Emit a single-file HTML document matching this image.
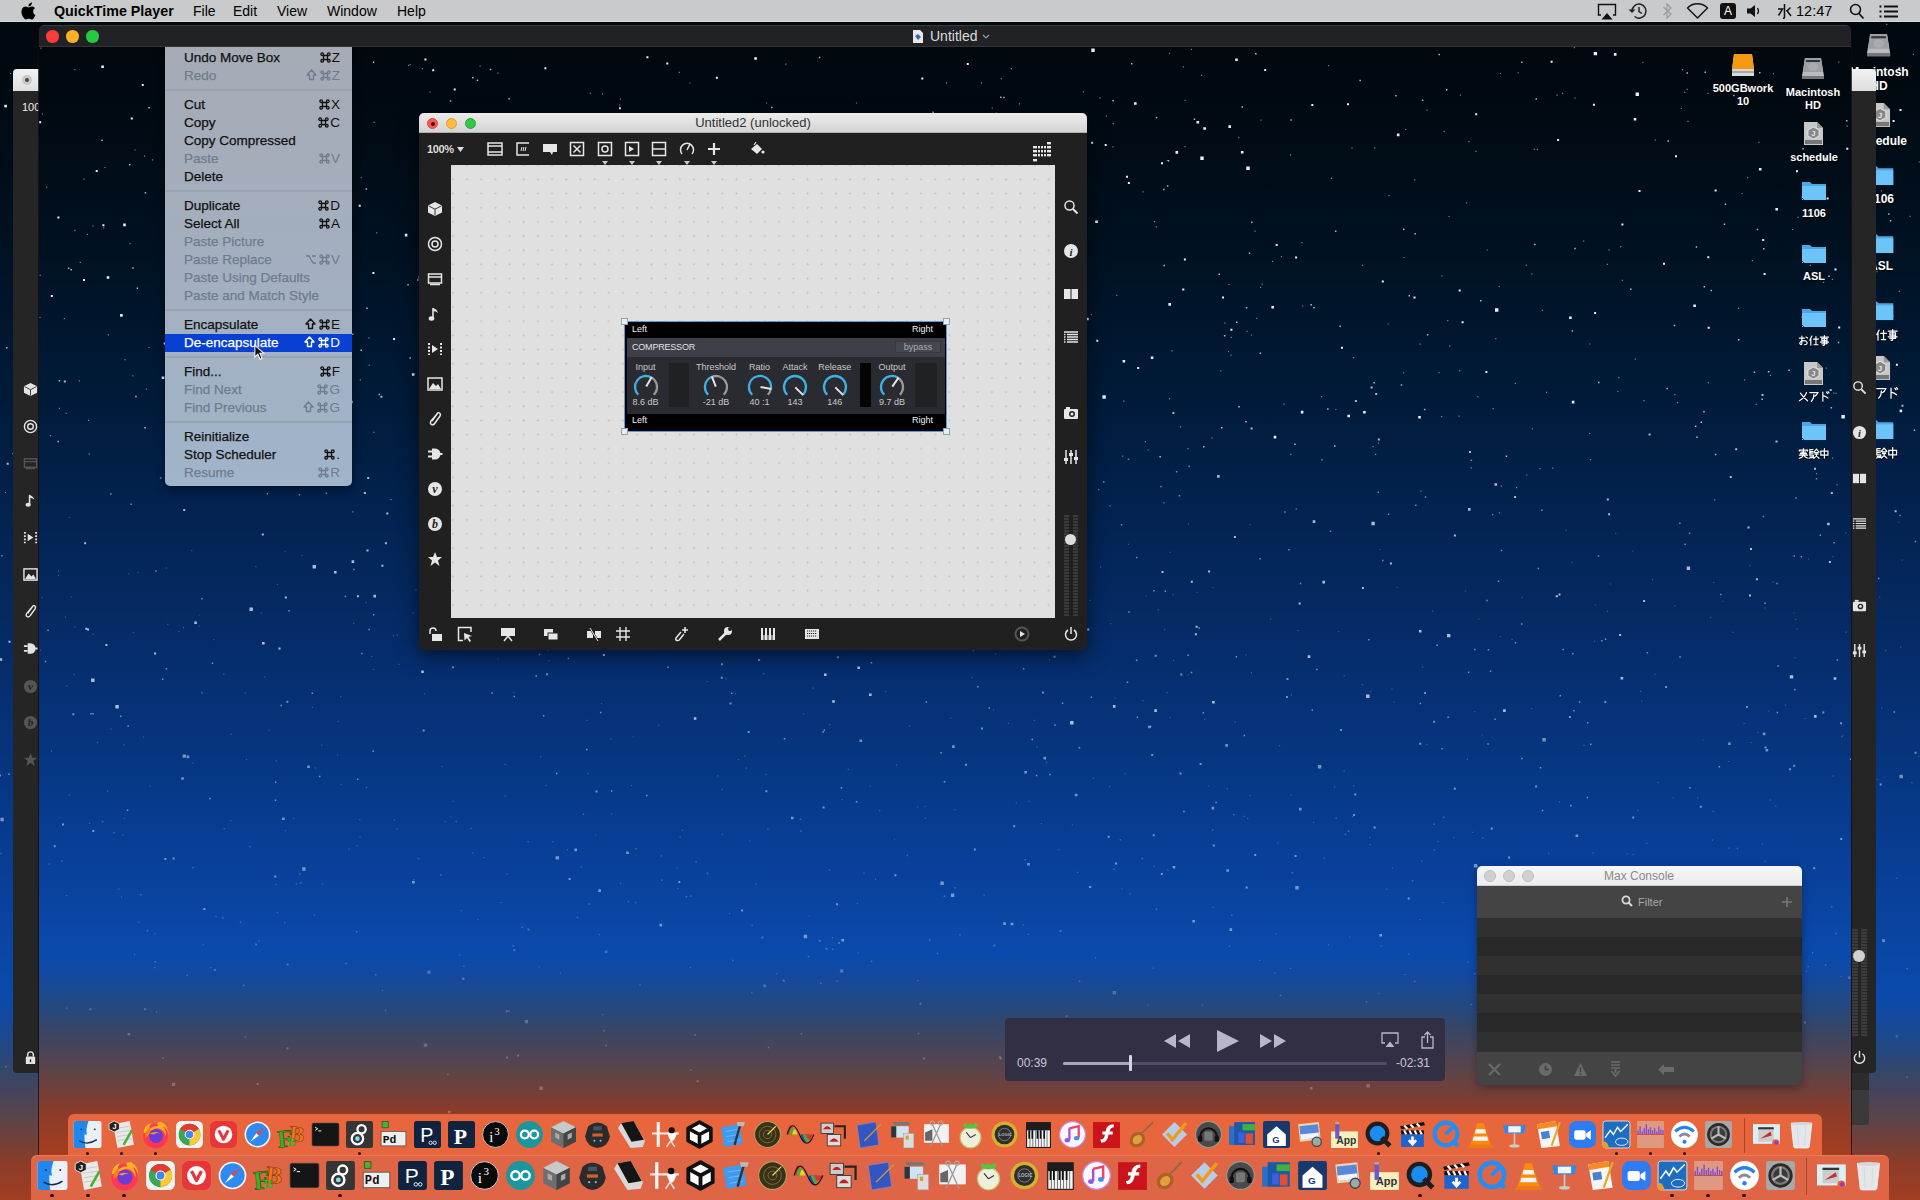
<!DOCTYPE html>
<html><head><meta charset="utf-8"><style>
*{box-sizing:border-box;margin:0;padding:0}
html,body{width:1920px;height:1200px;overflow:hidden;background:#000}
body{position:relative;font-family:"Liberation Sans",sans-serif;}
.a{position:absolute}
#wall{left:0;top:0;width:1920px;height:1200px;background:linear-gradient(to bottom,#02070d 16px,#010910 80px,#001121 239px,#001b3a 403px,#04265a 573px,#06337a 742px,#08409a 891px,#0a44a0 928px,#0a4aac 991px,#0c4aa8 1004px,#1448a0 1017px,#1a4a90 1033px,#25487f 1051px,#364666 1074px,#4a4458 1097px,#5e4448 1120px,#743f38 1143px,#8a3c2a 1161px,#a63e20 1209px);}
#menubar{left:0;top:0;width:1920px;height:22px;background:#c9cacc;border-bottom:1px solid #d6d8d8;color:#000;font-size:14px;}
#menubar span{position:absolute;top:3px;white-space:nowrap}
#qt{left:39px;top:25px;width:1812px;height:1131px;overflow:hidden;border-radius:5px 5px 0 0}
#vwall{left:0;top:0;width:1812px;height:1131px;background:linear-gradient(to bottom,#02070d 15px,#010910 75px,#001121 225px,#001b3a 380px,#04265a 540px,#06337a 700px,#08409a 840px,#0a44a0 875px,#0a4aac 925px,#0c4aa8 937px,#1448a0 950px,#1a4a90 965px,#25487f 982px,#364666 1003px,#4a4458 1025px,#5e4448 1047px,#743f38 1068px,#8a3c2a 1085px,#a63e20 1131px);}
#qttitle{left:0;top:0;width:1812px;height:22px;background:#212225;border-top:1px solid #3a3b3e;border-bottom:1px solid #333;border-radius:5px 5px 0 0}
.tl{position:absolute;width:13px;height:13px;border-radius:50%}

#qtedge{left:38px;top:25px;width:1814px;height:1131px;border-left:1px solid rgba(20,10,15,.75);border-right:1px solid rgba(20,10,15,.75);border-radius:5px 5px 0 0;pointer-events:none}
#vw{left:-39px;top:-25px;width:1920px;height:1200px}
.menu{left:165px;top:44px;width:187px;height:442px;background:linear-gradient(#a6abb5,#a3afbf 50%,#a0b4ca);border-radius:0 0 5px 5px;box-shadow:0 3px 10px rgba(0,0,0,.45)}
.mi{position:absolute;left:184px;font-size:13.5px;color:#111;white-space:nowrap;line-height:18px;height:18px;-webkit-text-stroke:0.25px currentColor}
.mi.d{color:#6f7c8e}
.sc{position:absolute;font-size:13.5px;color:#111;white-space:nowrap;line-height:18px;height:18px;text-align:right;right:1580px}
.sc.d{color:#6f7c8e}
.sep{position:absolute;left:165px;width:187px;height:2px;background:#98a3b3}
.hl{position:absolute;left:165px;top:334px;width:187px;height:18px;background:#0740d2}
.mw{left:419px;top:113px;width:668px;height:537px;background:#202020;border-radius:5px;box-shadow:0 6px 20px rgba(0,0,0,.55)}
.mwt{left:419px;top:113px;width:668px;height:20px;background:linear-gradient(#ececec,#d4d4d4);border-radius:5px 5px 0 0;border-bottom:1px solid #b0b0b0}
.canvas{left:451px;top:165px;width:604px;height:453px;background-color:#e0e0e0;background-image:radial-gradient(circle,#c8c8c8 0.9px,transparent 1.3px);background-size:14.19px 14.19px;background-position:-5.3px -7px}
.ico{position:absolute}
.w{fill:#e8e8e8}
.cl{font-size:9px;color:#f0f0f0;line-height:11px}
.kl{width:60px;text-align:center;font-size:9px;color:#c8c8c8;line-height:11px}

</style></head><body>
<div id="wall" class="a"></div>
<svg class="a" style="left:0;top:0" width="1920" height="1200" fill="#e6eeff"><path d="M12.2 453.1h1.2v1.2h-1.2zM4.9 491.9h1.2v1.2h-1.2zM10.0 72.9h1.2v1.2h-1.2z" fill-opacity="0.5"/><path d="M4.3 104.8h2.6v2.6h-2.6z" fill-opacity="1"/><path d="M6.0 347.1h1.5v1.5h-1.5z" fill-opacity="0.75"/><path d="M6.7 462.8h2v2h-2zM8.5 640.8h2v2h-2z" fill-opacity="0.75"/><path d="M5.2 1066.0h1.5v1.5h-1.5zM0.4 852.8h1.5v1.5h-1.5z" fill-opacity="0.25"/><path d="M0.4 817.8h3.4v3.4h-3.4z" fill-opacity="0.5"/><path d="M-1.0 774.4h2v2h-2z" fill-opacity="0.5"/><path d="M8.2 773.4h1.5v1.5h-1.5zM1.3 555.0h1.5v1.5h-1.5z" fill-opacity="0.5"/><path d="M-0.4 658.2h2.6v2.6h-2.6z" fill-opacity="0.75"/><path d="M1901.7 559.6h1.2v1.2h-1.2zM1879.1 596.4h1.2v1.2h-1.2zM1896.2 877.7h1.2v1.2h-1.2zM1918.0 756.1h1.2v1.2h-1.2zM1881.1 707.2h1.2v1.2h-1.2zM1898.3 521.4h1.2v1.2h-1.2zM1876.5 779.0h1.2v1.2h-1.2zM1885.0 650.0h1.2v1.2h-1.2zM1900.1 646.6h1.2v1.2h-1.2zM1911.3 782.0h1.2v1.2h-1.2z" fill-opacity="0.25"/><path d="M1901.5 404.7h2v2h-2zM1894.6 510.3h2v2h-2z" fill-opacity="0.75"/><path d="M1899.3 514.7h1.5v1.5h-1.5zM1877.9 577.7h1.5v1.5h-1.5zM1893.5 711.3h1.5v1.5h-1.5zM1914.7 540.7h1.5v1.5h-1.5z" fill-opacity="0.5"/><path d="M1906.4 968.1h1.5v1.5h-1.5zM1906.5 1076.3h1.5v1.5h-1.5z" fill-opacity="0.25"/><path d="M1886.2 23.8h1.2v1.2h-1.2zM1880.9 190.3h1.2v1.2h-1.2zM1909.4 215.7h1.2v1.2h-1.2zM1918.8 161.4h1.2v1.2h-1.2zM1912.8 53.8h1.2v1.2h-1.2zM1898.7 290.8h1.2v1.2h-1.2zM1876.7 34.1h1.2v1.2h-1.2zM1876.5 271.0h1.2v1.2h-1.2z" fill-opacity="0.5"/><path d="M1913.7 429.6h1.5v1.5h-1.5zM1886.9 171.1h1.5v1.5h-1.5zM1889.8 220.0h1.5v1.5h-1.5zM1888.0 138.2h1.5v1.5h-1.5zM1888.1 213.2h1.5v1.5h-1.5zM1891.9 314.9h1.5v1.5h-1.5z" fill-opacity="0.75"/><path d="M1886.3 1132.8h1.2v1.2h-1.2zM1880.7 1102.4h1.2v1.2h-1.2z" fill-opacity="0"/><path d="M1895.9 363.7h2v2h-2zM1892.6 119.9h2v2h-2zM1883.5 357.8h2v2h-2zM1899.5 109.1h2v2h-2zM1898.3 67.5h2v2h-2z" fill-opacity="1"/><path d="M1914.6 751.8h2v2h-2zM1879.7 783.5h2v2h-2z" fill-opacity="0.5"/><path d="M1882.3 939.3h2.6v2.6h-2.6z" fill-opacity="0.5"/><path d="M1899.5 774.8h3.4v3.4h-3.4z" fill-opacity="0.5"/><path d="M1899.6 409.6h2.6v2.6h-2.6z" fill-opacity="1"/><path d="M1895.7 1035.3h2v2h-2z" fill-opacity="0.25"/><path d="M1886.7 310.7h3.4v3.4h-3.4z" fill-opacity="1"/></svg>
<div id="menubar" class="a">
<svg class="a" style="left:20px;top:2px" width="16" height="18" viewBox="0 0 16 18"><path d="M13.1 9.6c0-2.2 1.800-3.200 1.900-3.300-1-1.500-2.600-1.700-3.200-1.700-1.300-.1-2.600.8-3.300.8-.7 0-1.700-.8-2.800-.8C4.300 4.600 2.900 5.400 2.200 6.700c-1.500 2.600-.4 6.500 1.100 8.600.7 1 1.600 2.200 2.700 2.200 1.100-.0 1.500-.7 2.800-.7s1.700.7 2.800.7c1.200 0 1.900-1.100 2.600-2.100.8-1.200 1.200-2.300 1.200-2.400-.0 0-2.300-.9-2.300-3.400zM11 3.200c.6-.7 1-1.700.9-2.700-.9 0-1.900.6-2.500 1.300-.6.6-1 1.600-.9 2.600 1 .1 1.900-.5 2.500-1.200z" fill="#000"/></svg>
<span style="left:54px;font-weight:bold;font-size:14.3px">QuickTime Player</span>
<span style="left:193px">File</span>
<span style="left:233px">Edit</span>
<span style="left:277px">View</span>
<span style="left:327px">Window</span>
<span style="left:397px">Help</span>
<svg class="a" style="left:1597px;top:3px" width="20" height="17" viewBox="0 0 20 17"><path d="M4 12H1.5V1.5H18.5V12H16" fill="none" stroke="#111" stroke-width="1.4"/><path d="M4.5 16.5L10 10L15.5 16.5Z" fill="#111"/></svg>
<svg class="a" style="left:1627px;top:2px" width="21" height="18" viewBox="0 0 21 18"><path d="M5 9A7 7 0 1 1 7.5 14.5" fill="none" stroke="#222" stroke-width="1.5"/><path d="M1.5 7.5L5 11L8.5 7.5Z" fill="#222"/><path d="M12 5V9.5L15 11.5" fill="none" stroke="#222" stroke-width="1.5"/></svg>
<svg class="a" style="left:1662px;top:2px" width="11" height="18" viewBox="0 0 11 18"><path d="M1.5 5L9 12L5 16V2L9 6L1.5 13" fill="none" stroke="#9a9a9a" stroke-width="1.2"/></svg>
<svg class="a" style="left:1686px;top:3px" width="23" height="16" viewBox="0 0 23 16"><path d="M1.500 5A14 14 0 0 1 21.5 5L11.5 15Z" fill="none" stroke="#111" stroke-width="1.4" stroke-linejoin="round"/></svg>
<div class="a" style="left:1720px;top:3px;width:16px;height:16px;border-radius:3px;background:#111;color:#fff;font-size:12px;line-height:16px;text-align:center">A</div>
<svg class="a" style="left:1746px;top:4px" width="16" height="14" viewBox="0 0 16 14"><path d="M1 4.500H4.500L9 1V13L4.500 9.500H1Z" fill="#111"/><path d="M11.500 4Q13.500 7 11.500 10" fill="none" stroke="#111" stroke-width="1.3"/></svg>
<svg class="a" style="left:1777px;top:3px" width="15" height="16" viewBox="0 0 15 16"><path d="M7.5 1V14.500Q7.5 15.500 6 15M1 6H5.500L1.500 12.500M13.500 4.500L9.500 8.500M9.500 7L14 13" fill="none" stroke="#111" stroke-width="1.5"/></svg>
<span style="left:1796px;font-size:14.5px">12:47</span>
<svg class="a" style="left:1849px;top:3px" width="16" height="17" viewBox="0 0 16 17"><circle cx="6.500" cy="6.500" r="5" fill="none" stroke="#111" stroke-width="1.6"/><path d="M10 10.500L14.500 15.500" stroke="#111" stroke-width="1.8"/></svg>
<svg class="a" style="left:1879px;top:5px" width="20" height="13" viewBox="0 0 20 13"><path d="M5 1.500H19M5 6.500H19M5 11.500H19" stroke="#111" stroke-width="1.8"/><path d="M0.500 1.500H2.500M0.500 6.500H2.500M0.500 11.500H2.500" stroke="#111" stroke-width="1.8"/></svg>
</div>
<svg class="ico" style="left:1866.4px;top:32px" width="25.2" height="25.2" viewBox="0 0 24 24"><path d="M4 2H20L23 20V23H1V20Z" fill="#b8bcc0"/><path d="M4 2H20L22 16H2Z" fill="#9ca0a4"/><rect x="5" y="4" width="14" height="2" fill="#333"/><ellipse cx="12" cy="11" rx="5" ry="4" fill="#a8acb0"/><rect x="1" y="20" width="22" height="3" fill="#777"/></svg>
<div class="a" style="left:1829px;top:64.9091px;font-size:11px;font-weight:bold;color:#fff;text-align:center;width:100px;line-height:13px;text-shadow:0 1px 2px rgba(0,0,0,.9);font-size:12px;line-height:14.1818px">Macintosh</div>
<div class="a" style="left:1829px;top:79.0909px;font-size:11px;font-weight:bold;color:#fff;text-align:center;width:100px;line-height:13px;text-shadow:0 1px 2px rgba(0,0,0,.9);font-size:12px;line-height:14.1818px">HD</div>
<svg class="ico" style="left:1868.4px;top:102px" width="25.2" height="25.2" viewBox="0 0 24 24"><path d="M2 1H15L21 7V24H2Z" fill="#c8c8c8"/><path d="M15 1V7H21" fill="#9a9a9a"/><path d="M11.5 6L17 9V15L11.5 18L6 15V9Z" fill="#888" stroke="#eee" stroke-width="0.8"/><text x="9.5" y="15" font-size="7" font-weight="bold" font-family="Liberation Sans" fill="#eee">J</text><rect x="3" y="19" width="17" height="4" fill="#777"/></svg>
<div class="a" style="left:1831px;top:133.909px;font-size:11px;font-weight:bold;color:#fff;text-align:center;width:100px;line-height:13px;text-shadow:0 1px 2px rgba(0,0,0,.9);font-size:12px;line-height:14.1818px">schedule</div>
<svg class="ico" style="left:1867.35px;top:163px" width="27.3" height="25.2" viewBox="0 0 26 24"><path d="M1 3H9L11 5H25V21H1Z" fill="#4aa8e8"/><path d="M1 7H25V21H1Z" fill="#6cc4f8"/><path d="M1 19L3 21" stroke="#222" stroke-width="0.8"/></svg>
<div class="a" style="left:1831px;top:191.909px;font-size:11px;font-weight:bold;color:#fff;text-align:center;width:100px;line-height:13px;text-shadow:0 1px 2px rgba(0,0,0,.9);font-size:12px;line-height:14.1818px">1106</div>
<svg class="ico" style="left:1867.35px;top:231px" width="27.3" height="25.2" viewBox="0 0 26 24"><path d="M1 3H9L11 5H25V21H1Z" fill="#4aa8e8"/><path d="M1 7H25V21H1Z" fill="#6cc4f8"/><path d="M1 19L3 21" stroke="#222" stroke-width="0.8"/></svg>
<div class="a" style="left:1831px;top:258.909px;font-size:11px;font-weight:bold;color:#fff;text-align:center;width:100px;line-height:13px;text-shadow:0 1px 2px rgba(0,0,0,.9);font-size:12px;line-height:14.1818px">ASL</div>
<svg class="ico" style="left:1867.35px;top:298px" width="27.3" height="25.2" viewBox="0 0 26 24"><path d="M1 3H9L11 5H25V21H1Z" fill="#4aa8e8"/><path d="M1 7H25V21H1Z" fill="#6cc4f8"/><path d="M1 19L3 21" stroke="#222" stroke-width="0.8"/></svg>
<svg class="ico" style="left:1863.6px;top:329.3px;overflow:visible" width="34.9" height="11.7" viewBox="0 0 30.6 10.5"><g fill="none" stroke="rgba(0,0,0,.55)" stroke-width="2.2" stroke-linecap="round" transform="translate(0 0.6)"><g transform="translate(0 0)"><path d="M1 3H6 M3.5 1V8Q3.5 10 2 9Q0.5 8 3 6Q7 4.5 8.5 7Q9 9.5 6 9.5 M7.5 2L9 3"/></g><g transform="translate(10.2 0)"><path d="M3 1L1 5 M2 3.5V10 M4.5 4H9.5 M7 1.5V9.5 M5 9.5H9"/></g><g transform="translate(20.4 0)"><path d="M1 2H9 M5 0.5V9.5Q5 10.5 3.5 10 M2.5 3.5H7.5V5.5H2.5Z M1 7H9 M2.5 8.5H7.5 M7.5 5.5V8.5"/></g></g><g fill="none" stroke="#fff" stroke-width="1.15" stroke-linecap="round"><g transform="translate(0 0)"><path d="M1 3H6 M3.5 1V8Q3.5 10 2 9Q0.5 8 3 6Q7 4.5 8.5 7Q9 9.5 6 9.5 M7.5 2L9 3"/></g><g transform="translate(10.2 0)"><path d="M3 1L1 5 M2 3.5V10 M4.5 4H9.5 M7 1.5V9.5 M5 9.5H9"/></g><g transform="translate(20.4 0)"><path d="M1 2H9 M5 0.5V9.5Q5 10.5 3.5 10 M2.5 3.5H7.5V5.5H2.5Z M1 7H9 M2.5 8.5H7.5 M7.5 5.5V8.5"/></g></g></svg>
<svg class="ico" style="left:1868.4px;top:355px" width="25.2" height="25.2" viewBox="0 0 24 24"><path d="M2 1H15L21 7V24H2Z" fill="#c8c8c8"/><path d="M15 1V7H21" fill="#9a9a9a"/><path d="M11.5 6L17 9V15L11.5 18L6 15V9Z" fill="#888" stroke="#eee" stroke-width="0.8"/><text x="9.5" y="15" font-size="7" font-weight="bold" font-family="Liberation Sans" fill="#eee">J</text><rect x="3" y="19" width="17" height="4" fill="#777"/></svg>
<svg class="ico" style="left:1863.6px;top:387.3px;overflow:visible" width="34.9" height="11.7" viewBox="0 0 30.6 10.5"><g fill="none" stroke="rgba(0,0,0,.55)" stroke-width="2.2" stroke-linecap="round" transform="translate(0 0.6)"><g transform="translate(0 0)"><path d="M2 2Q5 6 9 9.5 M8 1.5Q6 7 1 9.5"/></g><g transform="translate(10.2 0)"><path d="M1 1.5H9Q8 4 6 5 M5 3.5Q5 8 2.5 10"/></g><g transform="translate(20.4 0)"><path d="M3.5 1V10 M3.5 4.5Q6.5 5 8.5 7 M7 1L8 2.5 M8.5 0.5L9.5 2"/></g></g><g fill="none" stroke="#fff" stroke-width="1.15" stroke-linecap="round"><g transform="translate(0 0)"><path d="M2 2Q5 6 9 9.5 M8 1.5Q6 7 1 9.5"/></g><g transform="translate(10.2 0)"><path d="M1 1.5H9Q8 4 6 5 M5 3.5Q5 8 2.5 10"/></g><g transform="translate(20.4 0)"><path d="M3.5 1V10 M3.5 4.5Q6.5 5 8.5 7 M7 1L8 2.5 M8.5 0.5L9.5 2"/></g></g></svg>
<svg class="ico" style="left:1867.35px;top:417px" width="27.3" height="25.2" viewBox="0 0 26 24"><path d="M1 3H9L11 5H25V21H1Z" fill="#4aa8e8"/><path d="M1 7H25V21H1Z" fill="#6cc4f8"/><path d="M1 19L3 21" stroke="#222" stroke-width="0.8"/></svg>
<svg class="ico" style="left:1863.6px;top:447.3px;overflow:visible" width="34.9" height="11.7" viewBox="0 0 30.6 10.5"><g fill="none" stroke="rgba(0,0,0,.55)" stroke-width="2.2" stroke-linecap="round" transform="translate(0 0.6)"><g transform="translate(0 0)"><path d="M5 0.5V2 M1 3V2H9V3 M2.5 4H7.5 M2 5.5H8 M1 7H9 M5 3V7Q4 9.5 1 10 M5.5 7.5Q7 9.5 9.5 10"/></g><g transform="translate(10.2 0)"><path d="M1 1.5V7H4.5 M1 1.5H4 M1 3.5H4 M1 5H4 M4.5 7V9.5 M1.5 8.5L1 10 M2.5 8.5V9.5 M3.5 8.5V9.5 M7.5 1L5 4 M7.5 1L10 4 M6 4.5H9 M6 6H9 M7.5 6V8 M5 10Q7 8 7.5 8Q8 8 10 10"/></g><g transform="translate(20.4 0)"><path d="M1.5 3H8.5V7H1.5Z M5 0.5V10"/></g></g><g fill="none" stroke="#fff" stroke-width="1.15" stroke-linecap="round"><g transform="translate(0 0)"><path d="M5 0.5V2 M1 3V2H9V3 M2.5 4H7.5 M2 5.5H8 M1 7H9 M5 3V7Q4 9.5 1 10 M5.5 7.5Q7 9.5 9.5 10"/></g><g transform="translate(10.2 0)"><path d="M1 1.5V7H4.5 M1 1.5H4 M1 3.5H4 M1 5H4 M4.5 7V9.5 M1.5 8.5L1 10 M2.5 8.5V9.5 M3.5 8.5V9.5 M7.5 1L5 4 M7.5 1L10 4 M6 4.5H9 M6 6H9 M7.5 6V8 M5 10Q7 8 7.5 8Q8 8 10 10"/></g><g transform="translate(20.4 0)"><path d="M1.5 3H8.5V7H1.5Z M5 0.5V10"/></g></g></svg>
<div class="a" style="left:13px;top:69px;width:26px;height:1004px;background:#252525;border-radius:4px 0 0 4px"></div>
<div class="a" style="left:13px;top:69px;width:26px;height:22px;background:linear-gradient(#f2f2f2,#dedede);border-radius:4px 0 0 0"></div>
<div class="a" style="left:22px;top:75px;width:10px;height:10px;border-radius:50%;background:#c8c8c8"></div><div class="a" style="left:25px;top:78px;width:4px;height:4px;border-radius:50%;background:#444"></div>
<div class="a" style="left:22px;top:101px;font-size:11px;color:#eee;line-height:13px">100</div>
<svg class="ico" style="left:22.5px;top:381.5px" width="15" height="15" viewBox="0 0 16 16"><path d="M8 1L15 4.5V11.5L8 15L1 11.5V4.5Z" fill="#e4e4e4"/><path d="M1.5 4.8L8 8.2L14.5 4.8M8 8.2V14.5" fill="none" stroke="#252525" stroke-width="0.9"/></svg>
<svg class="ico" style="left:22.5px;top:418.5px" width="15" height="15" viewBox="0 0 16 16"><circle cx="8" cy="8" r="6.5" fill="none" stroke="#e4e4e4" stroke-width="1.5"/><circle cx="8" cy="8" r="3" fill="none" stroke="#e4e4e4" stroke-width="1.5"/></svg>
<svg class="ico" style="left:22.5px;top:455.5px" width="15" height="15" viewBox="0 0 16 16"><rect x="1.5" y="3" width="13" height="9" fill="none" stroke="#555" stroke-width="1.5"/><path d="M1.5 6H14.5M3 13.5H13" fill="none" stroke="#555" stroke-width="1.5"/></svg>
<svg class="ico" style="left:22.5px;top:492.5px" width="15" height="15" viewBox="0 0 16 16"><path d="M7 2V12" stroke="#e4e4e4" stroke-width="1.6"/><ellipse cx="5.5" cy="12.5" rx="2.8" ry="2.2" fill="#e4e4e4"/><path d="M7 2Q11 3 12 7Q10 5 7 5" fill="#e4e4e4"/></svg>
<svg class="ico" style="left:22.5px;top:529.5px" width="15" height="15" viewBox="0 0 16 16"><path d="M2 2V14M14 2V14" stroke="#e4e4e4" stroke-width="2" stroke-dasharray="2 1.5"/><path d="M5 4L11 8L5 12Z" fill="#e4e4e4"/></svg>
<svg class="ico" style="left:22.5px;top:566.5px" width="15" height="15" viewBox="0 0 16 16"><rect x="1" y="2" width="14" height="12" fill="none" stroke="#e4e4e4" stroke-width="1.5"/><path d="M2 13L6 7L9 10L11 8L14 13Z" fill="#e4e4e4"/></svg>
<svg class="ico" style="left:22.5px;top:603.5px" width="15" height="15" viewBox="0 0 16 16"><path d="M10 3L4 10Q2.5 12.5 4.5 13.5Q6.5 14.5 8 12L13 5Q14 3 12.5 2Q11 1 10 3L5 10" fill="none" stroke="#e4e4e4" stroke-width="1.5"/></svg>
<svg class="ico" style="left:22.5px;top:640.5px" width="15" height="15" viewBox="0 0 16 16"><path d="M1 5.5H5M1 10.5H5" stroke="#e4e4e4" stroke-width="1.8"/><path d="M5 2.5H8A5.5 5.5 0 0 1 8 13.5H5Z" fill="#e4e4e4"/><path d="M13 8H15.5" stroke="#e4e4e4" stroke-width="2"/></svg>
<svg class="ico" style="left:22.5px;top:678.5px" width="15" height="15" viewBox="0 0 16 16"><circle cx="8" cy="8" r="7" fill="#555"/><text x="8" y="12" font-size="12" font-style="italic" font-weight="bold" text-anchor="middle" fill="#252525" font-family="Liberation Serif">v</text></svg>
<svg class="ico" style="left:22.5px;top:714.5px" width="15" height="15" viewBox="0 0 16 16"><circle cx="8" cy="8" r="7" fill="#555"/><text x="8" y="12" font-size="12" font-style="italic" font-weight="bold" text-anchor="middle" fill="#252525" font-family="Liberation Serif">b</text></svg>
<svg class="ico" style="left:22.5px;top:751.5px" width="15" height="15" viewBox="0 0 16 16"><path d="M8 1L10 6H15L11 9.5L12.5 15L8 11.5L3.5 15L5 9.5L1 6H6Z" fill="#555"/></svg>
<svg class="ico" style="left:22.5px;top:1049.5px" width="15" height="15" viewBox="0 0 16 16"><rect x="3" y="7" width="10" height="8" rx="1" fill="#e4e4e4"/><path d="M5 7V5A3 3 0 0 1 11 5V7" fill="none" stroke="#e4e4e4" stroke-width="1.5"/><path d="M8 10V13" stroke="#252525" stroke-width="1.5"/></svg>
<div class="a" style="left:1851px;top:69px;width:25px;height:1004px;background:#252525;border-radius:0 4px 4px 0"></div>
<div class="a" style="left:1851px;top:69px;width:25px;height:22px;background:linear-gradient(#f2f2f2,#dedede);border-radius:0 4px 0 0"></div>
<svg class="ico" style="left:1851.5px;top:379.5px" width="15" height="15" viewBox="0 0 16 16"><circle cx="6.5" cy="6.5" r="4.5" fill="none" stroke="#e4e4e4" stroke-width="1.5"/><path d="M10 10L14.5 14.5" stroke="#e4e4e4" stroke-width="2"/></svg>
<svg class="ico" style="left:1851.5px;top:424.5px" width="15" height="15" viewBox="0 0 16 16"><circle cx="8" cy="8" r="7" fill="#e4e4e4"/><text x="8" y="12.5" font-size="11" font-style="italic" font-weight="bold" text-anchor="middle" fill="#252525" font-family="Liberation Serif">i</text></svg>
<svg class="ico" style="left:1851.5px;top:470.5px" width="15" height="15" viewBox="0 0 16 16"><rect x="1" y="3" width="6.5" height="10" fill="#e4e4e4"/><rect x="8.5" y="3" width="6.5" height="10" fill="#e4e4e4"/></svg>
<svg class="ico" style="left:1851.5px;top:515.5px" width="15" height="15" viewBox="0 0 16 16"><path d="M1 3H15M4 5.5H15M4 8H15M4 10.5H15M4 13H15M1 5.5H2.5M1 8H2.5M1 10.5H2.5M1 13H2.5" stroke="#e4e4e4" stroke-width="1.3"/></svg>
<svg class="ico" style="left:1851.5px;top:597.5px" width="15" height="15" viewBox="0 0 16 16"><rect x="1" y="4" width="14" height="10" rx="1" fill="#e4e4e4"/><circle cx="9" cy="9" r="3" fill="#252525"/><circle cx="9" cy="9" r="1.5" fill="#e4e4e4"/><rect x="3" y="2" width="4" height="2" fill="#e4e4e4"/></svg>
<svg class="ico" style="left:1851.5px;top:642.5px" width="15" height="15" viewBox="0 0 16 16"><path d="M3 1V15M8 1V15M13 1V15" stroke="#e4e4e4" stroke-width="1.5"/><rect x="1" y="9" width="4" height="3" fill="#e4e4e4"/><rect x="6" y="4" width="4" height="3" fill="#e4e4e4"/><rect x="11" y="8" width="4" height="3" fill="#e4e4e4"/></svg>
<svg class="ico" style="left:1851.5px;top:1049.5px" width="15" height="15" viewBox="0 0 16 16"><path d="M5 4A5.5 5.5 0 1 0 11 4" fill="none" stroke="#e4e4e4" stroke-width="1.5"/><path d="M8 1V8" fill="none" stroke="#e4e4e4" stroke-width="1.5"/></svg>
<div class="a" style="left:1852px;top:929px;width:6px;height:108px;background:repeating-linear-gradient(#3c3c3c 0 2px,#2a2a2a 2px 3px)"></div>
<div class="a" style="left:1861px;top:929px;width:6px;height:108px;background:repeating-linear-gradient(#3c3c3c 0 2px,#2a2a2a 2px 3px)"></div>
<div class="a" style="left:1853px;top:950px;width:12px;height:12px;border-radius:50%;background:#d0d0d0"></div>
<div class="a" style="left:1851px;top:1073px;width:18px;height:17px;background:#2c2c2c"></div>
<div class="a" style="left:1851px;top:1090px;width:18px;height:35px;background:#3a3a3a;border-radius:0 0 3px 0"></div>
<div id="qt" class="a">
<div id="vwall" class="a"></div>
<div id="vw" class="a">
<svg class="a" style="left:0;top:0" width="1920" height="1200" fill="#e6eeff"><path d="M857.4 666.5h2.6v2.6h-2.6zM869.0 693.4h2.6v2.6h-2.6zM907.6 565.4h2.6v2.6h-2.6zM1468.0 508.1h2.6v2.6h-2.6zM824.0 673.4h2.6v2.6h-2.6zM262.0 641.9h2.6v2.6h-2.6zM1827.1 522.7h2.6v2.6h-2.6zM1112.9 705.1h2.6v2.6h-2.6zM194.3 621.5h2.6v2.6h-2.6zM1418.9 629.9h2.6v2.6h-2.6zM1620.6 676.9h2.6v2.6h-2.6zM1833.7 677.2h2.6v2.6h-2.6zM351.6 560.3h2.6v2.6h-2.6zM334.0 570.9h2.6v2.6h-2.6zM373.4 594.8h2.6v2.6h-2.6zM693.8 717.2h2.6v2.6h-2.6zM1494.5 483.2h2.6v2.6h-2.6zM1154.3 709.3h2.6v2.6h-2.6zM1814.0 715.1h2.6v2.6h-2.6zM1312.7 520.3h2.6v2.6h-2.6zM541.9 573.8h2.6v2.6h-2.6zM1217.1 475.1h2.6v2.6h-2.6zM1503.1 709.3h2.6v2.6h-2.6zM1322.4 580.8h2.6v2.6h-2.6zM1307.7 655.3h2.6v2.6h-2.6zM1212.1 701.0h2.6v2.6h-2.6zM421.2 670.5h2.6v2.6h-2.6zM566.7 558.6h2.6v2.6h-2.6zM832.2 700.2h2.6v2.6h-2.6zM588.8 569.0h2.6v2.6h-2.6zM753.2 598.6h2.6v2.6h-2.6z" fill-opacity="0.75"/><path d="M882.0 609.4h1.5v1.5h-1.5zM372.9 614.0h1.5v1.5h-1.5zM943.8 780.9h1.5v1.5h-1.5zM1127.8 458.5h1.5v1.5h-1.5zM1776.2 582.7h1.5v1.5h-1.5zM731.0 692.4h1.5v1.5h-1.5zM92.2 713.1h1.5v1.5h-1.5zM1521.1 757.8h1.5v1.5h-1.5zM1489.8 670.5h1.5v1.5h-1.5zM719.1 504.7h1.5v1.5h-1.5zM266.6 492.9h1.5v1.5h-1.5zM972.0 523.2h1.5v1.5h-1.5zM1178.7 494.9h1.5v1.5h-1.5zM1424.8 496.2h1.5v1.5h-1.5zM1850.0 758.5h1.5v1.5h-1.5zM1679.3 656.3h1.5v1.5h-1.5zM344.7 595.8h1.5v1.5h-1.5zM556.0 772.8h1.5v1.5h-1.5zM1679.1 522.6h1.5v1.5h-1.5zM840.7 786.9h1.5v1.5h-1.5zM1061.8 702.4h1.5v1.5h-1.5zM972.6 649.7h1.5v1.5h-1.5zM932.8 642.2h1.5v1.5h-1.5zM1198.4 627.2h1.5v1.5h-1.5zM229.9 483.5h1.5v1.5h-1.5zM564.4 463.2h1.5v1.5h-1.5zM209.3 797.8h1.5v1.5h-1.5zM230.8 465.0h1.5v1.5h-1.5zM1022.9 668.1h1.5v1.5h-1.5zM297.3 474.7h1.5v1.5h-1.5zM1776.6 711.8h1.5v1.5h-1.5zM783.8 738.0h1.5v1.5h-1.5zM1470.6 459.4h1.5v1.5h-1.5zM1819.5 534.6h1.5v1.5h-1.5zM1570.1 805.1h1.5v1.5h-1.5zM110.1 493.2h1.5v1.5h-1.5zM604.1 516.5h1.5v1.5h-1.5zM325.6 492.6h1.5v1.5h-1.5zM311.5 692.4h1.5v1.5h-1.5zM471.9 593.7h1.5v1.5h-1.5zM1031.5 738.7h1.5v1.5h-1.5zM1164.6 590.4h1.5v1.5h-1.5zM1284.2 511.3h1.5v1.5h-1.5zM1815.8 478.0h1.5v1.5h-1.5zM1035.9 774.7h1.5v1.5h-1.5zM436.2 499.0h1.5v1.5h-1.5zM1188.4 465.6h1.5v1.5h-1.5zM1590.0 743.4h1.5v1.5h-1.5zM1288.2 548.9h1.5v1.5h-1.5zM1126.7 681.4h1.5v1.5h-1.5zM1500.8 549.8h1.5v1.5h-1.5zM542.9 715.1h1.5v1.5h-1.5zM1586.6 796.7h1.5v1.5h-1.5zM1578.9 701.3h1.5v1.5h-1.5zM697.1 461.6h1.5v1.5h-1.5zM610.9 790.2h1.5v1.5h-1.5zM1539.8 767.1h1.5v1.5h-1.5zM674.5 640.5h1.5v1.5h-1.5zM704.8 522.3h1.5v1.5h-1.5zM687.8 523.7h1.5v1.5h-1.5zM820.9 464.9h1.5v1.5h-1.5zM1720.1 593.7h1.5v1.5h-1.5zM822.4 731.2h1.5v1.5h-1.5zM1587.0 722.1h1.5v1.5h-1.5zM1368.1 639.1h1.5v1.5h-1.5zM925.6 701.3h1.5v1.5h-1.5zM1541.8 809.8h1.5v1.5h-1.5zM513.5 695.7h1.5v1.5h-1.5zM646.0 794.7h1.5v1.5h-1.5zM993.0 645.5h1.5v1.5h-1.5zM1800.6 556.1h1.5v1.5h-1.5zM1486.3 599.8h1.5v1.5h-1.5zM667.2 666.5h1.5v1.5h-1.5zM1078.7 747.0h1.5v1.5h-1.5zM201.2 598.0h1.5v1.5h-1.5zM1601.1 640.1h1.5v1.5h-1.5zM1215.4 801.8h1.5v1.5h-1.5zM170.3 479.9h1.5v1.5h-1.5zM701.1 530.7h1.5v1.5h-1.5zM1316.1 668.7h1.5v1.5h-1.5zM535.5 675.2h1.5v1.5h-1.5zM1136.0 556.8h1.5v1.5h-1.5zM1562.4 648.7h1.5v1.5h-1.5zM786.9 478.8h1.5v1.5h-1.5zM887.4 632.8h1.5v1.5h-1.5zM1419.6 702.7h1.5v1.5h-1.5zM372.4 750.6h1.5v1.5h-1.5zM1175.9 471.1h1.5v1.5h-1.5zM958.7 476.6h1.5v1.5h-1.5zM1103.0 481.2h1.5v1.5h-1.5zM1321.3 458.9h1.5v1.5h-1.5zM298.7 493.9h1.5v1.5h-1.5zM459.5 580.3h1.5v1.5h-1.5zM1382.1 559.7h1.5v1.5h-1.5zM1441.4 748.1h1.5v1.5h-1.5zM1128.2 611.2h1.5v1.5h-1.5zM563.9 551.6h1.5v1.5h-1.5zM915.2 487.6h1.5v1.5h-1.5zM120.1 715.4h1.5v1.5h-1.5zM1311.5 709.3h1.5v1.5h-1.5zM1795.3 497.3h1.5v1.5h-1.5zM787.5 617.9h1.5v1.5h-1.5zM599.2 533.1h1.5v1.5h-1.5zM830.2 552.9h1.5v1.5h-1.5zM709.0 551.0h1.5v1.5h-1.5zM130.4 503.5h1.5v1.5h-1.5zM1259.4 558.1h1.5v1.5h-1.5zM894.9 528.9h1.5v1.5h-1.5zM1833.4 541.9h1.5v1.5h-1.5zM855.8 801.0h1.5v1.5h-1.5zM1689.1 786.9h1.5v1.5h-1.5zM566.5 587.9h1.5v1.5h-1.5zM127.4 725.3h1.5v1.5h-1.5zM823.5 729.5h1.5v1.5h-1.5zM44.8 660.7h1.5v1.5h-1.5zM1494.3 718.5h1.5v1.5h-1.5zM280.4 704.8h1.5v1.5h-1.5zM1559.5 694.9h1.5v1.5h-1.5zM1572.1 652.9h1.5v1.5h-1.5zM1135.9 659.6h1.5v1.5h-1.5zM1202.6 711.9h1.5v1.5h-1.5zM1187.4 654.4h1.5v1.5h-1.5zM1684.4 543.5h1.5v1.5h-1.5zM1015.2 569.1h1.5v1.5h-1.5zM1329.8 530.6h1.5v1.5h-1.5zM1084.8 626.1h1.5v1.5h-1.5zM1120.8 524.0h1.5v1.5h-1.5zM988.5 707.2h1.5v1.5h-1.5zM1190.8 671.7h1.5v1.5h-1.5zM849.7 522.2h1.5v1.5h-1.5zM1541.1 509.6h1.5v1.5h-1.5zM1090.7 696.4h1.5v1.5h-1.5zM567.7 657.8h1.5v1.5h-1.5zM1153.3 590.0h1.5v1.5h-1.5zM1762.7 515.7h1.5v1.5h-1.5zM1718.6 766.1h1.5v1.5h-1.5zM90.1 713.1h1.5v1.5h-1.5zM1777.4 665.3h1.5v1.5h-1.5zM1136.6 716.5h1.5v1.5h-1.5zM165.7 668.0h1.5v1.5h-1.5zM288.3 610.0h1.5v1.5h-1.5zM361.2 652.7h1.5v1.5h-1.5zM599.9 711.7h1.5v1.5h-1.5zM1235.6 656.1h1.5v1.5h-1.5zM1160.2 485.7h1.5v1.5h-1.5zM1149.8 725.7h1.5v1.5h-1.5zM1467.9 671.6h1.5v1.5h-1.5zM1573.1 710.1h1.5v1.5h-1.5zM501.2 500.2h1.5v1.5h-1.5zM1436.4 644.5h1.5v1.5h-1.5zM161.9 678.4h1.5v1.5h-1.5zM126.8 809.4h1.5v1.5h-1.5zM211.7 662.4h1.5v1.5h-1.5zM1054.2 724.3h1.5v1.5h-1.5zM1299.8 582.7h1.5v1.5h-1.5zM1521.0 623.2h1.5v1.5h-1.5zM319.0 775.8h1.5v1.5h-1.5zM870.7 662.1h1.5v1.5h-1.5zM1764.2 602.4h1.5v1.5h-1.5zM1068.1 521.2h1.5v1.5h-1.5zM932.7 500.7h1.5v1.5h-1.5zM491.4 692.3h1.5v1.5h-1.5zM1487.7 649.0h1.5v1.5h-1.5zM1387.8 513.6h1.5v1.5h-1.5zM746.5 520.8h1.5v1.5h-1.5zM1010.4 641.4h1.5v1.5h-1.5zM1537.6 567.7h1.5v1.5h-1.5zM562.5 591.0h1.5v1.5h-1.5zM977.1 686.0h1.5v1.5h-1.5zM159.9 477.3h1.5v1.5h-1.5zM1415.1 504.5h1.5v1.5h-1.5zM1183.2 810.8h1.5v1.5h-1.5zM1646.6 652.0h1.5v1.5h-1.5zM536.3 645.1h1.5v1.5h-1.5zM1794.1 689.0h1.5v1.5h-1.5zM1447.4 716.6h1.5v1.5h-1.5zM274.9 781.4h1.5v1.5h-1.5zM1377.5 491.4h1.5v1.5h-1.5zM274.8 799.4h1.5v1.5h-1.5zM155.1 570.2h1.5v1.5h-1.5zM1514.7 642.0h1.5v1.5h-1.5zM586.0 748.7h1.5v1.5h-1.5zM940.3 752.0h1.5v1.5h-1.5zM538.8 653.7h1.5v1.5h-1.5zM47.3 629.4h1.5v1.5h-1.5zM1487.3 743.3h1.5v1.5h-1.5zM1597.7 555.3h1.5v1.5h-1.5zM368.4 628.8h1.5v1.5h-1.5zM353.1 568.7h1.5v1.5h-1.5zM357.0 778.4h1.5v1.5h-1.5zM1836.6 659.2h1.5v1.5h-1.5zM1474.1 648.7h1.5v1.5h-1.5zM1049.2 773.8h1.5v1.5h-1.5zM1051.2 550.4h1.5v1.5h-1.5zM1793.5 555.3h1.5v1.5h-1.5zM1688.8 532.5h1.5v1.5h-1.5zM919.1 551.2h1.5v1.5h-1.5zM1243.6 734.8h1.5v1.5h-1.5zM1604.8 638.6h1.5v1.5h-1.5zM1497.8 580.5h1.5v1.5h-1.5z" fill-opacity="0.5"/><path d="M1475.3 150.8h1.2v1.2h-1.2zM1153.8 221.1h1.2v1.2h-1.2zM995.8 112.4h1.2v1.2h-1.2zM1321.0 396.0h1.2v1.2h-1.2zM1573.7 47.0h1.2v1.2h-1.2zM1449.1 345.6h1.2v1.2h-1.2zM252.2 319.6h1.2v1.2h-1.2zM800.8 282.5h1.2v1.2h-1.2zM634.5 375.0h1.2v1.2h-1.2zM1608.5 249.2h1.2v1.2h-1.2zM408.0 64.8h1.2v1.2h-1.2zM846.0 113.4h1.2v1.2h-1.2zM537.0 283.8h1.2v1.2h-1.2zM1541.8 309.7h1.2v1.2h-1.2zM899.4 244.6h1.2v1.2h-1.2zM1589.1 432.9h1.2v1.2h-1.2zM1466.1 202.2h1.2v1.2h-1.2zM1758.3 141.8h1.2v1.2h-1.2zM1053.1 392.1h1.2v1.2h-1.2zM895.8 187.2h1.2v1.2h-1.2zM79.7 261.7h1.2v1.2h-1.2zM1283.3 403.6h1.2v1.2h-1.2zM1280.9 256.0h1.2v1.2h-1.2zM772.8 262.8h1.2v1.2h-1.2zM766.0 102.4h1.2v1.2h-1.2zM719.1 155.6h1.2v1.2h-1.2zM63.8 318.1h1.2v1.2h-1.2zM1403.5 256.9h1.2v1.2h-1.2zM148.5 346.9h1.2v1.2h-1.2zM905.5 280.0h1.2v1.2h-1.2zM1443.6 130.8h1.2v1.2h-1.2zM1238.1 137.0h1.2v1.2h-1.2zM693.8 451.8h1.2v1.2h-1.2zM755.2 476.2h1.2v1.2h-1.2zM1634.6 358.5h1.2v1.2h-1.2zM1492.1 514.0h1.2v1.2h-1.2zM718.8 232.3h1.2v1.2h-1.2zM145.7 388.5h1.2v1.2h-1.2zM104.3 166.9h1.2v1.2h-1.2zM1116.2 294.8h1.2v1.2h-1.2zM323.4 220.4h1.2v1.2h-1.2zM1546.0 391.8h1.2v1.2h-1.2zM578.7 420.6h1.2v1.2h-1.2zM1246.4 330.8h1.2v1.2h-1.2zM1536.7 148.7h1.2v1.2h-1.2zM1112.4 146.3h1.2v1.2h-1.2zM323.0 184.0h1.2v1.2h-1.2zM1526.2 474.4h1.2v1.2h-1.2zM785.2 63.5h1.2v1.2h-1.2zM1031.1 131.0h1.2v1.2h-1.2zM1677.0 402.0h1.2v1.2h-1.2zM164.9 184.4h1.2v1.2h-1.2zM949.2 486.4h1.2v1.2h-1.2zM593.4 485.0h1.2v1.2h-1.2zM39.4 316.9h1.2v1.2h-1.2zM1516.0 487.0h1.2v1.2h-1.2zM1099.3 97.3h1.2v1.2h-1.2zM845.0 134.0h1.2v1.2h-1.2zM1620.1 246.1h1.2v1.2h-1.2zM601.9 93.3h1.2v1.2h-1.2zM349.3 329.0h1.2v1.2h-1.2zM782.5 450.5h1.2v1.2h-1.2zM750.4 377.0h1.2v1.2h-1.2zM695.8 350.8h1.2v1.2h-1.2zM368.3 337.3h1.2v1.2h-1.2zM1682.0 69.0h1.2v1.2h-1.2zM752.3 310.7h1.2v1.2h-1.2zM448.0 370.3h1.2v1.2h-1.2zM429.3 91.5h1.2v1.2h-1.2zM1184.5 146.1h1.2v1.2h-1.2zM749.5 113.1h1.2v1.2h-1.2zM207.0 425.5h1.2v1.2h-1.2zM747.6 450.4h1.2v1.2h-1.2zM497.5 72.5h1.2v1.2h-1.2zM1163.3 502.2h1.2v1.2h-1.2zM1686.6 88.7h1.2v1.2h-1.2zM957.2 388.6h1.2v1.2h-1.2zM1808.7 212.6h1.2v1.2h-1.2zM1006.0 309.3h1.2v1.2h-1.2zM266.7 116.5h1.2v1.2h-1.2zM1335.3 408.9h1.2v1.2h-1.2zM1330.8 177.7h1.2v1.2h-1.2zM256.1 412.4h1.2v1.2h-1.2zM923.1 179.9h1.2v1.2h-1.2zM1171.4 350.3h1.2v1.2h-1.2zM912.1 452.1h1.2v1.2h-1.2zM598.9 133.4h1.2v1.2h-1.2zM1500.7 485.5h1.2v1.2h-1.2zM86.9 233.7h1.2v1.2h-1.2zM450.1 477.1h1.2v1.2h-1.2zM621.2 150.8h1.2v1.2h-1.2zM230.2 204.9h1.2v1.2h-1.2zM1755.6 403.7h1.2v1.2h-1.2zM798.3 473.0h1.2v1.2h-1.2zM1606.8 263.8h1.2v1.2h-1.2zM220.2 87.2h1.2v1.2h-1.2zM883.6 189.6h1.2v1.2h-1.2zM1372.5 446.0h1.2v1.2h-1.2zM797.8 358.4h1.2v1.2h-1.2zM1256.2 317.8h1.2v1.2h-1.2zM1831.8 278.7h1.2v1.2h-1.2zM1447.2 320.1h1.2v1.2h-1.2zM1000.7 78.0h1.2v1.2h-1.2zM1574.4 97.5h1.2v1.2h-1.2zM180.4 335.7h1.2v1.2h-1.2zM441.9 156.4h1.2v1.2h-1.2zM1122.1 455.5h1.2v1.2h-1.2zM134.5 149.4h1.2v1.2h-1.2zM665.8 228.1h1.2v1.2h-1.2zM1302.1 305.4h1.2v1.2h-1.2zM1037.7 415.7h1.2v1.2h-1.2zM497.9 371.4h1.2v1.2h-1.2zM1064.0 433.2h1.2v1.2h-1.2zM282.8 379.3h1.2v1.2h-1.2zM1772.8 73.1h1.2v1.2h-1.2zM1458.4 415.6h1.2v1.2h-1.2zM459.2 380.8h1.2v1.2h-1.2zM481.3 288.0h1.2v1.2h-1.2zM1831.9 457.5h1.2v1.2h-1.2zM1470.7 467.2h1.2v1.2h-1.2zM1751.8 260.1h1.2v1.2h-1.2zM860.6 459.3h1.2v1.2h-1.2zM373.3 431.8h1.2v1.2h-1.2zM594.6 249.2h1.2v1.2h-1.2zM186.1 293.6h1.2v1.2h-1.2zM951.3 224.2h1.2v1.2h-1.2zM1420.4 490.6h1.2v1.2h-1.2zM421.8 68.1h1.2v1.2h-1.2zM881.1 248.9h1.2v1.2h-1.2zM589.8 92.5h1.2v1.2h-1.2zM1168.9 398.1h1.2v1.2h-1.2zM949.9 426.2h1.2v1.2h-1.2zM1514.7 382.8h1.2v1.2h-1.2zM1617.3 390.9h1.2v1.2h-1.2zM678.7 71.8h1.2v1.2h-1.2zM610.9 349.0h1.2v1.2h-1.2zM1441.1 416.0h1.2v1.2h-1.2zM1387.6 323.4h1.2v1.2h-1.2zM1090.8 314.0h1.2v1.2h-1.2zM165.2 104.3h1.2v1.2h-1.2zM789.3 497.5h1.2v1.2h-1.2zM1426.5 109.6h1.2v1.2h-1.2zM831.3 188.2h1.2v1.2h-1.2zM255.7 383.7h1.2v1.2h-1.2zM1328.0 65.0h1.2v1.2h-1.2zM1498.9 512.2h1.2v1.2h-1.2zM1539.5 468.0h1.2v1.2h-1.2zM360.8 176.9h1.2v1.2h-1.2zM210.9 95.5h1.2v1.2h-1.2zM151.9 159.3h1.2v1.2h-1.2zM1301.3 242.0h1.2v1.2h-1.2zM683.2 445.6h1.2v1.2h-1.2zM567.8 335.8h1.2v1.2h-1.2zM78.7 380.3h1.2v1.2h-1.2zM1838.2 61.2h1.2v1.2h-1.2zM1260.0 286.8h1.2v1.2h-1.2zM1182.8 66.2h1.2v1.2h-1.2zM1228.3 284.1h1.2v1.2h-1.2zM293.0 270.2h1.2v1.2h-1.2zM1260.5 119.5h1.2v1.2h-1.2zM306.1 226.4h1.2v1.2h-1.2zM242.4 364.3h1.2v1.2h-1.2zM1741.5 192.9h1.2v1.2h-1.2zM1684.1 91.7h1.2v1.2h-1.2zM1826.6 337.6h1.2v1.2h-1.2zM40.4 47.5h1.2v1.2h-1.2zM614.1 487.2h1.2v1.2h-1.2zM1155.7 226.2h1.2v1.2h-1.2zM144.0 155.5h1.2v1.2h-1.2zM1589.8 459.1h1.2v1.2h-1.2zM1201.0 74.8h1.2v1.2h-1.2zM92.4 225.6h1.2v1.2h-1.2zM1531.8 428.3h1.2v1.2h-1.2zM311.4 211.8h1.2v1.2h-1.2zM913.5 193.1h1.2v1.2h-1.2zM1261.7 283.5h1.2v1.2h-1.2zM1038.5 398.4h1.2v1.2h-1.2zM878.4 177.5h1.2v1.2h-1.2zM699.0 455.6h1.2v1.2h-1.2zM716.7 501.7h1.2v1.2h-1.2zM1211.3 437.3h1.2v1.2h-1.2zM1707.8 382.1h1.2v1.2h-1.2zM1654.7 139.5h1.2v1.2h-1.2zM1492.6 408.1h1.2v1.2h-1.2zM1123.2 400.6h1.2v1.2h-1.2zM1048.1 154.3h1.2v1.2h-1.2zM1533.7 148.8h1.2v1.2h-1.2zM1552.1 467.6h1.2v1.2h-1.2zM256.7 228.9h1.2v1.2h-1.2zM269.4 437.4h1.2v1.2h-1.2zM301.2 96.5h1.2v1.2h-1.2zM689.4 82.4h1.2v1.2h-1.2zM612.3 455.3h1.2v1.2h-1.2zM730.0 242.0h1.2v1.2h-1.2zM258.1 382.1h1.2v1.2h-1.2zM556.0 370.7h1.2v1.2h-1.2zM655.3 298.7h1.2v1.2h-1.2zM928.9 465.3h1.2v1.2h-1.2zM132.2 375.3h1.2v1.2h-1.2zM907.3 421.4h1.2v1.2h-1.2zM237.4 416.3h1.2v1.2h-1.2zM1835.5 392.8h1.2v1.2h-1.2zM1561.9 92.7h1.2v1.2h-1.2zM1556.5 94.6h1.2v1.2h-1.2zM235.3 50.5h1.2v1.2h-1.2zM482.1 297.9h1.2v1.2h-1.2zM680.3 422.6h1.2v1.2h-1.2zM1147.6 449.4h1.2v1.2h-1.2zM58.8 407.7h1.2v1.2h-1.2zM1836.5 484.3h1.2v1.2h-1.2zM1290.0 154.3h1.2v1.2h-1.2zM1815.9 473.1h1.2v1.2h-1.2zM1250.9 334.4h1.2v1.2h-1.2zM991.2 352.1h1.2v1.2h-1.2zM703.1 257.4h1.2v1.2h-1.2zM1105.7 115.6h1.2v1.2h-1.2zM1769.9 374.7h1.2v1.2h-1.2zM439.2 209.6h1.2v1.2h-1.2zM933.0 512.1h1.2v1.2h-1.2zM1003.2 160.4h1.2v1.2h-1.2zM1018.8 103.3h1.2v1.2h-1.2zM1687.4 120.7h1.2v1.2h-1.2zM187.5 441.4h1.2v1.2h-1.2zM1295.7 508.5h1.2v1.2h-1.2zM46.1 186.6h1.2v1.2h-1.2zM1498.7 285.9h1.2v1.2h-1.2zM1825.7 367.5h1.2v1.2h-1.2zM255.7 134.3h1.2v1.2h-1.2zM1041.3 223.5h1.2v1.2h-1.2zM1184.5 99.7h1.2v1.2h-1.2zM409.5 64.0h1.2v1.2h-1.2zM88.6 453.3h1.2v1.2h-1.2zM1468.4 141.0h1.2v1.2h-1.2zM543.3 271.6h1.2v1.2h-1.2zM561.0 459.6h1.2v1.2h-1.2zM871.7 228.0h1.2v1.2h-1.2zM327.2 303.4h1.2v1.2h-1.2zM1028.5 417.9h1.2v1.2h-1.2zM74.3 229.8h1.2v1.2h-1.2zM204.3 314.1h1.2v1.2h-1.2zM930.3 489.3h1.2v1.2h-1.2zM989.9 441.7h1.2v1.2h-1.2zM497.9 493.7h1.2v1.2h-1.2zM930.0 326.9h1.2v1.2h-1.2zM439.9 187.7h1.2v1.2h-1.2zM373.5 121.8h1.2v1.2h-1.2zM1039.1 321.0h1.2v1.2h-1.2zM1643.4 400.0h1.2v1.2h-1.2zM980.2 450.2h1.2v1.2h-1.2zM952.4 151.2h1.2v1.2h-1.2zM293.9 330.9h1.2v1.2h-1.2zM308.8 327.0h1.2v1.2h-1.2zM320.2 473.8h1.2v1.2h-1.2zM644.9 447.7h1.2v1.2h-1.2zM1112.7 123.0h1.2v1.2h-1.2zM1405.0 128.9h1.2v1.2h-1.2zM129.5 243.0h1.2v1.2h-1.2zM368.6 364.6h1.2v1.2h-1.2zM981.8 368.5h1.2v1.2h-1.2zM41.8 113.4h1.2v1.2h-1.2zM991.7 107.5h1.2v1.2h-1.2zM784.6 244.9h1.2v1.2h-1.2zM871.9 230.3h1.2v1.2h-1.2zM376.1 232.2h1.2v1.2h-1.2zM239.9 89.2h1.2v1.2h-1.2zM1419.6 343.6h1.2v1.2h-1.2zM832.8 286.2h1.2v1.2h-1.2zM1531.2 273.3h1.2v1.2h-1.2zM855.9 102.4h1.2v1.2h-1.2zM590.1 293.8h1.2v1.2h-1.2zM271.0 242.6h1.2v1.2h-1.2zM619.1 104.5h1.2v1.2h-1.2zM1618.2 377.0h1.2v1.2h-1.2zM181.5 133.4h1.2v1.2h-1.2zM297.4 136.9h1.2v1.2h-1.2zM1414.1 179.3h1.2v1.2h-1.2zM1098.1 489.1h1.2v1.2h-1.2zM851.7 238.1h1.2v1.2h-1.2zM439.0 501.8h1.2v1.2h-1.2zM470.5 140.2h1.2v1.2h-1.2zM1169.0 52.7h1.2v1.2h-1.2zM692.6 389.2h1.2v1.2h-1.2zM479.5 65.6h1.2v1.2h-1.2zM352.2 511.2h1.2v1.2h-1.2zM1744.0 379.2h1.2v1.2h-1.2zM1190.9 48.7h1.2v1.2h-1.2zM1846.7 125.6h1.2v1.2h-1.2zM1403.0 372.2h1.2v1.2h-1.2zM1353.0 357.1h1.2v1.2h-1.2zM623.1 211.2h1.2v1.2h-1.2zM1351.4 147.6h1.2v1.2h-1.2zM608.2 506.1h1.2v1.2h-1.2zM645.8 434.6h1.2v1.2h-1.2zM1375.0 453.7h1.2v1.2h-1.2zM565.3 421.4h1.2v1.2h-1.2zM1082.8 91.3h1.2v1.2h-1.2zM87.9 419.7h1.2v1.2h-1.2zM49.8 435.0h1.2v1.2h-1.2zM1621.7 279.7h1.2v1.2h-1.2zM834.9 290.9h1.2v1.2h-1.2zM1583.1 240.6h1.2v1.2h-1.2zM619.8 98.6h1.2v1.2h-1.2zM906.8 114.8h1.2v1.2h-1.2zM1438.4 372.0h1.2v1.2h-1.2zM390.4 499.0h1.2v1.2h-1.2zM1374.1 147.2h1.2v1.2h-1.2zM713.8 316.3h1.2v1.2h-1.2zM1680.7 107.9h1.2v1.2h-1.2zM1477.2 396.0h1.2v1.2h-1.2zM1166.7 159.9h1.2v1.2h-1.2zM458.9 159.6h1.2v1.2h-1.2zM1179.9 426.2h1.2v1.2h-1.2zM39.6 274.7h1.2v1.2h-1.2zM1486.7 249.4h1.2v1.2h-1.2zM744.7 351.2h1.2v1.2h-1.2zM980.8 82.2h1.2v1.2h-1.2zM433.9 132.3h1.2v1.2h-1.2zM618.1 383.3h1.2v1.2h-1.2zM244.8 364.4h1.2v1.2h-1.2zM842.6 503.4h1.2v1.2h-1.2zM1109.4 505.3h1.2v1.2h-1.2zM103.1 227.2h1.2v1.2h-1.2zM1517.6 72.2h1.2v1.2h-1.2zM1272.0 260.7h1.2v1.2h-1.2zM1441.4 275.2h1.2v1.2h-1.2zM712.7 139.4h1.2v1.2h-1.2zM1003.6 230.3h1.2v1.2h-1.2zM1361.9 264.7h1.2v1.2h-1.2zM964.4 368.8h1.2v1.2h-1.2zM341.1 376.9h1.2v1.2h-1.2zM1797.5 216.8h1.2v1.2h-1.2zM1187.4 448.1h1.2v1.2h-1.2zM107.8 334.2h1.2v1.2h-1.2zM994.1 469.7h1.2v1.2h-1.2zM1747.1 177.1h1.2v1.2h-1.2zM793.9 504.1h1.2v1.2h-1.2zM1142.4 191.2h1.2v1.2h-1.2zM1230.4 354.5h1.2v1.2h-1.2zM469.1 408.5h1.2v1.2h-1.2zM1833.4 392.6h1.2v1.2h-1.2zM65.6 412.7h1.2v1.2h-1.2zM177.9 451.4h1.2v1.2h-1.2zM1707.5 92.7h1.2v1.2h-1.2zM1714.1 499.2h1.2v1.2h-1.2zM1230.7 336.7h1.2v1.2h-1.2zM896.1 288.5h1.2v1.2h-1.2zM1459.1 370.0h1.2v1.2h-1.2zM187.1 89.7h1.2v1.2h-1.2zM1144.8 441.1h1.2v1.2h-1.2zM1077.6 365.5h1.2v1.2h-1.2zM1377.9 442.5h1.2v1.2h-1.2zM124.4 359.0h1.2v1.2h-1.2zM421.2 460.6h1.2v1.2h-1.2zM1011.7 194.0h1.2v1.2h-1.2zM991.1 494.9h1.2v1.2h-1.2zM1073.1 138.2h1.2v1.2h-1.2zM634.7 142.4h1.2v1.2h-1.2zM702.5 504.4h1.2v1.2h-1.2zM1290.2 453.8h1.2v1.2h-1.2zM359.8 379.2h1.2v1.2h-1.2zM955.0 113.1h1.2v1.2h-1.2zM192.7 188.4h1.2v1.2h-1.2zM1388.3 195.1h1.2v1.2h-1.2zM1254.5 230.6h1.2v1.2h-1.2zM1448.5 215.9h1.2v1.2h-1.2zM946.0 82.2h1.2v1.2h-1.2zM1220.2 370.3h1.2v1.2h-1.2zM1010.8 68.0h1.2v1.2h-1.2zM1642.3 61.7h1.2v1.2h-1.2zM1224.2 322.6h1.2v1.2h-1.2zM1589.1 343.4h1.2v1.2h-1.2zM798.6 227.8h1.2v1.2h-1.2zM1227.9 351.1h1.2v1.2h-1.2zM960.6 170.5h1.2v1.2h-1.2zM239.9 274.2h1.2v1.2h-1.2zM1791.9 228.9h1.2v1.2h-1.2zM165.3 400.9h1.2v1.2h-1.2zM635.0 379.2h1.2v1.2h-1.2zM1823.0 281.8h1.2v1.2h-1.2zM74.3 69.0h1.2v1.2h-1.2zM1674.2 394.1h1.2v1.2h-1.2zM845.2 278.4h1.2v1.2h-1.2zM330.7 448.4h1.2v1.2h-1.2zM285.0 273.6h1.2v1.2h-1.2zM746.0 468.5h1.2v1.2h-1.2zM1499.8 72.9h1.2v1.2h-1.2zM312.2 311.2h1.2v1.2h-1.2zM526.3 169.1h1.2v1.2h-1.2zM1459.7 94.5h1.2v1.2h-1.2zM797.5 166.1h1.2v1.2h-1.2zM1495.2 338.0h1.2v1.2h-1.2zM254.2 467.4h1.2v1.2h-1.2zM1525.7 264.8h1.2v1.2h-1.2zM436.9 209.5h1.2v1.2h-1.2zM1737.9 307.8h1.2v1.2h-1.2zM789.7 113.8h1.2v1.2h-1.2zM1037.8 319.1h1.2v1.2h-1.2zM83.5 178.6h1.2v1.2h-1.2zM273.0 215.4h1.2v1.2h-1.2zM1809.8 264.8h1.2v1.2h-1.2z" fill-opacity="0.5"/><path d="M202.7 944.3h1.2v1.2h-1.2zM275.7 760.3h1.2v1.2h-1.2zM201.7 692.7h1.2v1.2h-1.2zM1684.5 953.3h1.2v1.2h-1.2zM470.4 827.8h1.2v1.2h-1.2zM1531.0 707.9h1.2v1.2h-1.2zM356.3 845.3h1.2v1.2h-1.2zM706.6 680.9h1.2v1.2h-1.2zM1290.9 694.5h1.2v1.2h-1.2zM1632.6 854.0h1.2v1.2h-1.2zM1370.3 690.7h1.2v1.2h-1.2zM630.9 784.9h1.2v1.2h-1.2zM735.0 693.1h1.2v1.2h-1.2zM1172.2 594.1h1.2v1.2h-1.2zM284.6 550.8h1.2v1.2h-1.2zM123.5 744.2h1.2v1.2h-1.2zM1775.1 805.5h1.2v1.2h-1.2zM894.0 838.4h1.2v1.2h-1.2zM751.5 924.7h1.2v1.2h-1.2zM1728.3 847.5h1.2v1.2h-1.2zM154.5 933.4h1.2v1.2h-1.2zM950.2 717.6h1.2v1.2h-1.2zM1795.0 618.7h1.2v1.2h-1.2zM260.9 612.5h1.2v1.2h-1.2zM396.7 634.6h1.2v1.2h-1.2zM1380.7 945.3h1.2v1.2h-1.2zM472.1 852.2h1.2v1.2h-1.2zM971.3 677.1h1.2v1.2h-1.2zM1070.5 637.6h1.2v1.2h-1.2zM1153.5 865.7h1.2v1.2h-1.2zM1121.1 888.4h1.2v1.2h-1.2zM992.9 709.4h1.2v1.2h-1.2zM552.2 841.1h1.2v1.2h-1.2zM322.1 883.3h1.2v1.2h-1.2zM1664.7 876.3h1.2v1.2h-1.2zM1812.0 952.1h1.2v1.2h-1.2zM1169.5 551.8h1.2v1.2h-1.2zM132.7 632.1h1.2v1.2h-1.2zM513.4 692.1h1.2v1.2h-1.2zM1764.6 860.7h1.2v1.2h-1.2zM1036.1 746.3h1.2v1.2h-1.2zM424.7 517.0h1.2v1.2h-1.2zM917.0 806.4h1.2v1.2h-1.2zM1352.1 816.0h1.2v1.2h-1.2zM832.0 937.0h1.2v1.2h-1.2zM983.5 894.5h1.2v1.2h-1.2zM1212.5 906.9h1.2v1.2h-1.2zM1772.5 581.6h1.2v1.2h-1.2zM994.4 618.4h1.2v1.2h-1.2zM1832.7 775.6h1.2v1.2h-1.2zM58.1 570.6h1.2v1.2h-1.2zM1526.8 984.8h1.2v1.2h-1.2zM527.5 841.0h1.2v1.2h-1.2zM1023.0 629.4h1.2v1.2h-1.2zM1790.4 966.6h1.2v1.2h-1.2zM721.8 833.8h1.2v1.2h-1.2zM1060.6 554.4h1.2v1.2h-1.2zM1058.2 849.1h1.2v1.2h-1.2zM1234.7 721.3h1.2v1.2h-1.2zM1467.3 961.5h1.2v1.2h-1.2zM677.2 601.4h1.2v1.2h-1.2zM1750.5 741.9h1.2v1.2h-1.2zM692.9 559.9h1.2v1.2h-1.2zM353.1 622.8h1.2v1.2h-1.2zM107.0 790.5h1.2v1.2h-1.2zM1840.6 976.0h1.2v1.2h-1.2zM991.5 628.6h1.2v1.2h-1.2zM1297.6 630.0h1.2v1.2h-1.2zM680.1 570.4h1.2v1.2h-1.2zM595.0 834.4h1.2v1.2h-1.2zM1641.0 700.6h1.2v1.2h-1.2zM540.0 756.1h1.2v1.2h-1.2zM874.9 878.8h1.2v1.2h-1.2zM1722.2 600.8h1.2v1.2h-1.2zM1045.9 761.7h1.2v1.2h-1.2zM337.7 720.8h1.2v1.2h-1.2zM465.9 588.8h1.2v1.2h-1.2zM1089.5 599.7h1.2v1.2h-1.2zM70.6 596.6h1.2v1.2h-1.2zM1022.7 924.3h1.2v1.2h-1.2zM1164.0 629.1h1.2v1.2h-1.2zM1289.9 967.9h1.2v1.2h-1.2zM863.4 872.5h1.2v1.2h-1.2zM1421.5 860.5h1.2v1.2h-1.2zM497.2 658.4h1.2v1.2h-1.2zM729.0 912.9h1.2v1.2h-1.2zM371.1 655.9h1.2v1.2h-1.2zM1711.9 839.5h1.2v1.2h-1.2zM627.8 901.1h1.2v1.2h-1.2zM311.8 706.7h1.2v1.2h-1.2zM284.8 830.0h1.2v1.2h-1.2zM1353.0 785.2h1.2v1.2h-1.2zM633.1 597.7h1.2v1.2h-1.2zM340.5 784.1h1.2v1.2h-1.2zM1040.8 822.9h1.2v1.2h-1.2zM1100.0 566.5h1.2v1.2h-1.2zM1654.3 673.8h1.2v1.2h-1.2zM538.8 966.4h1.2v1.2h-1.2zM452.4 800.7h1.2v1.2h-1.2zM40.1 649.5h1.2v1.2h-1.2zM223.6 828.0h1.2v1.2h-1.2zM856.7 902.7h1.2v1.2h-1.2zM749.2 840.4h1.2v1.2h-1.2zM721.4 788.7h1.2v1.2h-1.2zM1021.5 582.1h1.2v1.2h-1.2zM598.7 934.1h1.2v1.2h-1.2zM1027.7 933.8h1.2v1.2h-1.2zM73.3 674.0h1.2v1.2h-1.2zM1609.9 583.4h1.2v1.2h-1.2zM841.5 971.0h1.2v1.2h-1.2zM600.1 616.7h1.2v1.2h-1.2zM767.3 828.5h1.2v1.2h-1.2zM1028.2 800.8h1.2v1.2h-1.2zM619.9 882.7h1.2v1.2h-1.2zM96.8 742.1h1.2v1.2h-1.2zM155.9 1011.3h1.2v1.2h-1.2zM1464.7 590.6h1.2v1.2h-1.2zM1679.5 930.0h1.2v1.2h-1.2zM1626.7 853.4h1.2v1.2h-1.2zM1249.5 524.1h1.2v1.2h-1.2zM1743.5 722.9h1.2v1.2h-1.2zM1127.9 543.7h1.2v1.2h-1.2zM765.5 774.0h1.2v1.2h-1.2zM1167.3 869.3h1.2v1.2h-1.2zM255.3 566.1h1.2v1.2h-1.2zM264.2 676.2h1.2v1.2h-1.2zM198.5 614.4h1.2v1.2h-1.2zM1796.6 628.6h1.2v1.2h-1.2zM1147.7 1004.4h1.2v1.2h-1.2zM1369.2 836.7h1.2v1.2h-1.2zM580.8 866.3h1.2v1.2h-1.2zM994.9 653.6h1.2v1.2h-1.2zM608.1 583.2h1.2v1.2h-1.2zM1396.4 586.9h1.2v1.2h-1.2zM1142.3 700.1h1.2v1.2h-1.2zM1466.8 758.7h1.2v1.2h-1.2zM48.5 863.6h1.2v1.2h-1.2zM723.0 542.9h1.2v1.2h-1.2zM1245.6 654.3h1.2v1.2h-1.2zM340.1 696.1h1.2v1.2h-1.2zM1110.0 623.0h1.2v1.2h-1.2zM1361.9 684.1h1.2v1.2h-1.2zM215.4 915.9h1.2v1.2h-1.2zM1007.8 722.7h1.2v1.2h-1.2zM1712.6 810.8h1.2v1.2h-1.2zM1761.7 843.3h1.2v1.2h-1.2zM1592.4 852.5h1.2v1.2h-1.2zM276.8 584.1h1.2v1.2h-1.2zM1704.1 906.1h1.2v1.2h-1.2zM461.4 548.6h1.2v1.2h-1.2zM223.2 673.5h1.2v1.2h-1.2zM149.7 785.4h1.2v1.2h-1.2zM178.3 630.8h1.2v1.2h-1.2zM396.3 828.3h1.2v1.2h-1.2zM1715.1 998.6h1.2v1.2h-1.2zM1805.8 970.6h1.2v1.2h-1.2zM284.0 922.1h1.2v1.2h-1.2zM1571.4 562.1h1.2v1.2h-1.2zM1640.0 690.7h1.2v1.2h-1.2zM1017.1 556.9h1.2v1.2h-1.2zM348.2 848.6h1.2v1.2h-1.2zM1710.1 616.7h1.2v1.2h-1.2zM41.4 597.0h1.2v1.2h-1.2zM463.3 965.8h1.2v1.2h-1.2zM1674.3 605.3h1.2v1.2h-1.2zM1327.9 944.3h1.2v1.2h-1.2zM1728.1 760.9h1.2v1.2h-1.2zM1196.5 591.9h1.2v1.2h-1.2zM985.3 587.4h1.2v1.2h-1.2zM1845.6 631.6h1.2v1.2h-1.2zM1077.0 871.8h1.2v1.2h-1.2zM122.5 834.3h1.2v1.2h-1.2zM137.6 571.7h1.2v1.2h-1.2zM1607.0 610.7h1.2v1.2h-1.2zM1472.2 831.7h1.2v1.2h-1.2zM610.2 738.2h1.2v1.2h-1.2zM1632.2 550.6h1.2v1.2h-1.2zM1226.7 788.1h1.2v1.2h-1.2zM1094.8 957.2h1.2v1.2h-1.2zM1391.3 688.4h1.2v1.2h-1.2zM1657.4 782.0h1.2v1.2h-1.2zM677.4 888.0h1.2v1.2h-1.2zM687.9 642.3h1.2v1.2h-1.2zM717.1 775.3h1.2v1.2h-1.2zM602.1 1014.1h1.2v1.2h-1.2zM1477.2 865.9h1.2v1.2h-1.2zM924.7 817.6h1.2v1.2h-1.2zM1313.0 821.9h1.2v1.2h-1.2zM1697.0 797.2h1.2v1.2h-1.2zM682.0 829.8h1.2v1.2h-1.2zM123.8 817.9h1.2v1.2h-1.2zM1247.1 817.7h1.2v1.2h-1.2zM600.9 703.0h1.2v1.2h-1.2zM1481.4 734.4h1.2v1.2h-1.2zM744.2 755.6h1.2v1.2h-1.2zM734.3 635.2h1.2v1.2h-1.2zM110.4 728.5h1.2v1.2h-1.2zM751.2 992.3h1.2v1.2h-1.2zM398.4 663.8h1.2v1.2h-1.2zM313.8 914.5h1.2v1.2h-1.2zM57.9 574.8h1.2v1.2h-1.2zM1129.4 893.2h1.2v1.2h-1.2zM1651.8 877.2h1.2v1.2h-1.2zM1757.5 731.8h1.2v1.2h-1.2zM1386.1 888.5h1.2v1.2h-1.2zM1804.4 717.9h1.2v1.2h-1.2zM737.9 759.1h1.2v1.2h-1.2zM677.7 571.4h1.2v1.2h-1.2zM565.2 517.2h1.2v1.2h-1.2zM639.4 984.2h1.2v1.2h-1.2zM1109.0 786.1h1.2v1.2h-1.2zM504.6 795.5h1.2v1.2h-1.2zM1408.3 953.5h1.2v1.2h-1.2zM65.9 895.1h1.2v1.2h-1.2zM1559.0 801.3h1.2v1.2h-1.2zM1665.3 1006.1h1.2v1.2h-1.2zM763.0 673.0h1.2v1.2h-1.2zM68.9 794.3h1.2v1.2h-1.2zM842.5 629.4h1.2v1.2h-1.2zM128.2 573.2h1.2v1.2h-1.2zM1630.9 908.4h1.2v1.2h-1.2zM1323.7 857.6h1.2v1.2h-1.2zM1732.3 631.8h1.2v1.2h-1.2zM1204.1 718.8h1.2v1.2h-1.2zM477.6 918.7h1.2v1.2h-1.2zM1243.6 815.7h1.2v1.2h-1.2zM1349.4 936.5h1.2v1.2h-1.2zM1832.4 556.1h1.2v1.2h-1.2zM392.9 635.1h1.2v1.2h-1.2zM520.5 639.5h1.2v1.2h-1.2zM1608.5 868.2h1.2v1.2h-1.2zM1169.6 717.0h1.2v1.2h-1.2zM1793.2 612.4h1.2v1.2h-1.2zM586.6 719.7h1.2v1.2h-1.2zM201.1 691.6h1.2v1.2h-1.2zM1338.0 631.0h1.2v1.2h-1.2zM1521.6 596.8h1.2v1.2h-1.2zM88.9 822.7h1.2v1.2h-1.2zM635.0 902.1h1.2v1.2h-1.2zM1547.9 852.8h1.2v1.2h-1.2zM213.2 639.0h1.2v1.2h-1.2zM548.3 660.0h1.2v1.2h-1.2zM245.9 758.9h1.2v1.2h-1.2zM1764.3 607.3h1.2v1.2h-1.2zM1378.2 992.9h1.2v1.2h-1.2zM138.1 921.5h1.2v1.2h-1.2zM301.5 554.9h1.2v1.2h-1.2zM66.2 685.5h1.2v1.2h-1.2zM504.6 763.8h1.2v1.2h-1.2zM295.7 883.5h1.2v1.2h-1.2zM1166.4 692.0h1.2v1.2h-1.2zM725.6 678.3h1.2v1.2h-1.2zM1201.7 1004.6h1.2v1.2h-1.2zM1048.9 659.3h1.2v1.2h-1.2zM977.7 549.9h1.2v1.2h-1.2zM182.9 627.0h1.2v1.2h-1.2zM908.9 725.6h1.2v1.2h-1.2zM879.1 810.0h1.2v1.2h-1.2zM1369.4 844.0h1.2v1.2h-1.2zM1842.3 735.4h1.2v1.2h-1.2zM359.5 836.3h1.2v1.2h-1.2zM1474.1 711.1h1.2v1.2h-1.2zM1768.3 710.6h1.2v1.2h-1.2zM1212.4 587.1h1.2v1.2h-1.2zM803.0 713.4h1.2v1.2h-1.2zM1615.1 532.7h1.2v1.2h-1.2zM134.0 954.1h1.2v1.2h-1.2zM713.0 578.3h1.2v1.2h-1.2zM1713.0 581.9h1.2v1.2h-1.2zM954.3 809.0h1.2v1.2h-1.2zM863.2 611.6h1.2v1.2h-1.2zM192.3 762.2h1.2v1.2h-1.2zM1840.9 736.3h1.2v1.2h-1.2zM372.8 668.9h1.2v1.2h-1.2zM808.8 915.4h1.2v1.2h-1.2zM321.1 744.6h1.2v1.2h-1.2zM120.8 896.6h1.2v1.2h-1.2zM460.7 910.0h1.2v1.2h-1.2zM1033.8 719.8h1.2v1.2h-1.2zM847.8 768.8h1.2v1.2h-1.2zM1259.1 959.9h1.2v1.2h-1.2zM1769.6 799.6h1.2v1.2h-1.2zM1749.5 564.7h1.2v1.2h-1.2zM679.5 836.2h1.2v1.2h-1.2zM632.7 736.4h1.2v1.2h-1.2zM917.2 980.1h1.2v1.2h-1.2zM1290.7 794.4h1.2v1.2h-1.2zM821.5 644.9h1.2v1.2h-1.2zM841.4 799.0h1.2v1.2h-1.2zM1015.8 802.3h1.2v1.2h-1.2zM829.0 724.1h1.2v1.2h-1.2zM415.4 589.3h1.2v1.2h-1.2zM755.4 883.5h1.2v1.2h-1.2zM1478.3 618.4h1.2v1.2h-1.2zM1152.8 967.6h1.2v1.2h-1.2zM1208.1 785.4h1.2v1.2h-1.2zM1391.9 867.4h1.2v1.2h-1.2zM1583.4 744.8h1.2v1.2h-1.2zM413.2 879.0h1.2v1.2h-1.2zM1808.1 558.6h1.2v1.2h-1.2zM1404.4 973.9h1.2v1.2h-1.2zM547.9 559.5h1.2v1.2h-1.2zM506.5 873.3h1.2v1.2h-1.2zM1499.8 635.9h1.2v1.2h-1.2zM896.0 764.3h1.2v1.2h-1.2zM1187.6 674.4h1.2v1.2h-1.2zM293.0 817.9h1.2v1.2h-1.2zM64.8 616.6h1.2v1.2h-1.2zM424.1 693.3h1.2v1.2h-1.2zM1612.1 940.5h1.2v1.2h-1.2zM1172.9 659.8h1.2v1.2h-1.2zM676.2 867.4h1.2v1.2h-1.2zM459.0 954.2h1.2v1.2h-1.2zM1679.0 924.0h1.2v1.2h-1.2zM1620.3 905.1h1.2v1.2h-1.2zM268.3 729.4h1.2v1.2h-1.2zM444.6 821.1h1.2v1.2h-1.2zM525.0 623.2h1.2v1.2h-1.2zM1437.6 840.8h1.2v1.2h-1.2zM191.1 550.0h1.2v1.2h-1.2zM1549.6 971.9h1.2v1.2h-1.2zM812.4 687.6h1.2v1.2h-1.2zM1343.6 675.1h1.2v1.2h-1.2zM1453.2 837.1h1.2v1.2h-1.2zM1187.8 523.2h1.2v1.2h-1.2zM935.3 607.8h1.2v1.2h-1.2zM660.8 855.3h1.2v1.2h-1.2zM1124.4 773.4h1.2v1.2h-1.2zM450.3 816.4h1.2v1.2h-1.2zM412.5 612.5h1.2v1.2h-1.2zM1419.4 918.9h1.2v1.2h-1.2zM381.9 990.0h1.2v1.2h-1.2zM165.7 567.4h1.2v1.2h-1.2zM1279.0 745.0h1.2v1.2h-1.2zM1594.9 604.4h1.2v1.2h-1.2zM1270.1 618.5h1.2v1.2h-1.2zM1157.8 609.3h1.2v1.2h-1.2zM1672.4 797.4h1.2v1.2h-1.2zM1651.9 579.0h1.2v1.2h-1.2zM1333.9 786.3h1.2v1.2h-1.2zM230.2 820.0h1.2v1.2h-1.2zM898.1 566.6h1.2v1.2h-1.2zM1379.3 548.9h1.2v1.2h-1.2zM869.7 785.4h1.2v1.2h-1.2zM586.5 606.8h1.2v1.2h-1.2zM50.9 750.6h1.2v1.2h-1.2zM1114.7 697.4h1.2v1.2h-1.2zM500.2 901.9h1.2v1.2h-1.2zM1035.5 607.6h1.2v1.2h-1.2zM1432.0 610.6h1.2v1.2h-1.2zM167.2 623.8h1.2v1.2h-1.2zM527.9 539.8h1.2v1.2h-1.2zM566.9 849.0h1.2v1.2h-1.2zM1637.4 809.8h1.2v1.2h-1.2zM92.6 633.8h1.2v1.2h-1.2zM1594.0 640.7h1.2v1.2h-1.2zM1646.1 842.8h1.2v1.2h-1.2zM1421.9 666.3h1.2v1.2h-1.2zM483.4 856.9h1.2v1.2h-1.2zM314.7 767.5h1.2v1.2h-1.2zM658.0 724.7h1.2v1.2h-1.2zM587.2 772.8h1.2v1.2h-1.2zM68.9 516.9h1.2v1.2h-1.2zM210.5 967.1h1.2v1.2h-1.2zM659.3 618.4h1.2v1.2h-1.2zM1511.5 638.8h1.2v1.2h-1.2zM1343.5 770.5h1.2v1.2h-1.2zM74.2 626.3h1.2v1.2h-1.2zM1702.4 739.4h1.2v1.2h-1.2zM885.1 691.0h1.2v1.2h-1.2zM689.8 966.7h1.2v1.2h-1.2zM365.9 786.7h1.2v1.2h-1.2zM1442.6 901.9h1.2v1.2h-1.2zM412.0 881.0h1.2v1.2h-1.2zM460.3 544.7h1.2v1.2h-1.2zM857.6 952.4h1.2v1.2h-1.2zM365.6 602.1h1.2v1.2h-1.2zM1275.4 933.4h1.2v1.2h-1.2zM1565.6 529.5h1.2v1.2h-1.2zM1277.3 842.4h1.2v1.2h-1.2zM244.8 692.3h1.2v1.2h-1.2zM230.4 733.7h1.2v1.2h-1.2zM545.5 784.7h1.2v1.2h-1.2zM275.4 883.7h1.2v1.2h-1.2zM1274.1 972.2h1.2v1.2h-1.2zM154.2 967.1h1.2v1.2h-1.2zM1056.9 546.3h1.2v1.2h-1.2zM924.5 805.9h1.2v1.2h-1.2zM198.7 625.4h1.2v1.2h-1.2zM1845.1 532.2h1.2v1.2h-1.2zM611.0 813.4h1.2v1.2h-1.2zM1794.5 657.0h1.2v1.2h-1.2zM1553.3 892.3h1.2v1.2h-1.2zM559.8 972.5h1.2v1.2h-1.2zM1249.5 795.1h1.2v1.2h-1.2zM143.0 736.6h1.2v1.2h-1.2zM1807.6 966.0h1.2v1.2h-1.2zM393.8 819.5h1.2v1.2h-1.2zM875.9 601.3h1.2v1.2h-1.2zM1426.4 744.0h1.2v1.2h-1.2zM258.5 940.5h1.2v1.2h-1.2zM337.0 754.4h1.2v1.2h-1.2zM359.2 819.1h1.2v1.2h-1.2zM776.3 973.0h1.2v1.2h-1.2zM118.2 888.6h1.2v1.2h-1.2zM1612.4 959.0h1.2v1.2h-1.2zM547.2 649.9h1.2v1.2h-1.2zM1071.8 824.6h1.2v1.2h-1.2zM1784.8 704.6h1.2v1.2h-1.2zM1145.2 595.4h1.2v1.2h-1.2zM597.3 617.7h1.2v1.2h-1.2zM66.0 1007.5h1.2v1.2h-1.2zM1393.3 701.6h1.2v1.2h-1.2zM1092.7 777.5h1.2v1.2h-1.2zM745.7 767.6h1.2v1.2h-1.2zM441.4 766.0h1.2v1.2h-1.2zM1250.8 672.1h1.2v1.2h-1.2z" fill-opacity="0.25"/><path d="M476.7 79.6h1.5v1.5h-1.5zM758.4 127.2h1.5v1.5h-1.5zM1696.2 436.4h1.5v1.5h-1.5zM58.7 380.1h1.5v1.5h-1.5zM539.8 233.8h1.5v1.5h-1.5zM531.8 429.7h1.5v1.5h-1.5zM1218.4 273.5h1.5v1.5h-1.5zM992.6 368.0h1.5v1.5h-1.5zM1076.5 269.1h1.5v1.5h-1.5zM1290.3 119.3h1.5v1.5h-1.5zM613.0 258.6h1.5v1.5h-1.5zM327.7 272.8h1.5v1.5h-1.5zM70.4 269.1h1.5v1.5h-1.5zM230.6 87.8h1.5v1.5h-1.5zM1423.9 408.7h1.5v1.5h-1.5zM166.1 425.2h1.5v1.5h-1.5zM57.4 440.7h1.5v1.5h-1.5zM1245.2 420.9h1.5v1.5h-1.5zM1723.7 223.6h1.5v1.5h-1.5zM1801.6 316.5h1.5v1.5h-1.5zM689.1 347.4h1.5v1.5h-1.5zM1167.8 159.9h1.5v1.5h-1.5zM169.6 142.1h1.5v1.5h-1.5zM1505.7 455.4h1.5v1.5h-1.5zM1830.6 407.1h1.5v1.5h-1.5zM180.5 138.3h1.5v1.5h-1.5zM297.2 443.1h1.5v1.5h-1.5zM702.2 176.4h1.5v1.5h-1.5zM1667.4 140.2h1.5v1.5h-1.5zM432.1 307.3h1.5v1.5h-1.5zM1694.9 425.6h1.5v1.5h-1.5zM1837.8 341.8h1.5v1.5h-1.5zM176.0 385.3h1.5v1.5h-1.5zM1334.1 445.2h1.5v1.5h-1.5zM638.0 425.8h1.5v1.5h-1.5zM189.1 317.5h1.5v1.5h-1.5zM67.9 267.5h1.5v1.5h-1.5zM1067.5 414.5h1.5v1.5h-1.5zM1400.7 384.2h1.5v1.5h-1.5zM1666.4 387.7h1.5v1.5h-1.5zM128.9 163.9h1.5v1.5h-1.5zM366.3 307.4h1.5v1.5h-1.5zM1000.1 96.5h1.5v1.5h-1.5zM483.8 355.8h1.5v1.5h-1.5zM1796.9 93.0h1.5v1.5h-1.5zM144.3 426.9h1.5v1.5h-1.5zM407.3 284.1h1.5v1.5h-1.5zM732.2 127.0h1.5v1.5h-1.5zM409.4 357.2h1.5v1.5h-1.5zM1806.0 376.8h1.5v1.5h-1.5zM1703.6 286.0h1.5v1.5h-1.5zM771.0 106.8h1.5v1.5h-1.5zM1248.8 252.5h1.5v1.5h-1.5zM627.1 243.4h1.5v1.5h-1.5zM372.8 61.5h1.5v1.5h-1.5zM1686.5 72.3h1.5v1.5h-1.5zM818.8 56.7h1.5v1.5h-1.5zM769.1 402.8h1.5v1.5h-1.5zM360.4 349.4h1.5v1.5h-1.5zM1204.6 127.8h1.5v1.5h-1.5zM1828.3 275.5h1.5v1.5h-1.5zM653.6 396.0h1.5v1.5h-1.5zM365.6 188.2h1.5v1.5h-1.5zM778.0 208.5h1.5v1.5h-1.5zM1313.2 306.9h1.5v1.5h-1.5zM1767.8 371.1h1.5v1.5h-1.5zM1759.0 72.0h1.5v1.5h-1.5zM888.4 447.4h1.5v1.5h-1.5zM1846.0 120.1h1.5v1.5h-1.5zM189.6 231.3h1.5v1.5h-1.5zM136.6 287.6h1.5v1.5h-1.5zM1703.2 410.9h1.5v1.5h-1.5zM767.2 363.2h1.5v1.5h-1.5zM1421.9 99.4h1.5v1.5h-1.5zM489.8 68.8h1.5v1.5h-1.5zM554.8 354.1h1.5v1.5h-1.5zM992.6 439.1h1.5v1.5h-1.5zM918.7 133.5h1.5v1.5h-1.5zM310.0 327.3h1.5v1.5h-1.5zM1223.9 334.9h1.5v1.5h-1.5zM1521.1 61.6h1.5v1.5h-1.5zM1724.7 203.5h1.5v1.5h-1.5zM1159.4 455.9h1.5v1.5h-1.5zM552.9 153.8h1.5v1.5h-1.5zM1704.5 71.6h1.5v1.5h-1.5zM1166.9 185.2h1.5v1.5h-1.5zM1480.0 299.9h1.5v1.5h-1.5zM1673.7 324.8h1.5v1.5h-1.5zM1037.2 348.5h1.5v1.5h-1.5zM821.9 164.4h1.5v1.5h-1.5zM167.0 345.0h1.5v1.5h-1.5zM1426.9 334.0h1.5v1.5h-1.5zM935.6 231.5h1.5v1.5h-1.5zM1630.0 288.5h1.5v1.5h-1.5zM443.1 293.3h1.5v1.5h-1.5zM698.3 299.9h1.5v1.5h-1.5zM885.3 366.8h1.5v1.5h-1.5zM1023.2 419.7h1.5v1.5h-1.5zM1050.7 158.6h1.5v1.5h-1.5zM1733.1 94.7h1.5v1.5h-1.5zM932.4 111.5h1.5v1.5h-1.5zM636.3 210.8h1.5v1.5h-1.5zM1695.7 246.3h1.5v1.5h-1.5zM471.1 256.6h1.5v1.5h-1.5zM241.5 268.7h1.5v1.5h-1.5zM342.9 233.3h1.5v1.5h-1.5zM718.7 212.2h1.5v1.5h-1.5zM545.0 404.3h1.5v1.5h-1.5zM1193.7 118.6h1.5v1.5h-1.5zM1001.4 188.3h1.5v1.5h-1.5zM144.7 192.1h1.5v1.5h-1.5zM762.4 134.3h1.5v1.5h-1.5zM236.0 87.5h1.5v1.5h-1.5zM951.6 201.4h1.5v1.5h-1.5zM250.3 204.0h1.5v1.5h-1.5zM1359.4 79.7h1.5v1.5h-1.5zM1131.0 63.0h1.5v1.5h-1.5zM1251.1 221.5h1.5v1.5h-1.5zM981.5 271.7h1.5v1.5h-1.5zM287.5 265.3h1.5v1.5h-1.5zM1327.1 408.2h1.5v1.5h-1.5zM1373.4 382.1h1.5v1.5h-1.5zM246.5 79.0h1.5v1.5h-1.5zM1756.7 228.8h1.5v1.5h-1.5zM845.7 349.5h1.5v1.5h-1.5zM452.0 317.3h1.5v1.5h-1.5zM961.2 347.1h1.5v1.5h-1.5zM1238.3 405.9h1.5v1.5h-1.5zM1241.5 106.2h1.5v1.5h-1.5zM754.0 184.1h1.5v1.5h-1.5zM1310.4 304.1h1.5v1.5h-1.5zM443.3 267.0h1.5v1.5h-1.5zM589.1 205.8h1.5v1.5h-1.5zM1155.8 116.8h1.5v1.5h-1.5zM1069.6 118.8h1.5v1.5h-1.5zM508.4 97.9h1.5v1.5h-1.5zM243.6 90.3h1.5v1.5h-1.5zM1753.7 371.4h1.5v1.5h-1.5zM195.8 65.5h1.5v1.5h-1.5zM1053.0 146.7h1.5v1.5h-1.5zM909.8 230.7h1.5v1.5h-1.5zM135.2 395.7h1.5v1.5h-1.5zM101.3 139.6h1.5v1.5h-1.5zM847.1 209.5h1.5v1.5h-1.5zM226.1 188.5h1.5v1.5h-1.5zM1438.5 53.7h1.5v1.5h-1.5zM1236.0 321.5h1.5v1.5h-1.5zM472.1 383.0h1.5v1.5h-1.5zM1037.2 329.6h1.5v1.5h-1.5zM883.0 436.6h1.5v1.5h-1.5zM1245.8 307.0h1.5v1.5h-1.5zM669.6 315.5h1.5v1.5h-1.5zM327.2 150.7h1.5v1.5h-1.5zM182.1 201.6h1.5v1.5h-1.5zM903.5 236.8h1.5v1.5h-1.5zM1221.0 427.0h1.5v1.5h-1.5zM1334.9 230.5h1.5v1.5h-1.5zM887.6 347.3h1.5v1.5h-1.5zM1763.1 248.0h1.5v1.5h-1.5zM1414.4 233.1h1.5v1.5h-1.5zM913.8 453.1h1.5v1.5h-1.5zM1259.6 352.5h1.5v1.5h-1.5zM688.3 341.8h1.5v1.5h-1.5zM1700.5 421.5h1.5v1.5h-1.5zM1710.5 289.8h1.5v1.5h-1.5zM1163.5 264.7h1.5v1.5h-1.5zM297.4 289.3h1.5v1.5h-1.5zM472.1 76.9h1.5v1.5h-1.5zM1339.4 325.4h1.5v1.5h-1.5zM946.3 391.9h1.5v1.5h-1.5zM889.0 169.7h1.5v1.5h-1.5zM1802.3 148.1h1.5v1.5h-1.5zM1788.3 369.4h1.5v1.5h-1.5zM352.0 333.5h1.5v1.5h-1.5zM308.4 255.3h1.5v1.5h-1.5zM132.2 267.3h1.5v1.5h-1.5zM346.7 128.4h1.5v1.5h-1.5zM831.2 140.9h1.5v1.5h-1.5zM1163.1 188.8h1.5v1.5h-1.5zM207.4 358.8h1.5v1.5h-1.5zM378.5 393.8h1.5v1.5h-1.5zM449.8 100.3h1.5v1.5h-1.5zM530.6 277.2h1.5v1.5h-1.5zM635.1 302.3h1.5v1.5h-1.5zM257.0 429.4h1.5v1.5h-1.5zM1408.5 295.0h1.5v1.5h-1.5zM1112.3 100.1h1.5v1.5h-1.5zM879.6 404.2h1.5v1.5h-1.5zM447.1 129.4h1.5v1.5h-1.5zM961.4 356.1h1.5v1.5h-1.5zM444.0 190.6h1.5v1.5h-1.5zM666.3 245.1h1.5v1.5h-1.5zM242.6 136.8h1.5v1.5h-1.5zM1598.0 381.8h1.5v1.5h-1.5zM1446.0 89.0h1.5v1.5h-1.5zM511.6 373.5h1.5v1.5h-1.5zM333.6 299.7h1.5v1.5h-1.5zM1006.8 449.3h1.5v1.5h-1.5zM612.7 347.3h1.5v1.5h-1.5zM1203.0 445.9h1.5v1.5h-1.5zM1571.6 330.3h1.5v1.5h-1.5zM1738.0 339.0h1.5v1.5h-1.5zM1534.1 243.8h1.5v1.5h-1.5zM1395.1 95.1h1.5v1.5h-1.5zM915.8 179.7h1.5v1.5h-1.5zM1402.9 228.5h1.5v1.5h-1.5zM674.4 449.0h1.5v1.5h-1.5zM497.6 255.0h1.5v1.5h-1.5zM1761.4 398.5h1.5v1.5h-1.5zM1574.3 247.8h1.5v1.5h-1.5zM1535.5 98.3h1.5v1.5h-1.5zM278.6 216.4h1.5v1.5h-1.5zM417.0 279.3h1.5v1.5h-1.5zM334.7 445.0h1.5v1.5h-1.5zM543.4 130.2h1.5v1.5h-1.5zM1003.2 96.8h1.5v1.5h-1.5zM1294.2 443.4h1.5v1.5h-1.5zM569.5 350.5h1.5v1.5h-1.5zM148.4 107.1h1.5v1.5h-1.5zM519.2 439.5h1.5v1.5h-1.5zM740.4 174.3h1.5v1.5h-1.5zM1714.9 453.7h1.5v1.5h-1.5zM704.5 398.1h1.5v1.5h-1.5zM1255.1 53.0h1.5v1.5h-1.5zM689.7 245.2h1.5v1.5h-1.5zM871.2 271.1h1.5v1.5h-1.5z" fill-opacity="0.75"/><path d="M836.5 980.5h1.5v1.5h-1.5zM146.8 930.1h1.5v1.5h-1.5zM694.5 1034.3h1.5v1.5h-1.5zM1470.7 1003.8h1.5v1.5h-1.5zM455.4 820.7h1.5v1.5h-1.5zM113.4 832.1h1.5v1.5h-1.5zM954.5 887.0h1.5v1.5h-1.5zM1736.6 847.8h1.5v1.5h-1.5zM244.6 1036.3h1.5v1.5h-1.5zM299.0 873.3h1.5v1.5h-1.5zM1482.0 837.3h1.5v1.5h-1.5zM508.3 1010.2h1.5v1.5h-1.5zM1835.1 932.8h1.5v1.5h-1.5zM1411.8 879.9h1.5v1.5h-1.5zM1353.0 1044.5h1.5v1.5h-1.5zM162.3 1056.9h1.5v1.5h-1.5zM440.1 874.3h1.5v1.5h-1.5zM605.4 1044.7h1.5v1.5h-1.5zM1231.0 914.6h1.5v1.5h-1.5zM1119.7 838.9h1.5v1.5h-1.5zM690.1 895.4h1.5v1.5h-1.5zM1335.5 817.4h1.5v1.5h-1.5zM1414.0 980.8h1.5v1.5h-1.5zM800.4 830.2h1.5v1.5h-1.5zM1228.7 945.4h1.5v1.5h-1.5zM1487.8 994.5h1.5v1.5h-1.5zM807.8 955.8h1.5v1.5h-1.5zM239.8 921.5h1.5v1.5h-1.5zM1223.3 1029.6h1.5v1.5h-1.5zM1078.8 980.4h1.5v1.5h-1.5zM154.5 961.0h1.5v1.5h-1.5zM101.8 820.9h1.5v1.5h-1.5zM1279.7 994.8h1.5v1.5h-1.5zM1113.3 868.6h1.5v1.5h-1.5zM1443.0 816.4h1.5v1.5h-1.5zM1211.9 829.2h1.5v1.5h-1.5zM588.6 903.2h1.5v1.5h-1.5zM582.6 813.6h1.5v1.5h-1.5zM243.0 984.5h1.5v1.5h-1.5zM603.4 1030.0h1.5v1.5h-1.5zM1233.1 814.1h1.5v1.5h-1.5zM384.8 1009.5h1.5v1.5h-1.5zM1291.6 871.9h1.5v1.5h-1.5zM732.0 959.7h1.5v1.5h-1.5zM943.7 895.5h1.5v1.5h-1.5zM276.7 912.1h1.5v1.5h-1.5zM870.7 960.6h1.5v1.5h-1.5zM799.7 818.6h1.5v1.5h-1.5zM345.5 962.7h1.5v1.5h-1.5zM690.1 1069.3h1.5v1.5h-1.5zM512.5 945.1h1.5v1.5h-1.5zM222.1 917.2h1.5v1.5h-1.5zM661.1 879.4h1.5v1.5h-1.5zM1473.9 973.0h1.5v1.5h-1.5zM299.8 882.3h1.5v1.5h-1.5zM1562.4 987.3h1.5v1.5h-1.5zM1141.6 857.8h1.5v1.5h-1.5zM1433.5 823.4h1.5v1.5h-1.5zM1830.9 906.0h1.5v1.5h-1.5zM249.4 845.9h1.5v1.5h-1.5zM140.3 893.9h1.5v1.5h-1.5zM820.1 982.5h1.5v1.5h-1.5zM828.7 869.2h1.5v1.5h-1.5zM929.0 939.3h1.5v1.5h-1.5zM61.2 860.2h1.5v1.5h-1.5zM959.2 933.9h1.5v1.5h-1.5zM1824.8 964.3h1.5v1.5h-1.5zM936.7 952.5h1.5v1.5h-1.5zM767.8 1046.8h1.5v1.5h-1.5zM635.1 848.1h1.5v1.5h-1.5zM576.6 916.8h1.5v1.5h-1.5zM1024.7 858.9h1.5v1.5h-1.5zM1365.8 1001.2h1.5v1.5h-1.5zM355.9 931.0h1.5v1.5h-1.5zM186.4 974.4h1.5v1.5h-1.5zM192.3 867.0h1.5v1.5h-1.5zM1544.9 888.5h1.5v1.5h-1.5zM695.4 861.1h1.5v1.5h-1.5zM917.9 1032.8h1.5v1.5h-1.5zM831.9 948.6h1.5v1.5h-1.5zM1480.0 867.5h1.5v1.5h-1.5zM1347.8 830.6h1.5v1.5h-1.5zM1170.5 1024.3h1.5v1.5h-1.5zM685.7 896.1h1.5v1.5h-1.5zM706.7 872.5h1.5v1.5h-1.5zM1688.1 994.1h1.5v1.5h-1.5zM1155.7 908.4h1.5v1.5h-1.5zM417.9 857.8h1.5v1.5h-1.5zM1344.6 833.5h1.5v1.5h-1.5zM800.6 1032.9h1.5v1.5h-1.5zM1433.6 849.2h1.5v1.5h-1.5zM521.5 926.6h1.5v1.5h-1.5zM1531.1 904.8h1.5v1.5h-1.5zM906.6 854.8h1.5v1.5h-1.5zM375.0 974.0h1.5v1.5h-1.5zM447.1 1073.8h1.5v1.5h-1.5zM1510.2 918.6h1.5v1.5h-1.5z" fill-opacity="0.25"/><path d="M542.0 1152.4h2v2h-2zM1797.3 937.0h2v2h-2zM818.8 939.8h2v2h-2zM213.8 968.9h2v2h-2zM506.0 1056.6h2v2h-2zM255.1 943.4h2v2h-2zM1059.6 930.0h2v2h-2zM517.0 1054.4h2v2h-2zM993.4 944.4h2v2h-2zM761.5 936.6h2v2h-2zM527.5 928.4h2v2h-2zM144.1 1008.3h2v2h-2zM513.2 949.2h2v2h-2zM1572.4 932.9h2v2h-2zM1085.2 1040.9h2v2h-2zM1741.7 1079.0h2v2h-2zM1242.3 1050.0h2v2h-2zM838.1 942.0h2v2h-2zM256.6 1083.1h2v2h-2zM89.4 1008.2h2v2h-2zM922.9 1057.5h2v2h-2zM286.7 963.5h2v2h-2zM505.8 1010.2h2v2h-2zM696.5 1080.2h2v2h-2zM782.8 979.8h2v2h-2zM286.4 1047.3h2v2h-2zM1803.9 1021.4h2v2h-2zM999.8 1057.4h2v2h-2zM825.6 947.8h2v2h-2zM919.4 1002.8h2v2h-2zM1687.5 991.8h2v2h-2zM1065.6 1015.3h2v2h-2zM1651.5 1129.3h2v2h-2zM999.0 1056.3h2v2h-2z" fill-opacity="0.25"/><path d="M561.7 123.9h2v2h-2zM848.7 257.5h2v2h-2zM424.4 332.4h2v2h-2zM1557.1 138.9h2v2h-2zM173.3 80.9h2v2h-2zM921.3 77.5h2v2h-2zM1714.6 189.6h2v2h-2zM1161.0 162.3h2v2h-2zM372.4 272.1h2v2h-2zM966.8 63.1h2v2h-2zM707.1 153.6h2v2h-2zM1057.8 241.8h2v2h-2zM190.3 136.6h2v2h-2zM482.8 290.5h2v2h-2zM547.3 237.3h2v2h-2zM906.8 334.9h2v2h-2zM1127.9 182.0h2v2h-2zM1675.0 155.3h2v2h-2zM626.5 115.5h2v2h-2zM1663.0 262.8h2v2h-2zM1183.9 258.4h2v2h-2zM553.6 324.3h2v2h-2zM195.9 362.2h2v2h-2zM1762.2 238.9h2v2h-2zM838.3 337.6h2v2h-2zM1104.7 144.1h2v2h-2zM734.6 138.2h2v2h-2zM707.6 362.9h2v2h-2zM130.8 117.4h2v2h-2zM1381.8 280.4h2v2h-2zM1763.6 273.0h2v2h-2zM1066.7 172.6h2v2h-2zM57.4 216.5h2v2h-2zM167.5 174.5h2v2h-2zM920.1 302.5h2v2h-2zM1621.4 223.6h2v2h-2zM95.7 169.9h2v2h-2zM39.2 121.3h2v2h-2zM666.3 62.6h2v2h-2zM1016.6 133.1h2v2h-2zM298.0 274.0h2v2h-2zM1068.0 372.5h2v2h-2zM333.1 237.9h2v2h-2zM840.2 139.8h2v2h-2zM911.8 368.3h2v2h-2zM1222.0 296.6h2v2h-2zM1826.6 197.4h2v2h-2zM141.7 83.9h2v2h-2zM620.2 333.6h2v2h-2zM467.8 367.5h2v2h-2zM1347.0 103.2h2v2h-2zM194.7 97.8h2v2h-2zM646.4 56.3h2v2h-2zM1295.1 256.4h2v2h-2zM788.1 249.2h2v2h-2zM424.4 58.6h2v2h-2zM645.4 205.6h2v2h-2zM609.5 157.6h2v2h-2zM1413.5 296.5h2v2h-2zM255.3 131.9h2v2h-2zM1060.7 355.9h2v2h-2zM1030.4 149.2h2v2h-2zM163.7 342.4h2v2h-2zM1834.5 268.4h2v2h-2zM167.2 318.3h2v2h-2zM1592.9 103.8h2v2h-2zM50.8 295.1h2v2h-2zM202.5 278.3h2v2h-2zM1264.2 69.0h2v2h-2zM671.1 361.6h2v2h-2zM1707.7 326.8h2v2h-2zM1475.2 113.3h2v2h-2zM1137.2 367.1h2v2h-2zM476.3 157.0h2v2h-2zM686.9 229.5h2v2h-2zM393.1 338.0h2v2h-2zM1461.6 321.3h2v2h-2zM965.5 209.1h2v2h-2zM544.4 67.3h2v2h-2zM1275.7 243.9h2v2h-2zM763.1 149.6h2v2h-2zM715.9 76.7h2v2h-2zM570.7 171.1h2v2h-2zM906.1 363.4h2v2h-2zM1126.0 175.8h2v2h-2zM102.4 224.3h2v2h-2zM618.9 107.3h2v2h-2zM1311.3 104.1h2v2h-2zM1091.1 141.7h2v2h-2zM515.8 246.8h2v2h-2zM1025.4 238.0h2v2h-2zM1638.5 190.1h2v2h-2zM432.2 69.2h2v2h-2zM821.0 374.3h2v2h-2zM1485.4 371.1h2v2h-2zM1594.1 311.9h2v2h-2zM1096.3 339.7h2v2h-2zM973.6 170.9h2v2h-2zM231.7 312.6h2v2h-2zM1838.2 326.6h2v2h-2zM1846.3 147.7h2v2h-2zM1550.6 60.7h2v2h-2zM329.5 206.7h2v2h-2zM1230.4 328.7h2v2h-2zM917.5 242.5h2v2h-2zM574.6 212.6h2v2h-2zM1707.3 256.3h2v2h-2zM358.7 204.8h2v2h-2zM215.8 123.5h2v2h-2zM1182.3 288.6h2v2h-2zM1340.9 346.7h2v2h-2zM83.0 279.0h2v2h-2zM453.7 88.5h2v2h-2zM578.4 346.1h2v2h-2zM1458.7 289.6h2v2h-2zM844.1 373.1h2v2h-2zM530.0 299.1h2v2h-2zM1796.0 170.3h2v2h-2z" fill-opacity="1"/><path d="M763.2 984.6h2.6v2.6h-2.6zM1069.2 1064.4h2.6v2.6h-2.6zM1498.0 970.4h2.6v2.6h-2.6zM461.9 977.5h2.6v2.6h-2.6zM1309.9 1086.9h2.6v2.6h-2.6zM1266.6 1024.4h2.6v2.6h-2.6zM1847.9 976.4h2.6v2.6h-2.6zM447.8 1110.7h2.6v2.6h-2.6zM320.4 1118.3h2.6v2.6h-2.6zM1780.5 1019.9h2.6v2.6h-2.6zM604.8 950.5h2.6v2.6h-2.6zM127.6 1033.0h2.6v2.6h-2.6z" fill-opacity="0.25"/><path d="M1686.7 566.5h3.4v3.4h-3.4zM1789.8 675.2h3.4v3.4h-3.4zM1447.0 633.9h3.4v3.4h-3.4zM596.4 541.1h3.4v3.4h-3.4zM312.6 565.1h3.4v3.4h-3.4zM91.1 678.5h3.4v3.4h-3.4zM437.6 487.1h3.4v3.4h-3.4zM1070.1 721.0h3.4v3.4h-3.4zM1366.1 694.6h3.4v3.4h-3.4zM249.5 607.6h3.4v3.4h-3.4zM854.4 577.1h3.4v3.4h-3.4zM1371.4 521.8h3.4v3.4h-3.4zM115.4 705.0h3.4v3.4h-3.4z" fill-opacity="0.75"/><path d="M419.8 483.3h2v2h-2zM1190.8 580.8h2v2h-2zM1233.9 536.1h2v2h-2zM284.8 596.6h2v2h-2zM1195.6 625.8h2v2h-2zM1194.9 633.3h2v2h-2zM366.5 549.4h2v2h-2zM1514.1 495.9h2v2h-2zM154.1 652.4h2v2h-2zM602.9 654.0h2v2h-2zM363.9 492.1h2v2h-2zM1608.1 513.3h2v2h-2zM876.2 481.8h2v2h-2zM772.4 474.6h2v2h-2zM498.1 608.8h2v2h-2zM173.3 444.1h2v2h-2zM1375.2 393.1h2v2h-2zM1830.8 491.9h2v2h-2zM367.2 477.0h2v2h-2zM1729.8 475.9h2v2h-2zM800.2 424.8h2v2h-2zM1250.6 427.4h2v2h-2zM297.0 483.7h2v2h-2zM1049.3 555.5h2v2h-2zM939.7 618.5h2v2h-2zM632.7 398.0h2v2h-2zM1453.9 534.5h2v2h-2zM251.8 400.8h2v2h-2zM789.7 640.8h2v2h-2zM223.4 386.0h2v2h-2zM1735.2 448.2h2v2h-2zM1829.7 389.0h2v2h-2zM1354.9 400.1h2v2h-2zM606.4 536.0h2v2h-2zM835.4 524.2h2v2h-2zM970.8 389.6h2v2h-2zM381.4 564.8h2v2h-2zM384.9 542.3h2v2h-2zM572.7 454.0h2v2h-2zM1208.1 570.5h2v2h-2zM380.4 395.8h2v2h-2zM681.4 569.1h2v2h-2zM1087.2 628.5h2v2h-2zM1370.6 386.5h2v2h-2zM1361.9 587.1h2v2h-2zM63.8 380.5h2v2h-2zM1648.6 433.6h2v2h-2zM1761.5 393.9h2v2h-2zM480.3 482.1h2v2h-2zM183.2 508.9h2v2h-2zM261.8 533.6h2v2h-2zM1161.5 571.0h2v2h-2zM356.9 595.2h2v2h-2zM1747.5 526.5h2v2h-2zM1750.0 547.9h2v2h-2zM1755.9 578.3h2v2h-2zM87.1 628.6h2v2h-2zM85.3 627.7h2v2h-2zM174.0 450.7h2v2h-2zM1814.0 467.7h2v2h-2zM1643.1 600.0h2v2h-2zM386.3 512.5h2v2h-2zM1775.5 440.5h2v2h-2zM105.4 644.0h2v2h-2zM84.1 542.2h2v2h-2zM1619.1 634.1h2v2h-2zM1558.5 593.5h2v2h-2zM722.5 474.7h2v2h-2zM766.8 622.2h2v2h-2zM836.8 456.8h2v2h-2zM278.5 647.5h2v2h-2zM1749.0 594.4h2v2h-2zM1555.8 595.2h2v2h-2zM1034.6 527.1h2v2h-2zM1377.8 438.4h2v2h-2zM1389.9 562.5h2v2h-2zM1469.0 451.0h2v2h-2zM1606.8 498.6h2v2h-2zM1298.6 602.4h2v2h-2zM635.1 454.3h2v2h-2zM689.4 577.7h2v2h-2zM1053.6 596.2h2v2h-2zM1828.9 561.0h2v2h-2zM935.7 454.2h2v2h-2zM1172.4 412.1h2v2h-2zM432.0 637.8h2v2h-2z" fill-opacity="0.75"/><path d="M1200.3 156.6h3.4v3.4h-3.4zM175.9 83.3h3.4v3.4h-3.4zM1246.3 166.6h3.4v3.4h-3.4zM1102.4 395.3h3.4v3.4h-3.4zM632.0 350.5h3.4v3.4h-3.4zM800.1 437.4h3.4v3.4h-3.4zM781.2 218.6h3.4v3.4h-3.4zM1091.3 48.6h3.4v3.4h-3.4zM1593.7 51.9h3.4v3.4h-3.4zM1495.0 308.3h3.4v3.4h-3.4zM1841.4 415.0h3.4v3.4h-3.4zM1635.6 92.6h3.4v3.4h-3.4zM418.7 275.7h3.4v3.4h-3.4z" fill-opacity="1"/><path d="M1760.0 1024.7h1.2v1.2h-1.2zM788.2 1107.6h1.2v1.2h-1.2zM1813.7 1061.9h1.2v1.2h-1.2zM762.5 1082.9h1.2v1.2h-1.2zM128.5 1097.2h1.2v1.2h-1.2zM376.1 1041.2h1.2v1.2h-1.2zM1246.3 1105.7h1.2v1.2h-1.2zM757.3 1081.5h1.2v1.2h-1.2zM1796.8 1129.3h1.2v1.2h-1.2zM1596.2 1093.9h1.2v1.2h-1.2zM1269.9 1137.3h1.2v1.2h-1.2zM261.9 1015.3h1.2v1.2h-1.2zM637.4 1074.6h1.2v1.2h-1.2zM1834.8 1063.3h1.2v1.2h-1.2zM890.2 1045.2h1.2v1.2h-1.2zM1350.2 1048.4h1.2v1.2h-1.2zM809.9 1091.4h1.2v1.2h-1.2zM1151.9 1057.6h1.2v1.2h-1.2zM1108.9 1056.0h1.2v1.2h-1.2zM1231.7 1068.6h1.2v1.2h-1.2zM530.5 1040.5h1.2v1.2h-1.2zM992.0 1065.1h1.2v1.2h-1.2zM1759.7 1138.7h1.2v1.2h-1.2zM795.3 1052.3h1.2v1.2h-1.2zM233.2 1020.1h1.2v1.2h-1.2zM361.9 1087.2h1.2v1.2h-1.2zM816.9 1046.0h1.2v1.2h-1.2zM672.7 1081.5h1.2v1.2h-1.2z" fill-opacity="0"/><path d="M225.9 88.6h2.6v2.6h-2.6zM1150.8 356.5h2.6v2.6h-2.6zM101.3 65.5h2.6v2.6h-2.6zM404.8 233.8h2.6v2.6h-2.6zM1168.4 303.1h2.6v2.6h-2.6zM807.7 369.6h2.6v2.6h-2.6zM1363.1 411.0h2.6v2.6h-2.6zM1300.8 410.8h2.6v2.6h-2.6zM1801.8 196.1h2.6v2.6h-2.6zM411.9 373.2h2.6v2.6h-2.6zM692.0 216.0h2.6v2.6h-2.6zM1824.2 157.5h2.6v2.6h-2.6zM679.2 355.3h2.6v2.6h-2.6zM252.2 389.6h2.6v2.6h-2.6zM1758.9 168.0h2.6v2.6h-2.6zM1228.4 125.3h2.6v2.6h-2.6zM727.0 117.9h2.6v2.6h-2.6zM1693.3 304.5h2.6v2.6h-2.6zM1095.2 220.5h2.6v2.6h-2.6zM1418.2 416.0h2.6v2.6h-2.6zM472.5 355.0h2.6v2.6h-2.6zM1134.0 102.2h2.6v2.6h-2.6zM1203.3 127.2h2.6v2.6h-2.6zM123.2 223.6h2.6v2.6h-2.6zM1196.5 120.9h2.6v2.6h-2.6zM161.7 376.5h2.6v2.6h-2.6zM1569.1 316.4h2.6v2.6h-2.6zM530.1 389.6h2.6v2.6h-2.6zM350.0 400.7h2.6v2.6h-2.6zM804.8 437.1h2.6v2.6h-2.6zM1175.5 151.1h2.6v2.6h-2.6zM1775.4 208.0h2.6v2.6h-2.6zM910.5 302.6h2.6v2.6h-2.6zM106.7 276.2h2.6v2.6h-2.6zM1396.9 133.6h2.6v2.6h-2.6zM924.1 162.4h2.6v2.6h-2.6zM1010.7 419.1h2.6v2.6h-2.6zM1613.9 53.1h2.6v2.6h-2.6zM1571.8 400.8h2.6v2.6h-2.6zM1041.8 343.9h2.6v2.6h-2.6zM1633.7 118.0h2.6v2.6h-2.6zM1271.4 306.0h2.6v2.6h-2.6zM1086.1 317.7h2.6v2.6h-2.6zM1000.7 406.2h2.6v2.6h-2.6zM1122.6 360.0h2.6v2.6h-2.6zM1240.9 151.0h2.6v2.6h-2.6zM231.9 402.1h2.6v2.6h-2.6zM754.3 57.2h2.6v2.6h-2.6zM845.1 182.0h2.6v2.6h-2.6zM1347.4 414.7h2.6v2.6h-2.6zM1273.7 435.8h2.6v2.6h-2.6zM120.1 314.1h2.6v2.6h-2.6zM1235.2 58.5h2.6v2.6h-2.6z" fill-opacity="1"/><path d="M451.9 666.3h2v2h-2zM1373.6 826.4h2v2h-2zM1179.5 772.4h2v2h-2zM981.0 727.4h2v2h-2zM720.8 676.8h2v2h-2zM836.9 656.3h2v2h-2zM973.9 848.4h2v2h-2zM62.0 823.4h2v2h-2zM1490.7 827.5h2v2h-2zM1632.3 816.5h2v2h-2zM1789.1 768.2h2v2h-2zM1535.1 785.4h2v2h-2zM965.0 763.8h2v2h-2zM595.5 790.4h2v2h-2zM729.5 702.4h2v2h-2zM836.1 903.3h2v2h-2zM1604.3 701.0h2v2h-2zM1180.3 673.6h2v2h-2zM747.7 731.1h2v2h-2zM422.7 729.4h2v2h-2zM1508.0 856.5h2v2h-2zM741.1 909.5h2v2h-2zM1760.9 894.1h2v2h-2zM1424.0 691.9h2v2h-2zM1089.1 885.9h2v2h-2zM1354.3 793.6h2v2h-2zM1699.8 805.8h2v2h-2zM822.6 806.4h2v2h-2zM765.4 790.3h2v2h-2zM1107.7 835.7h2v2h-2zM1822.3 711.5h2v2h-2zM758.1 659.1h2v2h-2zM1160.8 873.1h2v2h-2zM568.6 878.0h2v2h-2zM1813.3 867.2h2v2h-2zM1665.1 686.0h2v2h-2zM1254.2 853.9h2v2h-2zM1042.0 691.5h2v2h-2zM1433.1 720.7h2v2h-2zM1286.5 677.9h2v2h-2zM1212.8 844.5h2v2h-2zM286.4 700.7h2v2h-2zM1746.0 706.0h2v2h-2zM894.4 874.2h2v2h-2zM172.6 857.5h2v2h-2zM1151.2 754.1h2v2h-2zM274.3 875.4h2v2h-2zM1154.7 654.7h2v2h-2zM1340.0 729.0h2v2h-2zM1793.2 764.8h2v2h-2zM1286.0 695.9h2v2h-2zM1013.2 825.3h2v2h-2zM1407.7 897.4h2v2h-2zM1419.2 742.7h2v2h-2zM1840.0 722.2h2v2h-2zM164.4 857.9h2v2h-2zM1115.0 862.5h2v2h-2zM203.4 907.9h2v2h-2zM678.3 880.9h2v2h-2zM1353.1 814.1h2v2h-2zM1840.2 838.1h2v2h-2zM721.0 663.3h2v2h-2zM1764.6 746.4h2v2h-2zM1453.8 787.7h2v2h-2zM92.3 830.1h2v2h-2zM546.1 673.3h2v2h-2zM1199.6 763.0h2v2h-2zM72.3 713.2h2v2h-2zM53.7 845.2h2v2h-2zM1568.9 716.0h2v2h-2zM1053.5 655.7h2v2h-2zM1152.7 834.3h2v2h-2zM1245.7 886.5h2v2h-2zM1294.6 855.1h2v2h-2z" fill-opacity="0.5"/><path d="M1027.2 863.0h2.6v2.6h-2.6zM1575.6 834.4h2.6v2.6h-2.6zM859.5 739.4h2.6v2.6h-2.6zM1010.7 922.7h2.6v2.6h-2.6zM282.1 817.5h2.6v2.6h-2.6zM1148.0 725.7h2.6v2.6h-2.6zM598.3 889.3h2.6v2.6h-2.6zM659.5 923.8h2.6v2.6h-2.6zM1211.6 806.8h2.6v2.6h-2.6zM1762.8 732.6h2.6v2.6h-2.6zM1043.5 756.8h2.6v2.6h-2.6zM574.5 848.6h2.6v2.6h-2.6zM626.2 851.5h2.6v2.6h-2.6zM1074.8 793.7h2.6v2.6h-2.6zM791.0 816.7h2.6v2.6h-2.6zM181.2 777.2h2.6v2.6h-2.6zM1192.4 919.9h2.6v2.6h-2.6zM1172.7 865.9h2.6v2.6h-2.6zM186.6 755.6h2.6v2.6h-2.6zM1765.6 748.9h2.6v2.6h-2.6zM1024.3 770.9h2.6v2.6h-2.6zM1225.3 744.1h2.6v2.6h-2.6zM307.3 765.5h2.6v2.6h-2.6zM1229.5 928.3h2.6v2.6h-2.6zM952.1 745.3h2.6v2.6h-2.6zM412.2 881.0h2.6v2.6h-2.6zM1003.2 922.3h2.6v2.6h-2.6zM1299.0 807.8h2.6v2.6h-2.6zM1379.4 933.9h2.6v2.6h-2.6zM1728.1 742.4h2.6v2.6h-2.6zM1510.3 872.1h2.6v2.6h-2.6zM841.4 939.0h2.6v2.6h-2.6zM1226.4 869.2h2.6v2.6h-2.6z" fill-opacity="0.5"/><path d="M182.6 754.4h3.4v3.4h-3.4zM302.2 867.3h3.4v3.4h-3.4zM555.6 856.2h3.4v3.4h-3.4zM1540.0 929.9h3.4v3.4h-3.4zM1295.3 886.0h3.4v3.4h-3.4zM1542.4 738.1h3.4v3.4h-3.4zM803.7 934.8h3.4v3.4h-3.4zM1783.1 878.8h3.4v3.4h-3.4zM940.4 881.6h3.4v3.4h-3.4zM1473.9 864.0h3.4v3.4h-3.4zM950.9 893.6h3.4v3.4h-3.4zM1317.9 765.0h3.4v3.4h-3.4z" fill-opacity="0.5"/><path d="M423.8 1043.4h3.4v3.4h-3.4zM539.4 1086.5h3.4v3.4h-3.4zM427.2 970.4h3.4v3.4h-3.4zM1112.6 991.0h3.4v3.4h-3.4zM171.9 1082.7h3.4v3.4h-3.4zM1366.5 1084.0h3.4v3.4h-3.4zM839.9 969.2h3.4v3.4h-3.4zM524.7 1019.9h3.4v3.4h-3.4z" fill-opacity="0.25"/><path d="M364.5 1140.8h1.5v1.5h-1.5zM1082.3 1091.4h1.5v1.5h-1.5zM78.7 1082.4h1.5v1.5h-1.5zM229.6 1103.9h1.5v1.5h-1.5zM223.8 1118.5h1.5v1.5h-1.5zM1585.5 1122.4h1.5v1.5h-1.5zM1467.4 1091.1h1.5v1.5h-1.5zM681.8 1130.2h1.5v1.5h-1.5zM728.7 1126.3h1.5v1.5h-1.5zM1684.8 1102.4h1.5v1.5h-1.5zM506.9 1151.1h1.5v1.5h-1.5z" fill-opacity="0"/></svg>
<svg class="ico" style="left:1731px;top:52px" width="24" height="24" viewBox="0 0 24 24"><path d="M3 2H21L23 18V24H1V18Z" fill="#d8d8d8"/><path d="M3 2H21L23 17H1Z" fill="#f39a12"/><rect x="1" y="19" width="22" height="2" fill="#aaa"/></svg>
<div class="a" style="left:1693px;top:81.5px;font-size:11px;font-weight:bold;color:#fff;text-align:center;width:100px;line-height:13px;text-shadow:0 1px 2px rgba(0,0,0,.9);font-size:11px;line-height:13px">500GBwork</div>
<div class="a" style="left:1693px;top:94.5px;font-size:11px;font-weight:bold;color:#fff;text-align:center;width:100px;line-height:13px;text-shadow:0 1px 2px rgba(0,0,0,.9);font-size:11px;line-height:13px">10</div>
<svg class="ico" style="left:1801px;top:56px" width="24" height="24" viewBox="0 0 24 24"><path d="M4 2H20L23 20V23H1V20Z" fill="#b8bcc0"/><path d="M4 2H20L22 16H2Z" fill="#9ca0a4"/><rect x="5" y="4" width="14" height="2" fill="#333"/><ellipse cx="12" cy="11" rx="5" ry="4" fill="#a8acb0"/><rect x="1" y="20" width="22" height="3" fill="#777"/></svg>
<div class="a" style="left:1763px;top:85.5px;font-size:11px;font-weight:bold;color:#fff;text-align:center;width:100px;line-height:13px;text-shadow:0 1px 2px rgba(0,0,0,.9);font-size:11px;line-height:13px">Macintosh</div>
<div class="a" style="left:1763px;top:98.5px;font-size:11px;font-weight:bold;color:#fff;text-align:center;width:100px;line-height:13px;text-shadow:0 1px 2px rgba(0,0,0,.9);font-size:11px;line-height:13px">HD</div>
<svg class="ico" style="left:1802px;top:121px" width="24" height="24" viewBox="0 0 24 24"><path d="M2 1H15L21 7V24H2Z" fill="#c8c8c8"/><path d="M15 1V7H21" fill="#9a9a9a"/><path d="M11.5 6L17 9V15L11.5 18L6 15V9Z" fill="#888" stroke="#eee" stroke-width="0.8"/><text x="9.5" y="15" font-size="7" font-weight="bold" font-family="Liberation Sans" fill="#eee">J</text><rect x="3" y="19" width="17" height="4" fill="#777"/></svg>
<div class="a" style="left:1764px;top:150.5px;font-size:11px;font-weight:bold;color:#fff;text-align:center;width:100px;line-height:13px;text-shadow:0 1px 2px rgba(0,0,0,.9);font-size:11px;line-height:13px">schedule</div>
<svg class="ico" style="left:1801px;top:179px" width="26" height="24" viewBox="0 0 26 24"><path d="M1 3H9L11 5H25V21H1Z" fill="#4aa8e8"/><path d="M1 7H25V21H1Z" fill="#6cc4f8"/><path d="M1 19L3 21" stroke="#222" stroke-width="0.8"/></svg>
<div class="a" style="left:1764px;top:206.5px;font-size:11px;font-weight:bold;color:#fff;text-align:center;width:100px;line-height:13px;text-shadow:0 1px 2px rgba(0,0,0,.9);font-size:11px;line-height:13px">1106</div>
<svg class="ico" style="left:1801px;top:242px" width="26" height="24" viewBox="0 0 26 24"><path d="M1 3H9L11 5H25V21H1Z" fill="#4aa8e8"/><path d="M1 7H25V21H1Z" fill="#6cc4f8"/><path d="M1 19L3 21" stroke="#222" stroke-width="0.8"/></svg>
<div class="a" style="left:1764px;top:269.5px;font-size:11px;font-weight:bold;color:#fff;text-align:center;width:100px;line-height:13px;text-shadow:0 1px 2px rgba(0,0,0,.9);font-size:11px;line-height:13px">ASL</div>
<svg class="ico" style="left:1801px;top:306px" width="26" height="24" viewBox="0 0 26 24"><path d="M1 3H9L11 5H25V21H1Z" fill="#4aa8e8"/><path d="M1 7H25V21H1Z" fill="#6cc4f8"/><path d="M1 19L3 21" stroke="#222" stroke-width="0.8"/></svg>
<svg class="ico" style="left:1798.0px;top:334.8px;overflow:visible" width="32.0" height="10.8" viewBox="0 0 30.6 10.5"><g fill="none" stroke="rgba(0,0,0,.55)" stroke-width="2.2" stroke-linecap="round" transform="translate(0 0.6)"><g transform="translate(0 0)"><path d="M1 3H6 M3.5 1V8Q3.5 10 2 9Q0.5 8 3 6Q7 4.5 8.5 7Q9 9.5 6 9.5 M7.5 2L9 3"/></g><g transform="translate(10.2 0)"><path d="M3 1L1 5 M2 3.5V10 M4.5 4H9.5 M7 1.5V9.5 M5 9.5H9"/></g><g transform="translate(20.4 0)"><path d="M1 2H9 M5 0.5V9.5Q5 10.5 3.5 10 M2.5 3.5H7.5V5.5H2.5Z M1 7H9 M2.5 8.5H7.5 M7.5 5.5V8.5"/></g></g><g fill="none" stroke="#fff" stroke-width="1.15" stroke-linecap="round"><g transform="translate(0 0)"><path d="M1 3H6 M3.5 1V8Q3.5 10 2 9Q0.5 8 3 6Q7 4.5 8.5 7Q9 9.5 6 9.5 M7.5 2L9 3"/></g><g transform="translate(10.2 0)"><path d="M3 1L1 5 M2 3.5V10 M4.5 4H9.5 M7 1.5V9.5 M5 9.5H9"/></g><g transform="translate(20.4 0)"><path d="M1 2H9 M5 0.5V9.5Q5 10.5 3.5 10 M2.5 3.5H7.5V5.5H2.5Z M1 7H9 M2.5 8.5H7.5 M7.5 5.5V8.5"/></g></g></svg>
<svg class="ico" style="left:1802px;top:361px" width="24" height="24" viewBox="0 0 24 24"><path d="M2 1H15L21 7V24H2Z" fill="#c8c8c8"/><path d="M15 1V7H21" fill="#9a9a9a"/><path d="M11.5 6L17 9V15L11.5 18L6 15V9Z" fill="#888" stroke="#eee" stroke-width="0.8"/><text x="9.5" y="15" font-size="7" font-weight="bold" font-family="Liberation Sans" fill="#eee">J</text><rect x="3" y="19" width="17" height="4" fill="#777"/></svg>
<svg class="ico" style="left:1798.0px;top:390.8px;overflow:visible" width="32.0" height="10.8" viewBox="0 0 30.6 10.5"><g fill="none" stroke="rgba(0,0,0,.55)" stroke-width="2.2" stroke-linecap="round" transform="translate(0 0.6)"><g transform="translate(0 0)"><path d="M2 2Q5 6 9 9.5 M8 1.5Q6 7 1 9.5"/></g><g transform="translate(10.2 0)"><path d="M1 1.5H9Q8 4 6 5 M5 3.5Q5 8 2.5 10"/></g><g transform="translate(20.4 0)"><path d="M3.5 1V10 M3.5 4.5Q6.5 5 8.5 7 M7 1L8 2.5 M8.5 0.5L9.5 2"/></g></g><g fill="none" stroke="#fff" stroke-width="1.15" stroke-linecap="round"><g transform="translate(0 0)"><path d="M2 2Q5 6 9 9.5 M8 1.5Q6 7 1 9.5"/></g><g transform="translate(10.2 0)"><path d="M1 1.5H9Q8 4 6 5 M5 3.5Q5 8 2.5 10"/></g><g transform="translate(20.4 0)"><path d="M3.5 1V10 M3.5 4.5Q6.5 5 8.5 7 M7 1L8 2.5 M8.5 0.5L9.5 2"/></g></g></svg>
<svg class="ico" style="left:1801px;top:419px" width="26" height="24" viewBox="0 0 26 24"><path d="M1 3H9L11 5H25V21H1Z" fill="#4aa8e8"/><path d="M1 7H25V21H1Z" fill="#6cc4f8"/><path d="M1 19L3 21" stroke="#222" stroke-width="0.8"/></svg>
<svg class="ico" style="left:1798.0px;top:447.8px;overflow:visible" width="32.0" height="10.8" viewBox="0 0 30.6 10.5"><g fill="none" stroke="rgba(0,0,0,.55)" stroke-width="2.2" stroke-linecap="round" transform="translate(0 0.6)"><g transform="translate(0 0)"><path d="M5 0.5V2 M1 3V2H9V3 M2.5 4H7.5 M2 5.5H8 M1 7H9 M5 3V7Q4 9.5 1 10 M5.5 7.5Q7 9.5 9.5 10"/></g><g transform="translate(10.2 0)"><path d="M1 1.5V7H4.5 M1 1.5H4 M1 3.5H4 M1 5H4 M4.5 7V9.5 M1.5 8.5L1 10 M2.5 8.5V9.5 M3.5 8.5V9.5 M7.5 1L5 4 M7.5 1L10 4 M6 4.5H9 M6 6H9 M7.5 6V8 M5 10Q7 8 7.5 8Q8 8 10 10"/></g><g transform="translate(20.4 0)"><path d="M1.5 3H8.5V7H1.5Z M5 0.5V10"/></g></g><g fill="none" stroke="#fff" stroke-width="1.15" stroke-linecap="round"><g transform="translate(0 0)"><path d="M5 0.5V2 M1 3V2H9V3 M2.5 4H7.5 M2 5.5H8 M1 7H9 M5 3V7Q4 9.5 1 10 M5.5 7.5Q7 9.5 9.5 10"/></g><g transform="translate(10.2 0)"><path d="M1 1.5V7H4.5 M1 1.5H4 M1 3.5H4 M1 5H4 M4.5 7V9.5 M1.5 8.5L1 10 M2.5 8.5V9.5 M3.5 8.5V9.5 M7.5 1L5 4 M7.5 1L10 4 M6 4.5H9 M6 6H9 M7.5 6V8 M5 10Q7 8 7.5 8Q8 8 10 10"/></g><g transform="translate(20.4 0)"><path d="M1.5 3H8.5V7H1.5Z M5 0.5V10"/></g></g></svg>
<div class="mw a"></div>
<div class="mwt a"></div>
<div class="tl" style="left:427px;top:118px;width:11px;height:11px;background:#fc5753;border:0.5px solid #df4744"></div>
<div class="a" style="left:430.5px;top:121.5px;width:4px;height:4px;border-radius:50%;background:#4d0000"></div>
<div class="tl" style="left:446px;top:118px;width:11px;height:11px;background:#fdbc40;border:0.5px solid #de9f34"></div>
<div class="tl" style="left:465px;top:118px;width:11px;height:11px;background:#33c748;border:0.5px solid #27aa35"></div>
<div class="a" style="left:0;width:1506px;top:115px;text-align:center;font-size:13px;color:#333;line-height:16px">Untitled2 (unlocked)</div>
<div class="canvas a"></div>
<div class="a" style="left:427px;top:143px;font-size:11px;color:#ddd;letter-spacing:-0.4px;font-weight:bold">100%</div>

<svg class="ico" style="left:457px;top:147px" width="7" height="5" viewBox="0 0 7 5"><path d="M0 0H7L3.5 5Z" fill="#ddd"/></svg>
<svg class="ico" style="left:487.3px;top:141px" width="16" height="16" viewBox="0 0 16 16"><rect x="1" y="2" width="14" height="12" fill="none" stroke="#e6e6e6" stroke-width="1.5"/><path d="M1 5H15M1 11H15" fill="none" stroke="#e6e6e6" stroke-width="1.5"/></svg>
<svg class="ico" style="left:514.6px;top:141px" width="16" height="16" viewBox="0 0 16 16"><path d="M14 2H2V14H14" fill="none" stroke="#e6e6e6" stroke-width="1.5"/><path d="M6 10L7 6M8 10L9 6M10 10L11 6" stroke="#e6e6e6" stroke-width="1"/></svg>
<svg class="ico" style="left:542px;top:141px" width="16" height="16" viewBox="0 0 16 16"><path d="M1 3H15V11H11L10 14L8 11H1Z" fill="#e6e6e6"/></svg>
<svg class="ico" style="left:569px;top:141px" width="16" height="16" viewBox="0 0 16 16"><rect x="1.5" y="1.5" width="13" height="13" fill="none" stroke="#e6e6e6" stroke-width="1.5"/><path d="M4.5 4.5L11.5 11.5M11.5 4.5L4.5 11.5" fill="none" stroke="#e6e6e6" stroke-width="1.5"/></svg>
<svg class="ico" style="left:596.6px;top:141px" width="16" height="16" viewBox="0 0 16 16"><rect x="1.5" y="1.5" width="13" height="13" fill="none" stroke="#e6e6e6" stroke-width="1.5"/><circle cx="8" cy="8" r="3" fill="none" stroke="#e6e6e6" stroke-width="1.5"/></svg>
<svg class="ico" style="left:601.6px;top:161px" width="6" height="4" viewBox="0 0 6 4"><path d="M0 0H6L3 4Z" fill="#ccc"/></svg>
<svg class="ico" style="left:624px;top:141px" width="16" height="16" viewBox="0 0 16 16"><rect x="1.5" y="1.5" width="13" height="13" fill="none" stroke="#e6e6e6" stroke-width="1.5"/><path d="M5 5L10 8L5 11Z" fill="#e6e6e6"/></svg>
<svg class="ico" style="left:629px;top:161px" width="6" height="4" viewBox="0 0 6 4"><path d="M0 0H6L3 4Z" fill="#ccc"/></svg>
<svg class="ico" style="left:651.4px;top:141px" width="16" height="16" viewBox="0 0 16 16"><rect x="1.5" y="1.5" width="13" height="13" fill="none" stroke="#e6e6e6" stroke-width="1.5"/><path d="M1.5 8H14.5" fill="none" stroke="#e6e6e6" stroke-width="1.5"/></svg>
<svg class="ico" style="left:656.4px;top:161px" width="6" height="4" viewBox="0 0 6 4"><path d="M0 0H6L3 4Z" fill="#ccc"/></svg>
<svg class="ico" style="left:678.8px;top:141px" width="16" height="16" viewBox="0 0 16 16"><path d="M3 13A6.5 6.5 0 1 1 13 13" fill="none" stroke="#e6e6e6" stroke-width="1.5"/><path d="M8 9L11 3" fill="none" stroke="#e6e6e6" stroke-width="1.5"/></svg>
<svg class="ico" style="left:683.8px;top:161px" width="6" height="4" viewBox="0 0 6 4"><path d="M0 0H6L3 4Z" fill="#ccc"/></svg>
<svg class="ico" style="left:706px;top:141px" width="16" height="16" viewBox="0 0 16 16"><path d="M8 2V14M2 8H14" fill="none" stroke="#e6e6e6" stroke-width="2.2"/></svg>
<svg class="ico" style="left:711px;top:161px" width="6" height="4" viewBox="0 0 6 4"><path d="M0 0H6L3 4Z" fill="#ccc"/></svg>
<svg class="ico" style="left:749px;top:141px" width="16" height="16" viewBox="0 0 16 16"><path d="M2 8L8 3L13 8L8 13Z" fill="#e6e6e6"/><path d="M5 4L7 1" stroke="#e6e6e6" stroke-width="1.2"/><circle cx="14" cy="11" r="1.6" fill="#e6e6e6"/></svg>
<svg class="ico" style="left:1033px;top:141px" width="20" height="22" viewBox="0 0 20 22"><rect x="14" y="1" width="2" height="2.4" fill="#e6e6e6"/><rect x="16" y="1" width="2" height="2.4" fill="#e6e6e6"/><rect x="0" y="5" width="2" height="2.4" fill="#e6e6e6"/><rect x="2" y="5" width="2" height="2.4" fill="#e6e6e6"/><rect x="5" y="5" width="2" height="2.4" fill="#e6e6e6"/><rect x="8" y="5" width="2" height="2.4" fill="#e6e6e6"/><rect x="11" y="5" width="2" height="2.4" fill="#e6e6e6"/><rect x="14" y="5" width="2" height="2.4" fill="#e6e6e6"/><rect x="16" y="5" width="2" height="2.4" fill="#e6e6e6"/><rect x="0" y="9" width="2" height="2.4" fill="#e6e6e6"/><rect x="2" y="9" width="2" height="2.4" fill="#e6e6e6"/><rect x="5" y="9" width="2" height="2.4" fill="#e6e6e6"/><rect x="8" y="9" width="2" height="2.4" fill="#e6e6e6"/><rect x="11" y="9" width="2" height="2.4" fill="#e6e6e6"/><rect x="14" y="9" width="2" height="2.4" fill="#e6e6e6"/><rect x="16" y="9" width="2" height="2.4" fill="#e6e6e6"/><rect x="0" y="13" width="2" height="2.4" fill="#e6e6e6"/><rect x="2" y="13" width="2" height="2.4" fill="#e6e6e6"/><rect x="5" y="13" width="2" height="2.4" fill="#e6e6e6"/><rect x="8" y="13" width="2" height="2.4" fill="#e6e6e6"/><rect x="11" y="13" width="2" height="2.4" fill="#e6e6e6"/><rect x="14" y="13" width="2" height="2.4" fill="#e6e6e6"/><rect x="16" y="13" width="2" height="2.4" fill="#e6e6e6"/><rect x="0" y="18" width="2" height="2.4" fill="#e6e6e6"/><rect x="2" y="18" width="2" height="2.4" fill="#e6e6e6"/></svg>
<svg class="ico" style="left:427px;top:201px" width="16" height="16" viewBox="0 0 16 16"><path d="M8 1L15 4.5V11.5L8 15L1 11.5V4.5Z" fill="#e6e6e6"/><path d="M1.5 4.8L8 8.2L14.5 4.8M8 8.2V14.5" fill="none" stroke="#222" stroke-width="0.9"/></svg>
<svg class="ico" style="left:427px;top:236px" width="16" height="16" viewBox="0 0 16 16"><circle cx="8" cy="8" r="6.5" fill="none" stroke="#e6e6e6" stroke-width="1.5"/><circle cx="8" cy="8" r="3" fill="none" stroke="#e6e6e6" stroke-width="1.5"/></svg>
<svg class="ico" style="left:427px;top:271px" width="16" height="16" viewBox="0 0 16 16"><rect x="1.5" y="3" width="13" height="9" fill="none" stroke="#e6e6e6" stroke-width="1.5"/><path d="M1.5 6H14.5M3 13.5H13" fill="none" stroke="#e6e6e6" stroke-width="1.5"/></svg>
<svg class="ico" style="left:427px;top:306px" width="16" height="16" viewBox="0 0 16 16"><path d="M6 2V12" stroke="#e6e6e6" stroke-width="1.6"/><ellipse cx="4.5" cy="12.5" rx="2.8" ry="2.2" fill="#e6e6e6"/><path d="M6 2Q10 3 11 7Q9 5 6 5" fill="#e6e6e6"/></svg>
<svg class="ico" style="left:427px;top:341px" width="16" height="16" viewBox="0 0 16 16"><path d="M2 2V14M14 2V14" stroke="#e6e6e6" stroke-width="2" stroke-dasharray="2 1.5"/><path d="M5 4L11 8L5 12Z" fill="#e6e6e6"/></svg>
<svg class="ico" style="left:427px;top:376px" width="16" height="16" viewBox="0 0 16 16"><rect x="1" y="2" width="14" height="12" fill="none" stroke="#e6e6e6" stroke-width="1.5"/><path d="M2 13L6 7L9 10L11 8L14 13Z" fill="#e6e6e6"/></svg>
<svg class="ico" style="left:427px;top:411px" width="16" height="16" viewBox="0 0 16 16"><path d="M10 3L4 10Q2.5 12.5 4.5 13.5Q6.5 14.5 8 12L13 5Q14 3 12.5 2Q11 1 10 3L5 10" fill="none" stroke="#e6e6e6" stroke-width="1.5"/></svg>
<svg class="ico" style="left:427px;top:446px" width="16" height="16" viewBox="0 0 16 16"><path d="M1 5.5H5M1 10.5H5" stroke="#e6e6e6" stroke-width="1.8"/><path d="M5 2.5H8A5.5 5.5 0 0 1 8 13.5H5Z" fill="#e6e6e6"/><path d="M13 8H15.5" stroke="#e6e6e6" stroke-width="2"/></svg>
<svg class="ico" style="left:427px;top:481px" width="16" height="16" viewBox="0 0 16 16"><circle cx="8" cy="8" r="7" fill="#e6e6e6"/><text x="8" y="12" font-size="12" font-style="italic" font-weight="bold" text-anchor="middle" fill="#222" font-family="Liberation Serif">v</text></svg>
<svg class="ico" style="left:427px;top:516px" width="16" height="16" viewBox="0 0 16 16"><circle cx="8" cy="8" r="7" fill="#e6e6e6"/><text x="8" y="12" font-size="12" font-style="italic" font-weight="bold" text-anchor="middle" fill="#222" font-family="Liberation Serif">b</text></svg>
<svg class="ico" style="left:427px;top:551px" width="16" height="16" viewBox="0 0 16 16"><path d="M8 1L10 6H15L11 9.5L12.5 15L8 11.5L3.5 15L5 9.5L1 6H6Z" fill="#e6e6e6"/></svg>
<svg class="ico" style="left:1063px;top:199px" width="16" height="16" viewBox="0 0 16 16"><circle cx="6.5" cy="6.5" r="4.5" fill="none" stroke="#e6e6e6" stroke-width="1.5"/><path d="M10 10L14.5 14.5" stroke="#e6e6e6" stroke-width="2"/></svg>
<svg class="ico" style="left:1063px;top:243px" width="16" height="16" viewBox="0 0 16 16"><circle cx="8" cy="8" r="7" fill="#e6e6e6"/><text x="8" y="12.5" font-size="11" font-style="italic" font-weight="bold" text-anchor="middle" fill="#222" font-family="Liberation Serif">i</text></svg>
<svg class="ico" style="left:1063px;top:286px" width="16" height="16" viewBox="0 0 16 16"><rect x="1" y="3" width="6.5" height="10" fill="#e6e6e6"/><rect x="8.5" y="3" width="6.5" height="10" fill="#e6e6e6"/></svg>
<svg class="ico" style="left:1063px;top:329px" width="16" height="16" viewBox="0 0 16 16"><path d="M1 3H15M4 5.5H15M4 8H15M4 10.5H15M4 13H15M1 5.5H2.5M1 8H2.5M1 10.5H2.5M1 13H2.5" stroke="#e6e6e6" stroke-width="1.3"/></svg>
<svg class="ico" style="left:1063px;top:405px" width="16" height="16" viewBox="0 0 16 16"><rect x="1" y="4" width="14" height="10" rx="1" fill="#e6e6e6"/><circle cx="9" cy="9" r="3" fill="#222"/><circle cx="9" cy="9" r="1.5" fill="#e6e6e6"/><rect x="3" y="2" width="4" height="2" fill="#e6e6e6"/></svg>
<svg class="ico" style="left:1063px;top:449px" width="16" height="16" viewBox="0 0 16 16"><path d="M3 1V15M8 1V15M13 1V15" stroke="#e6e6e6" stroke-width="1.5"/><rect x="1" y="9" width="4" height="3" fill="#e6e6e6"/><rect x="6" y="4" width="4" height="3" fill="#e6e6e6"/><rect x="11" y="8" width="4" height="3" fill="#e6e6e6"/></svg>
<div class="a" style="left:1064px;top:515px;width:5px;height:101px;background:repeating-linear-gradient(#3a3a3a 0 2px,#262626 2px 3px)"></div>
<div class="a" style="left:1073px;top:515px;width:5px;height:101px;background:repeating-linear-gradient(#3a3a3a 0 2px,#262626 2px 3px)"></div>
<div class="a" style="left:1065px;top:534px;width:11px;height:11px;border-radius:50%;background:#ddd"></div>
<svg class="ico" style="left:427px;top:626px" width="16" height="16" viewBox="0 0 16 16"><rect x="5" y="8" width="10" height="7" fill="#e6e6e6"/><path d="M3 8V5A3 3 0 0 1 9 5" fill="none" stroke="#e6e6e6" stroke-width="1.5"/></svg>
<svg class="ico" style="left:457px;top:626px" width="16" height="16" viewBox="0 0 16 16"><path d="M14 6V1.5H1.5V14.5H6" fill="none" stroke="#e6e6e6" stroke-width="1.5"/><path d="M7 7L15 10L11.5 11L14 15L12.5 16L10 12L7.5 14.5Z" fill="#e6e6e6"/></svg>
<svg class="ico" style="left:500px;top:626px" width="16" height="16" viewBox="0 0 16 16"><path d="M1 2H15V10H1Z" fill="#e6e6e6"/><path d="M4 15L8 10L12 15" fill="none" stroke="#e6e6e6" stroke-width="1.5"/></svg>
<svg class="ico" style="left:543px;top:626px" width="16" height="16" viewBox="0 0 16 16"><rect x="1" y="3" width="9" height="7" fill="#e6e6e6"/><rect x="5" y="7" width="10" height="7" fill="#e6e6e6" stroke="#222" stroke-width="1"/></svg>
<svg class="ico" style="left:586px;top:626px" width="16" height="16" viewBox="0 0 16 16"><path d="M1 5H7V12H1Z M9 5H15V12H9Z" fill="#e6e6e6"/><path d="M4 2L12 15" stroke="#222" stroke-width="2"/><path d="M4 2L12 15" stroke="#e6e6e6" stroke-width="1"/></svg>
<svg class="ico" style="left:615px;top:626px" width="16" height="16" viewBox="0 0 16 16"><path d="M5 1V15M11 1V15M1 5H15M1 11H15" stroke="#e6e6e6" stroke-width="1.4"/></svg>
<svg class="ico" style="left:673px;top:626px" width="16" height="16" viewBox="0 0 16 16"><path d="M8 6L3 12Q2 14 4 14.5Q6 15 7 13L11 8" fill="none" stroke="#e6e6e6" stroke-width="1.5"/><path d="M12 1V7M9 4H15" stroke="#e6e6e6" stroke-width="1.6"/></svg>
<svg class="ico" style="left:717px;top:626px" width="16" height="16" viewBox="0 0 16 16"><path d="M2 14L9 7" stroke="#e6e6e6" stroke-width="2.5"/><circle cx="11" cy="5" r="4" fill="#e6e6e6"/><circle cx="13" cy="3" r="2" fill="#222"/></svg>
<svg class="ico" style="left:760px;top:626px" width="16" height="16" viewBox="0 0 16 16"><rect x="1" y="2" width="14" height="12" fill="#e6e6e6"/><path d="M4 2V14M8 2V14M12 2V14" stroke="#222" stroke-width="1"/><rect x="3" y="2" width="2" height="7" fill="#222"/><rect x="7" y="2" width="2" height="7" fill="#222"/><rect x="11" y="2" width="2" height="7" fill="#222"/></svg>
<svg class="ico" style="left:804px;top:626px" width="16" height="16" viewBox="0 0 16 16"><rect x="1" y="3" width="14" height="10" fill="#e6e6e6"/><path d="M3 5H13M3 7.5H13M3 10H13" stroke="#222" stroke-width="1" stroke-dasharray="1.2 0.8"/></svg>
<svg class="ico" style="left:1014px;top:626px" width="16" height="16" viewBox="0 0 16 16"><circle cx="8" cy="8" r="6.5" fill="none" stroke="#555" stroke-width="2"/><path d="M6 5L11 8L6 11Z" fill="#e6e6e6"/></svg>
<svg class="ico" style="left:1063px;top:626px" width="16" height="16" viewBox="0 0 16 16"><path d="M5 4A5.5 5.5 0 1 0 11 4" fill="none" stroke="#e6e6e6" stroke-width="1.5"/><path d="M8 1V8" fill="none" stroke="#e6e6e6" stroke-width="1.5"/></svg>
<div class="a" style="left:624px;top:321px;width:323px;height:111px;border:1.5px solid #5a9be0;background:#000"></div>
<div class="a" style="left:627px;top:338px;width:318px;height:19px;background:#3d4048"></div>
<div class="a" style="left:627px;top:357px;width:318px;height:57px;background:#2a2b30"></div>
<div class="a cl" style="left:632px;top:324px">Left</div>
<div class="a cl" style="left:912px;top:324px">Right</div>
<div class="a cl" style="left:632px;top:415px">Left</div>
<div class="a cl" style="left:912px;top:415px">Right</div>
<div class="a" style="left:632px;top:342px;font-size:9px;color:#e0e0e0;letter-spacing:-0.2px">COMPRESSOR</div>
<div class="a" style="left:895px;top:341px;width:46px;height:12px;background:#454851;border:1px solid #373940;font-size:9px;color:#a8a8a8;text-align:center;line-height:10px">bypass</div>
<div class="a" style="left:669px;top:363px;width:20px;height:44px;background:#202124"></div>
<div class="a" style="left:860px;top:363px;width:11px;height:44px;background:#050505"></div>
<div class="a" style="left:915px;top:363px;width:22px;height:44px;background:#202124"></div>

<div class="a" style="left:621px;top:318px;width:7px;height:7px;background:#e8eef8;border:1px solid #8aa"></div>
<div class="a" style="left:943px;top:318px;width:7px;height:7px;background:#e8eef8;border:1px solid #8aa"></div>
<div class="a" style="left:621px;top:428px;width:7px;height:7px;background:#e8eef8;border:1px solid #8aa"></div>
<div class="a" style="left:943px;top:428px;width:7px;height:7px;background:#e8eef8;border:1px solid #8aa"></div>
<div class="a kl" style="left:615.5px;top:362px">Input</div>
<div class="a kl" style="left:615.5px;top:397px">8.6 dB</div>
<svg class="ico" style="left:632.5px;top:374px" width="26" height="26" viewBox="0 0 26 26"><path d="M5.22 20.78 A11 11 0 0 1 18.45 3.45" fill="none" stroke="#3fb0e4" stroke-width="2.3"/><path d="M18.45 3.45 A11 11 0 0 1 20.78 20.78" fill="none" stroke="#9a9a9a" stroke-width="2.3"/><path d="M13.25 12.57 L18.70 3.01" stroke="#e4e4e4" stroke-width="2"/></svg>
<div class="a kl" style="left:686px;top:362px">Threshold</div>
<div class="a kl" style="left:686px;top:397px">-21 dB</div>
<svg class="ico" style="left:703px;top:374px" width="26" height="26" viewBox="0 0 26 26"><path d="M5.22 20.78 A11 11 0 0 1 8.95 2.77" fill="none" stroke="#3fb0e4" stroke-width="2.3"/><path d="M8.95 2.77 A11 11 0 0 1 20.78 20.78" fill="none" stroke="#9a9a9a" stroke-width="2.3"/><path d="M12.82 12.54 L8.77 2.31" stroke="#e4e4e4" stroke-width="2"/></svg>
<div class="a kl" style="left:729.6px;top:362px">Ratio</div>
<div class="a kl" style="left:729.6px;top:397px">40 :1</div>
<svg class="ico" style="left:746.6px;top:374px" width="26" height="26" viewBox="0 0 26 26"><path d="M5.22 20.78 A11 11 0 1 1 23.84 14.89" fill="none" stroke="#3fb0e4" stroke-width="2.3"/><path d="M23.84 14.89 A11 11 0 0 1 20.78 20.78" fill="none" stroke="#9a9a9a" stroke-width="2.3"/><path d="M13.49 13.09 L24.33 14.98" stroke="#e4e4e4" stroke-width="2"/></svg>
<div class="a kl" style="left:765px;top:362px">Attack</div>
<div class="a kl" style="left:765px;top:397px">143</div>
<svg class="ico" style="left:782px;top:374px" width="26" height="26" viewBox="0 0 26 26"><path d="M5.22 20.78 A11 11 0 1 1 20.78 20.78" fill="none" stroke="#3fb0e4" stroke-width="2.3"/><path d="M13.35 13.35 L21.13 21.13" stroke="#e4e4e4" stroke-width="2"/></svg>
<div class="a kl" style="left:804.7px;top:362px">Release</div>
<div class="a kl" style="left:804.7px;top:397px">146</div>
<svg class="ico" style="left:821.7px;top:374px" width="26" height="26" viewBox="0 0 26 26"><path d="M5.22 20.78 A11 11 0 1 1 20.78 20.78" fill="none" stroke="#3fb0e4" stroke-width="2.3"/><path d="M13.35 13.35 L21.13 21.13" stroke="#e4e4e4" stroke-width="2"/></svg>
<div class="a kl" style="left:862px;top:362px">Output</div>
<div class="a kl" style="left:862px;top:397px">9.7 dB</div>
<svg class="ico" style="left:879px;top:374px" width="26" height="26" viewBox="0 0 26 26"><path d="M5.22 20.78 A11 11 0 0 1 19.33 4.00" fill="none" stroke="#3fb0e4" stroke-width="2.3"/><path d="M19.33 4.00 A11 11 0 0 1 20.78 20.78" fill="none" stroke="#9a9a9a" stroke-width="2.3"/><path d="M13.29 12.59 L19.61 3.59" stroke="#e4e4e4" stroke-width="2"/></svg>
<div class="a" style="left:1477px;top:866px;width:325px;height:219px;background:#3a3a3a;border-radius:5px;box-shadow:0 3px 10px rgba(0,0,0,.3);overflow:hidden">
<div class="a" style="left:0;top:0;width:325px;height:20px;background:linear-gradient(#f6f6f6,#ececec);border-bottom:1px solid #cfcfcf"></div>
<div class="a" style="left:0;top:20px;width:325px;height:32px;background:#444"></div>
<div class="a" style="left:0;top:52px;width:325px;height:133px"><div class="a" style="left:0;top:0px;width:325px;height:19px;background:#303030"></div><div class="a" style="left:0;top:19px;width:325px;height:19px;background:#282828"></div><div class="a" style="left:0;top:38px;width:325px;height:19px;background:#303030"></div><div class="a" style="left:0;top:57px;width:325px;height:19px;background:#282828"></div><div class="a" style="left:0;top:76px;width:325px;height:19px;background:#303030"></div><div class="a" style="left:0;top:95px;width:325px;height:19px;background:#282828"></div><div class="a" style="left:0;top:114px;width:325px;height:19px;background:#303030"></div></div>
<div class="a" style="left:0;top:185px;width:325px;height:34px;background:#444;border-top:1px solid #333"></div>
</div>
<div class="a" style="left:1484px;top:870px;width:12px;height:12px;border-radius:50%;background:#d0d0d0;border:1px solid #c0c0c0"></div>
<div class="a" style="left:1503px;top:870px;width:12px;height:12px;border-radius:50%;background:#d0d0d0;border:1px solid #c0c0c0"></div>
<div class="a" style="left:1522px;top:870px;width:12px;height:12px;border-radius:50%;background:#d0d0d0;border:1px solid #c0c0c0"></div>
<div class="a" style="left:1577px;top:869px;width:124px;text-align:center;font-size:12px;color:#8a8a8a;line-height:14px">Max Console</div>
<svg class="ico" style="left:1621px;top:895px;" width="12" height="12" viewBox="0 0 12 12"><circle cx="5" cy="5" r="3.6" fill="none" stroke="#d8d8d8" stroke-width="1.8"/><path d="M7.5 7.5L11 11" stroke="#d8d8d8" stroke-width="2"/></svg>
<div class="a" style="left:1638px;top:896px;font-size:11px;color:#a8a8a8;line-height:13px">Filter</div>
<svg class="ico" style="left:1781px;top:896px;" width="12" height="12" viewBox="0 0 12 12"><path d="M6 1V11M1 6H11" stroke="#777" stroke-width="1.6"/></svg>
<svg class="ico" style="left:1487px;top:1062px;" width="15" height="15" viewBox="0 0 15 15"><path d="M2 2L13 13M13 2L2 13" stroke="#6a6a6a" stroke-width="2"/></svg>
<svg class="ico" style="left:1538px;top:1062px;" width="15" height="15" viewBox="0 0 15 15"><circle cx="7.5" cy="7.5" r="6.5" fill="#6a6a6a"/><path d="M7.5 3.5V7.5H11" stroke="#414141" stroke-width="1.6" fill="none"/></svg>
<svg class="ico" style="left:1573px;top:1062px;" width="15" height="15" viewBox="0 0 15 15"><path d="M7.5 1L14 14H1Z" fill="#6a6a6a"/><path d="M7.5 5.5V10M7.5 11.5V13" stroke="#414141" stroke-width="1.5"/></svg>
<svg class="ico" style="left:1609px;top:1061px;" width="13" height="17" viewBox="0 0 13 17"><path d="M2 1H11M2 4H11M2 7H11" stroke="#6a6a6a" stroke-width="1.6"/><path d="M6.5 8V12M2.5 10L6.5 15L10.5 10" stroke="#6a6a6a" stroke-width="1.8" fill="none"/></svg>
<svg class="ico" style="left:1657px;top:1063px;" width="18" height="13" viewBox="0 0 18 13"><path d="M1 6.5L7 1V4H17V9H7V12Z" fill="#6a6a6a"/></svg>
<div class="a" style="left:1005px;top:1018px;width:440px;height:63px;background:#322f45;border-radius:4px"></div>
<svg class="ico" style="left:1163px;top:1033px;" width="28" height="16" viewBox="0 0 28 16"><path d="M13 1L1 8L13 15Z M27 1L15 8L27 15Z" fill="#b8b6c8"/></svg>
<svg class="ico" style="left:1216px;top:1029px;" width="24" height="24" viewBox="0 0 24 24"><path d="M1 1L23 12L1 23Z" fill="#b8b6c8"/></svg>
<svg class="ico" style="left:1259px;top:1033px;" width="28" height="16" viewBox="0 0 28 16"><path d="M1 1L13 8L1 15Z M15 1L27 8L15 15Z" fill="#b8b6c8"/></svg>
<svg class="ico" style="left:1381px;top:1032px;" width="18" height="16" viewBox="0 0 18 16"><path d="M4 11H1V1H17V11H14" fill="none" stroke="#b8b6c8" stroke-width="1.3"/><path d="M4.5 15L9 9.5L13.5 15Z" fill="#b8b6c8"/></svg>
<svg class="ico" style="left:1421px;top:1031px;" width="13" height="18" viewBox="0 0 13 18"><path d="M4 6H1V17H12V6H9" fill="none" stroke="#b8b6c8" stroke-width="1.3"/><path d="M6.5 12V1M3.5 4L6.5 1L9.5 4" fill="none" stroke="#b8b6c8" stroke-width="1.3"/></svg>
<div class="a" style="left:1017px;top:1056px;font-size:12px;color:#c8c6d4;line-height:14px">00:39</div>
<div class="a" style="left:1396px;top:1056px;font-size:12px;color:#c8c6d4;line-height:14px">-02:31</div>
<div class="a" style="left:1063px;top:1062px;width:324px;height:3px;border-radius:1.5px;background:#544c66"></div>
<div class="a" style="left:1063px;top:1062px;width:67px;height:3px;border-radius:1.5px;background:#aaa6b8"></div>
<div class="a" style="left:1129px;top:1055px;width:3px;height:16px;border-radius:1px;background:#d6d4e0"></div>
<div class="a" style="left:68px;top:1114px;width:1754px;height:50px;background:#e8663e;border-radius:6px 6px 0 0;"></div>
<svg class="ico" style="left:73.10px;top:1120.00px" width="29.00" height="29.00" viewBox="0 0 28 28"><rect x="0.5" y="1" width="27" height="26" rx="2" fill="#eaf0f8"/><path d="M2.5 1H15Q12 9 13.5 14H11Q11 21 12 27H2.5Q0.5 27 0.5 25V3Q0.5 1 2.5 1Z" fill="#1e88ee"/><path d="M6 20Q14 25 23 19" fill="none" stroke="#1a2a44" stroke-width="1.3"/><circle cx="8" cy="9" r="0.9" fill="#1a2a44"/><circle cx="21" cy="9" r="0.9" fill="#1a2a44"/></svg>
<svg class="ico" style="left:107.07px;top:1120.00px" width="29.00" height="29.00" viewBox="0 0 28 28"><path d="M6 4L22 1L26 24L10 27Z" fill="#e8e8e8"/><path d="M9 8L22 6M9 12L23 10M10 16L23 14M10 20L24 18" stroke="#bbb" stroke-width="0.6"/><path d="M7 1L12 3.5V9L7 11.5L2 9V3.5Z" fill="#222" stroke="#fff" stroke-width="0.7"/><text x="5.2" y="9" font-size="7" font-weight="bold" font-family="Liberation Sans" fill="#fff" >J</text><path d="M16 24L24 10" stroke="#4cae3c" stroke-width="2.4"/></svg>
<svg class="ico" style="left:141.04px;top:1120.00px" width="29.00" height="29.00" viewBox="0 0 28 28"><circle cx="14" cy="15.5" r="12" fill="#ff3750"/><path d="M2.5 13Q3 5 10 3Q7 7 8.5 9Q12 5 17 6Q13 2 20 2Q27 6 26.5 15Q26 8 21 6Q25 11 24 16Q22 8 15 8Z" fill="#ffb321"/><path d="M4 18Q3 10 9 7Q8 11 10 12Z" fill="#ff7a18"/><circle cx="14.5" cy="15.5" r="6.8" fill="#6b3bd8"/><path d="M8.5 13Q14 10 19 13Q15 11.5 12 14Z" fill="#ff9a28"/></svg>
<svg class="ico" style="left:175.01px;top:1120.00px" width="29.00" height="29.00" viewBox="0 0 28 28"><rect x="1" y="1" width="26" height="26" rx="5" fill="#f3f3f3"/><circle cx="14" cy="14" r="10.5" fill="#3aa757"/><path d="M14 3.5A10.5 10.5 0 0 1 23.1 8.75L14 14L4.9 8.75A10.5 10.5 0 0 1 14 3.5Z" fill="#e33b2e"/><path d="M23.1 8.75A10.5 10.5 0 0 1 14 24.5L14 14Z" fill="#fcc934"/><circle cx="14" cy="14" r="4.6" fill="#fff"/><circle cx="14" cy="14" r="3.6" fill="#4285f4"/></svg>
<svg class="ico" style="left:208.98px;top:1120.00px" width="29.00" height="29.00" viewBox="0 0 28 28"><rect x="1" y="1" width="26" height="26" rx="6" fill="#e8353a"/><circle cx="14" cy="14" r="8.5" fill="#fff"/><path d="M9.5 10L14 18.5L18.5 10" fill="none" stroke="#e8353a" stroke-width="3" stroke-linejoin="round"/></svg>
<svg class="ico" style="left:242.95px;top:1120.00px" width="29.00" height="29.00" viewBox="0 0 28 28"><circle cx="14" cy="14" r="12.5" fill="#f5f5f5"/><circle cx="14" cy="14" r="11" fill="#2d8bef"/><path d="M21 7L15.2 15.2L12.8 12.8Z" fill="#ff3b30"/><path d="M7 21L12.8 12.8L15.2 15.2Z" fill="#fff"/></svg>
<svg class="ico" style="left:276.92px;top:1120.00px" width="29.00" height="29.00" viewBox="0 0 28 28"><text x="12" y="21" font-size="22" font-weight="bold" font-family="Liberation Serif" fill="#f07818" stroke="#8a3a08" stroke-width="0.6" transform="rotate(6 18 12)">B</text><text x="0" y="26" font-size="24" font-weight="bold" font-family="Liberation Serif" fill="#3fae2a" stroke="#1c5a10" stroke-width="0.6" transform="rotate(-6 8 16)">F</text><text x="10" y="25" font-size="12" font-weight="bold" font-family="Liberation Serif" fill="#3fae2a">B</text></svg>
<svg class="ico" style="left:310.89px;top:1120.00px" width="29.00" height="29.00" viewBox="0 0 28 28"><rect x="1" y="3" width="26" height="22" rx="1.5" fill="#151515" stroke="#444" stroke-width="0.6"/><path d="M4 7L6.5 8.5L4 10M7 10.5H10" stroke="#fff" stroke-width="0.9" fill="none"/></svg>
<svg class="ico" style="left:344.86px;top:1120.00px" width="29.00" height="29.00" viewBox="0 0 28 28"><rect x="1" y="1" width="26" height="26" rx="2" fill="#353535"/><circle cx="16" cy="9" r="4" fill="none" stroke="#fff" stroke-width="2.2"/><circle cx="12" cy="18" r="5.5" fill="none" stroke="#fff" stroke-width="2.2"/><circle cx="12" cy="18" r="2.2" fill="#7fe0f0"/></svg>
<svg class="ico" style="left:378.83px;top:1120.00px" width="29.00" height="29.00" viewBox="0 0 28 28"><rect x="3" y="1.5" width="6" height="6" fill="#4cae3c" stroke="#1d5a1d" stroke-width="0.7"/><rect x="2" y="11" width="24" height="14" fill="#eee" stroke="#555" stroke-width="0.8"/><text x="3.5" y="22" font-size="11" font-weight="bold" font-family="Liberation Mono" fill="#111" >Pd</text></svg>
<svg class="ico" style="left:412.80px;top:1120.00px" width="29.00" height="29.00" viewBox="0 0 28 28"><rect x="1" y="1" width="26" height="26" rx="2.5" fill="#0f2340"/><text x="7" y="21" font-size="19" font-weight="normal" font-family="Liberation Sans" fill="#fff" >P</text><circle cx="17" cy="22" r="1.6" fill="none" stroke="#fff" stroke-width="0.8"/><circle cx="21" cy="22" r="1.6" fill="none" stroke="#fff" stroke-width="0.8"/></svg>
<svg class="ico" style="left:446.77px;top:1120.00px" width="29.00" height="29.00" viewBox="0 0 28 28"><rect x="1" y="1" width="26" height="26" rx="2.5" fill="#10233f"/><text x="6.5" y="23" font-size="21" font-weight="bold" font-family="Liberation Serif" fill="#fff" >P</text></svg>
<svg class="ico" style="left:480.74px;top:1120.00px" width="29.00" height="29.00" viewBox="0 0 28 28"><circle cx="14" cy="14" r="12.5" fill="#0a0a0a" stroke="#ddd" stroke-width="0.8"/><text x="8" y="21" font-size="14" font-weight="normal" font-family="Liberation Serif" fill="#fff" >i</text><text x="13" y="14" font-size="10" font-weight="normal" font-family="Liberation Serif" fill="#fff" >3</text></svg>
<svg class="ico" style="left:514.71px;top:1120.00px" width="29.00" height="29.00" viewBox="0 0 28 28"><circle cx="14" cy="14" r="13" fill="#1b969d"/><circle cx="9.5" cy="14" r="3.8" fill="none" stroke="#fff" stroke-width="2.2"/><circle cx="18.5" cy="14" r="3.8" fill="none" stroke="#fff" stroke-width="2.2"/></svg>
<svg class="ico" style="left:548.68px;top:1120.00px" width="29.00" height="29.00" viewBox="0 0 28 28"><path d="M14 1L26 7V21L14 27L2 21V7Z" fill="#6e6e6e"/><path d="M2 7L14 13L26 7L14 1Z" fill="#c8c8c8"/><path d="M14 13V27L26 21V7Z" fill="#444"/><path d="M6 12L10 14V19L6 17Z M18 14L22 12V17L18 19Z" fill="#aaa"/></svg>
<svg class="ico" style="left:582.65px;top:1120.00px" width="29.00" height="29.00" viewBox="0 0 28 28"><path d="M5 6Q14 -1 23 6L26 16Q24 26 14 27Q4 26 2 16Z" fill="#2b2b2b"/><path d="M9 13H19V16H9Z" fill="#d06030"/><circle cx="11" cy="20" r="1" fill="#9ad"/><circle cx="17" cy="20" r="1" fill="#9ad"/><path d="M10 6H18V10H10Z" fill="#456"/></svg>
<svg class="ico" style="left:616.62px;top:1120.00px" width="29.00" height="29.00" viewBox="0 0 28 28"><path d="M4 3L16 1L27 20L25 26L13 27L1 8Z" fill="#d8d8d8"/><path d="M4 3L16 1L26 19L14 21Z" fill="#151515"/></svg>
<svg class="ico" style="left:650.59px;top:1120.00px" width="29.00" height="29.00" viewBox="0 0 28 28"><path d="M7 2V26" stroke="#f4f4f4" stroke-width="3"/><path d="M1 13H27" stroke="#eee" stroke-width="2"/><circle cx="20" cy="10" r="3" fill="#111"/><path d="M16 13Q20 28 25 13Z" fill="#fff"/><path d="M15 26L19 20L23 26" stroke="#ddd" stroke-width="1.5" fill="none"/></svg>
<svg class="ico" style="left:684.56px;top:1120.00px" width="29.00" height="29.00" viewBox="0 0 28 28"><path d="M14 2L25 8V20L14 26L3 20V8Z" fill="#fff" stroke="#111" stroke-width="3.5" stroke-linejoin="round"/><path d="M14 14L25 8M14 14V26M14 14L3 8" stroke="#111" stroke-width="3.5"/></svg>
<svg class="ico" style="left:718.53px;top:1120.00px" width="29.00" height="29.00" viewBox="0 0 28 28"><path d="M2 7L20 4L23 23L5 26Z" fill="#3e9bf0"/><path d="M6 11L18 9M7 16L19 14M8 21L20 19" stroke="#9cd0ff" stroke-width="0.5"/><path d="M21 3L15 24" stroke="#333" stroke-width="2.2"/><path d="M17 2H25L24 6H18Z" fill="#bbb"/></svg>
<svg class="ico" style="left:752.50px;top:1120.00px" width="29.00" height="29.00" viewBox="0 0 28 28"><circle cx="14" cy="14" r="12.5" fill="#3a3218" stroke="#b8a060" stroke-width="1"/><circle cx="14" cy="14" r="8" fill="none" stroke="#8a7a40" stroke-width="0.7"/><circle cx="14" cy="14" r="4" fill="none" stroke="#8a7a40" stroke-width="0.7"/><path d="M14 14L22 6" stroke="#e8d070" stroke-width="1.2"/></svg>
<svg class="ico" style="left:786.47px;top:1120.00px" width="29.00" height="29.00" viewBox="0 0 28 28"><path d="M1 14Q4 -4 8 14Z" fill="#e03030"/><path d="M3 14Q6 0 10 14Z" fill="#40b040"/><path d="M6 14Q8 4 11 14Z" fill="#f0d020"/><path d="M14 14Q18 30 22 14Z" fill="#2040c0"/><path d="M16 14Q20 28 25 14Z" fill="#40b040"/><path d="M19 14Q22 24 27 14Z" fill="#e03030"/><path d="M1 14Q6 -3 13 14T27 14" fill="none" stroke="#111" stroke-width="1"/></svg>
<svg class="ico" style="left:820.44px;top:1120.00px" width="29.00" height="29.00" viewBox="0 0 28 28"><rect x="1" y="3" width="12" height="10" fill="#ccc" stroke="#333" stroke-width="0.8"/><path d="M3 9Q7 3 11 9Z" fill="#c02020"/><rect x="7" y="14" width="13" height="11" fill="#ddd" stroke="#333" stroke-width="0.8"/><path d="M9 21Q13.5 14 18 21Z" fill="#c02020"/><path d="M14 6H24V18" fill="none" stroke="#222" stroke-width="2"/></svg>
<svg class="ico" style="left:854.41px;top:1120.00px" width="29.00" height="29.00" viewBox="0 0 28 28"><path d="M3 5L21 2L24 24L6 27Z" fill="#3454c0" stroke="#7a8ad0" stroke-width="0.6"/><path d="M10 20L26 4" stroke="#c8a040" stroke-width="1.2"/></svg>
<svg class="ico" style="left:888.38px;top:1120.00px" width="29.00" height="29.00" viewBox="0 0 28 28"><path d="M4 2H20L22 5H6Z" fill="#777"/><path d="M3 6H20V17H3Z" fill="#cfe4f2"/><path d="M3 6H8V17H3Z" fill="#333"/><rect x="15" y="13" width="10" height="14" fill="#ddd" stroke="#999" stroke-width="0.5"/><rect x="17" y="15" width="3" height="4" fill="#d0a040"/></svg>
<svg class="ico" style="left:922.35px;top:1120.00px" width="29.00" height="29.00" viewBox="0 0 28 28"><rect x="2" y="4" width="24" height="18" fill="#f2f2f2"/><path d="M3 12L10 9V20L3 20Z" fill="#666"/><path d="M8 26L18 4M20 26L10 4" stroke="#999" stroke-width="1.2"/><circle cx="10" cy="3" r="2" fill="none" stroke="#aaa"/><circle cx="18" cy="3" r="2" fill="none" stroke="#aaa"/></svg>
<svg class="ico" style="left:956.32px;top:1120.00px" width="29.00" height="29.00" viewBox="0 0 28 28"><circle cx="14" cy="17" r="10" fill="#eeeedd" stroke="#c8c070" stroke-width="1.2"/><path d="M8 7Q14 0 20 7Q14 10 8 7Z" fill="#5cc040"/><circle cx="9" cy="5" r="2" fill="#5cc040"/><circle cx="19" cy="5" r="2" fill="#5cc040"/><path d="M14 17L10 12M14 17L19 14" stroke="#333" stroke-width="1"/></svg>
<svg class="ico" style="left:990.29px;top:1120.00px" width="29.00" height="29.00" viewBox="0 0 28 28"><circle cx="14" cy="14" r="12.5" fill="#d6b030"/><circle cx="14" cy="14" r="9.5" fill="#2e2e2e"/><circle cx="14" cy="14" r="6" fill="none" stroke="#888" stroke-width="0.8"/><text x="8.5" y="15.5" font-size="4" font-weight="bold" font-family="Liberation Sans" fill="#bbb" >LOGIC</text></svg>
<svg class="ico" style="left:1024.26px;top:1120.00px" width="29.00" height="29.00" viewBox="0 0 28 28"><rect x="2" y="2" width="24" height="25" fill="#1c1c1c"/><rect x="3" y="10" width="22" height="16" fill="#f4f4f4"/><path d="M5.75 10V26M8.5 10V26M11.25 10V26M14 10V26M16.75 10V26M19.5 10V26M22.25 10V26" stroke="#333" stroke-width="0.6"/><path d="M5 10V18M8 10V18M13 10V18M16 10V18M19.5 10V18" stroke="#111" stroke-width="1.6"/></svg>
<svg class="ico" style="left:1058.23px;top:1120.00px" width="29.00" height="29.00" viewBox="0 0 28 28"><circle cx="14" cy="14" r="12.5" fill="#f8f8fa" stroke="#c68ae8" stroke-width="1.2"/><path d="M11 8L20 6V17" fill="none" stroke="#e9456a" stroke-width="2.2"/><path d="M11 8V19" stroke="#b04ad8" stroke-width="2.2"/><ellipse cx="9" cy="19.5" rx="2.6" ry="2.1" fill="#8a5af0"/><ellipse cx="18" cy="17.5" rx="2.6" ry="2.1" fill="#4a8af0"/></svg>
<svg class="ico" style="left:1092.20px;top:1120.00px" width="29.00" height="29.00" viewBox="0 0 28 28"><rect x="1" y="2" width="26" height="25" fill="#c8141a"/><path d="M9 22Q15 22 16 14H20V11H17Q18 7 21 7V4Q14 4 13 11H10V14H12.5Q12 19 8 19Z" fill="#fff"/></svg>
<svg class="ico" style="left:1126.17px;top:1120.00px" width="29.00" height="29.00" viewBox="0 0 28 28"><path d="M15 13L26 2" stroke="#8a6a40" stroke-width="1.6"/><ellipse cx="11" cy="19" rx="8" ry="7" transform="rotate(-40 11 19)" fill="#b06020"/><ellipse cx="11" cy="19" rx="5" ry="4" transform="rotate(-40 11 19)" fill="#e0a040"/></svg>
<svg class="ico" style="left:1160.14px;top:1120.00px" width="29.00" height="29.00" viewBox="0 0 28 28"><path d="M14 2L26 14L14 26L2 14Z" fill="#b8cbe8"/><path d="M7 13L12 19L25 3" fill="none" stroke="#f29a18" stroke-width="3.2"/></svg>
<svg class="ico" style="left:1194.11px;top:1120.00px" width="29.00" height="29.00" viewBox="0 0 28 28"><circle cx="14" cy="14" r="12.5" fill="#4a4a4a" stroke="#999" stroke-width="1"/><path d="M6 16A8 8 0 0 1 22 16" fill="none" stroke="#111" stroke-width="2"/><rect x="4" y="15" width="4" height="6" rx="1.5" fill="#111"/><rect x="20" y="15" width="4" height="6" rx="1.5" fill="#111"/><rect x="10" y="11" width="8" height="9" rx="1.5" fill="#777"/></svg>
<svg class="ico" style="left:1228.08px;top:1120.00px" width="29.00" height="29.00" viewBox="0 0 28 28"><rect x="1" y="6" width="18" height="18" fill="#2a70c8"/><rect x="6" y="2" width="20" height="22" fill="#1c5aa8"/><rect x="14" y="4" width="12" height="6" fill="#40b040"/><rect x="10" y="12" width="6" height="10" fill="#3a60e0"/><rect x="17" y="13" width="7" height="10" fill="#e05030"/></svg>
<svg class="ico" style="left:1262.05px;top:1120.00px" width="29.00" height="29.00" viewBox="0 0 28 28"><rect x="1" y="1" width="26" height="26" rx="2" fill="#173a6e"/><path d="M5 14L14 6L23 14V25H5Z" fill="#fff"/><text x="10" y="22" font-size="9" font-weight="bold" font-family="Liberation Sans" fill="#173a6e" >G</text></svg>
<svg class="ico" style="left:1296.02px;top:1120.00px" width="29.00" height="29.00" viewBox="0 0 28 28"><rect x="3" y="3" width="20" height="17" fill="#e8d8b0" transform="rotate(-6 13 12)"/><rect x="4" y="5" width="18" height="13" fill="#5a88d8" transform="rotate(-6 13 12)"/><path d="M4 14L22 12V17L5 19Z" fill="#f0f4ff"/><circle cx="20" cy="21" r="4.5" fill="#9aa" stroke="#444" stroke-width="1.2"/></svg>
<svg class="ico" style="left:1329.99px;top:1120.00px" width="29.00" height="29.00" viewBox="0 0 28 28"><rect x="1" y="11" width="26" height="16" fill="#f6f0c0"/><text x="6" y="23" font-size="10" font-weight="bold" font-family="Liberation Sans" fill="#333" >App</text><rect x="5" y="2" width="4" height="16" fill="#6a5ac8"/><rect x="5" y="2" width="4" height="2" fill="#c8b080"/></svg>
<svg class="ico" style="left:1363.96px;top:1120.00px" width="29.00" height="29.00" viewBox="0 0 28 28"><circle cx="13" cy="13" r="11.5" fill="#1e1e1e"/><circle cx="13" cy="13" r="7.5" fill="#1a8ef0"/><path d="M17 17L25 25" stroke="#1e1e1e" stroke-width="4.5"/></svg>
<svg class="ico" style="left:1397.93px;top:1120.00px" width="29.00" height="29.00" viewBox="0 0 28 28"><path d="M2 6L25 2L26 5L3 9Z" fill="#111"/><path d="M6 5.3L9 8.5M12 4.3L15 7.5M18 3.3L21 6.5" stroke="#fff" stroke-width="2"/><rect x="3" y="10" width="22" height="4" fill="#111"/><path d="M6 10L8 14M11 10L13 14M16 10L18 14M21 10L23 14" stroke="#fff" stroke-width="2"/><rect x="3" y="14" width="22" height="12" fill="#1e64d0"/><path d="M14 16V22M10.5 19.5L14 23.5L17.5 19.5" stroke="#fff" stroke-width="2.5" fill="none"/></svg>
<svg class="ico" style="left:1431.90px;top:1120.00px" width="29.00" height="29.00" viewBox="0 0 28 28"><circle cx="13.5" cy="13.5" r="11" fill="none" stroke="#1f8ef8" stroke-width="4"/><path d="M13 14L20 7" stroke="#1f8ef8" stroke-width="3.5"/><path d="M20 20L25 25" stroke="#1f8ef8" stroke-width="4"/></svg>
<svg class="ico" style="left:1465.87px;top:1120.00px" width="29.00" height="29.00" viewBox="0 0 28 28"><path d="M11 3H17L24 24H4Z" fill="#f88a10"/><path d="M9.5 9H18.5L19.5 13H8.5Z M7.5 16H20.5L21.5 20H6.5Z" fill="#f4f4f4"/><path d="M2 24H26V27H2Z" fill="#f07a10"/></svg>
<svg class="ico" style="left:1499.84px;top:1120.00px" width="29.00" height="29.00" viewBox="0 0 28 28"><path d="M3 5H25L23 13H5Z" fill="#2a8af0"/><rect x="8" y="6" width="12" height="6" fill="#f4f4f4"/><path d="M14 13V24" stroke="#ccc" stroke-width="1.5"/><ellipse cx="14" cy="25" rx="5" ry="1.6" fill="#ccc"/></svg>
<svg class="ico" style="left:1533.81px;top:1120.00px" width="29.00" height="29.00" viewBox="0 0 28 28"><path d="M3 4L21 1L25 25L7 27Z" fill="#f6f6f6"/><path d="M3 4L21 1L22 6L4 9Z" fill="#f88a20"/><rect x="7" y="11" width="8" height="7" fill="#4a80d0" transform="rotate(-8 11 14)"/><path d="M25 2L17 25" stroke="#e8a820" stroke-width="2"/></svg>
<svg class="ico" style="left:1567.78px;top:1120.00px" width="29.00" height="29.00" viewBox="0 0 28 28"><rect x="1" y="1" width="26" height="26" rx="7" fill="#2d7cf6"/><rect x="6" y="10" width="11" height="9" rx="2" fill="#fff"/><path d="M17.5 13L22 10V19L17.5 16Z" fill="#fff"/></svg>
<svg class="ico" style="left:1601.75px;top:1120.00px" width="29.00" height="29.00" viewBox="0 0 28 28"><rect x="1" y="1" width="26" height="26" rx="2.5" fill="#1d6ec0" stroke="#e8e8f0" stroke-width="0.8"/><path d="M3 17L8 10L11 14L15 7L18 11L25 4" fill="none" stroke="#fff" stroke-width="1.4"/><ellipse cx="19" cy="21" rx="6" ry="3.5" fill="none" stroke="#fff" stroke-width="0.8"/><path d="M1 22Q4 18 7 27H1Z" fill="#e0a030"/></svg>
<svg class="ico" style="left:1635.72px;top:1120.00px" width="29.00" height="29.00" viewBox="0 0 28 28"><rect x="1" y="1" width="26" height="26" rx="1" fill="#e09880"/><path d="M2 14V10M4 14V6M6 14V11M8 14V8M10 14V4M12 14V9M14 14V7M16 14V10M18 14V8M20 14V11M22 14V6M24 14V9M26 14V10" stroke="#7a50d8" stroke-width="1.3"/><path d="M1 14H27" stroke="#d04040" stroke-width="0.8"/></svg>
<svg class="ico" style="left:1669.69px;top:1120.00px" width="29.00" height="29.00" viewBox="0 0 28 28"><circle cx="14" cy="14" r="13" fill="#fff"/><path d="M5 11Q14 3 23 11" fill="none" stroke="#2a7ef0" stroke-width="3"/><path d="M9 16Q14 11 19 16" fill="none" stroke="#8a8a9a" stroke-width="2.6"/><circle cx="14" cy="21" r="2" fill="#2a7ef0"/></svg>
<svg class="ico" style="left:1703.66px;top:1120.00px" width="29.00" height="29.00" viewBox="0 0 28 28"><rect x="1" y="1" width="26" height="26" rx="2" fill="#a8a8a8"/><circle cx="14" cy="14" r="11" fill="#2a2a2a"/><circle cx="14" cy="14" r="8.5" fill="#7a7a7a"/><circle cx="14" cy="14" r="6.5" fill="#3a3a3a"/><path d="M14 14V6M14 14L21 18M14 14L7 18" stroke="#bbb" stroke-width="2"/></svg>
<div class="a" style="left:1744px;top:1118px;width:1px;height:35px;background:rgba(90,30,10,.45)"></div>
<svg class="ico" style="left:1752.50px;top:1120.00px" width="29.00" height="29.00" viewBox="0 0 28 28"><rect x="0" y="4" width="26" height="19" fill="#d8f0f4"/><rect x="5" y="7" width="15" height="14" fill="#ccc"/><rect x="5" y="7" width="15" height="2" fill="#333"/><path d="M7 18L17 11L18 15Z" fill="#c03030"/><circle cx="22" cy="22" r="3.5" fill="#ff5a2a"/><circle cx="22.5" cy="22" r="2" fill="#7b3fe4"/></svg>
<svg class="ico" style="left:1786.50px;top:1120.00px" width="29.00" height="29.00" viewBox="0 0 28 28"><path d="M4 3H24L21.5 26Q21 27 20 27H8Q7 27 6.5 26Z" fill="#e4e6ea" stroke="#f4f4f4" stroke-width="0.8"/><ellipse cx="14" cy="3.5" rx="10" ry="1.6" fill="#d4d8de"/><path d="M10 6L11 25M18 6L17 25" stroke="#d0d4da" stroke-width="0.7"/></svg>
<div class="a" style="left:86.10px;top:1152px;width:3px;height:3px;border-radius:50%;background:#3a0808"></div>
<div class="a" style="left:120.07px;top:1152px;width:3px;height:3px;border-radius:50%;background:#3a0808"></div>
<div class="a" style="left:154.04px;top:1152px;width:3px;height:3px;border-radius:50%;background:#3a0808"></div>
<div class="a" style="left:357.86px;top:1152px;width:3px;height:3px;border-radius:50%;background:#3a0808"></div>
<div class="a" style="left:1376.96px;top:1152px;width:3px;height:3px;border-radius:50%;background:#3a0808"></div>
<div class="a" style="left:1614.75px;top:1152px;width:3px;height:3px;border-radius:50%;background:#3a0808"></div>
<div class="a" style="left:1648.72px;top:1152px;width:3px;height:3px;border-radius:50%;background:#3a0808"></div>
<div class="a" style="left:1682.69px;top:1152px;width:3px;height:3px;border-radius:50%;background:#3a0808"></div>
<div class="menu a"></div>
<div class="hl"></div>
<div class="mi" style="top:49px">Undo Move Box</div>
<div class="sc" style="top:49px"><svg width="11" height="11" viewBox="0 0 11 11" style="vertical-align:-1px;margin-right:1px"><path d="M3.5 3.5H7.5V7.5H3.5Z M3.5 3.5V2.2A1.3 1.3 0 1 0 2.2 3.5H3.5 M7.5 3.5V2.2A1.3 1.3 0 1 1 8.8 3.5H7.5 M3.5 7.5V8.8A1.3 1.3 0 1 1 2.2 7.5H3.5 M7.5 7.5V8.8A1.3 1.3 0 1 0 8.8 7.5H7.5" fill="none" stroke="#111" stroke-width="1.3"/></svg>Z</div>
<div class="mi d" style="top:67px">Redo</div>
<div class="sc d" style="top:67px"><svg width="11" height="12" viewBox="0 0 11 12" style="vertical-align:-1px;margin-right:3px"><path d="M5.5 1L10 6H7.5V10.5H3.5V6H1Z" fill="none" stroke="#6f7c8e" stroke-width="1.4" stroke-linejoin="round"/></svg><svg width="11" height="11" viewBox="0 0 11 11" style="vertical-align:-1px;margin-right:1px"><path d="M3.5 3.5H7.5V7.5H3.5Z M3.5 3.5V2.2A1.3 1.3 0 1 0 2.2 3.5H3.5 M7.5 3.5V2.2A1.3 1.3 0 1 1 8.8 3.5H7.5 M3.5 7.5V8.8A1.3 1.3 0 1 1 2.2 7.5H3.5 M7.5 7.5V8.8A1.3 1.3 0 1 0 8.8 7.5H7.5" fill="none" stroke="#6f7c8e" stroke-width="1.3"/></svg>Z</div>
<div class="sep" style="top:89px"></div>
<div class="mi" style="top:96px">Cut</div>
<div class="sc" style="top:96px"><svg width="11" height="11" viewBox="0 0 11 11" style="vertical-align:-1px;margin-right:1px"><path d="M3.5 3.5H7.5V7.5H3.5Z M3.5 3.5V2.2A1.3 1.3 0 1 0 2.2 3.5H3.5 M7.5 3.5V2.2A1.3 1.3 0 1 1 8.8 3.5H7.5 M3.5 7.5V8.8A1.3 1.3 0 1 1 2.2 7.5H3.5 M7.5 7.5V8.8A1.3 1.3 0 1 0 8.8 7.5H7.5" fill="none" stroke="#111" stroke-width="1.3"/></svg>X</div>
<div class="mi" style="top:114px">Copy</div>
<div class="sc" style="top:114px"><svg width="11" height="11" viewBox="0 0 11 11" style="vertical-align:-1px;margin-right:1px"><path d="M3.5 3.5H7.5V7.5H3.5Z M3.5 3.5V2.2A1.3 1.3 0 1 0 2.2 3.5H3.5 M7.5 3.5V2.2A1.3 1.3 0 1 1 8.8 3.5H7.5 M3.5 7.5V8.8A1.3 1.3 0 1 1 2.2 7.5H3.5 M7.5 7.5V8.8A1.3 1.3 0 1 0 8.8 7.5H7.5" fill="none" stroke="#111" stroke-width="1.3"/></svg>C</div>
<div class="mi" style="top:132px">Copy Compressed</div>
<div class="mi d" style="top:150px">Paste</div>
<div class="sc d" style="top:150px"><svg width="11" height="11" viewBox="0 0 11 11" style="vertical-align:-1px;margin-right:1px"><path d="M3.5 3.5H7.5V7.5H3.5Z M3.5 3.5V2.2A1.3 1.3 0 1 0 2.2 3.5H3.5 M7.5 3.5V2.2A1.3 1.3 0 1 1 8.8 3.5H7.5 M3.5 7.5V8.8A1.3 1.3 0 1 1 2.2 7.5H3.5 M7.5 7.5V8.8A1.3 1.3 0 1 0 8.8 7.5H7.5" fill="none" stroke="#6f7c8e" stroke-width="1.3"/></svg>V</div>
<div class="mi" style="top:168px">Delete</div>
<div class="sep" style="top:190px"></div>
<div class="mi" style="top:197px">Duplicate</div>
<div class="sc" style="top:197px"><svg width="11" height="11" viewBox="0 0 11 11" style="vertical-align:-1px;margin-right:1px"><path d="M3.5 3.5H7.5V7.5H3.5Z M3.5 3.5V2.2A1.3 1.3 0 1 0 2.2 3.5H3.5 M7.5 3.5V2.2A1.3 1.3 0 1 1 8.8 3.5H7.5 M3.5 7.5V8.8A1.3 1.3 0 1 1 2.2 7.5H3.5 M7.5 7.5V8.8A1.3 1.3 0 1 0 8.8 7.5H7.5" fill="none" stroke="#111" stroke-width="1.3"/></svg>D</div>
<div class="mi" style="top:215px">Select All</div>
<div class="sc" style="top:215px"><svg width="11" height="11" viewBox="0 0 11 11" style="vertical-align:-1px;margin-right:1px"><path d="M3.5 3.5H7.5V7.5H3.5Z M3.5 3.5V2.2A1.3 1.3 0 1 0 2.2 3.5H3.5 M7.5 3.5V2.2A1.3 1.3 0 1 1 8.8 3.5H7.5 M3.5 7.5V8.8A1.3 1.3 0 1 1 2.2 7.5H3.5 M7.5 7.5V8.8A1.3 1.3 0 1 0 8.8 7.5H7.5" fill="none" stroke="#111" stroke-width="1.3"/></svg>A</div>
<div class="mi d" style="top:233px">Paste Picture</div>
<div class="mi d" style="top:251px">Paste Replace</div>
<div class="sc d" style="top:251px"><svg width="12" height="11" viewBox="0 0 12 11" style="vertical-align:-1px;margin-right:2px"><path d="M1 2H4L8 9H11 M7 2H11" fill="none" stroke="#6f7c8e" stroke-width="1.3"/></svg><svg width="11" height="11" viewBox="0 0 11 11" style="vertical-align:-1px;margin-right:1px"><path d="M3.5 3.5H7.5V7.5H3.5Z M3.5 3.5V2.2A1.3 1.3 0 1 0 2.2 3.5H3.5 M7.5 3.5V2.2A1.3 1.3 0 1 1 8.8 3.5H7.5 M3.5 7.5V8.8A1.3 1.3 0 1 1 2.2 7.5H3.5 M7.5 7.5V8.8A1.3 1.3 0 1 0 8.8 7.5H7.5" fill="none" stroke="#6f7c8e" stroke-width="1.3"/></svg>V</div>
<div class="mi d" style="top:269px">Paste Using Defaults</div>
<div class="mi d" style="top:287px">Paste and Match Style</div>
<div class="sep" style="top:309px"></div>
<div class="mi" style="top:316px">Encapsulate</div>
<div class="sc" style="top:316px"><svg width="11" height="12" viewBox="0 0 11 12" style="vertical-align:-1px;margin-right:3px"><path d="M5.5 1L10 6H7.5V10.5H3.5V6H1Z" fill="none" stroke="#111" stroke-width="1.4" stroke-linejoin="round"/></svg><svg width="11" height="11" viewBox="0 0 11 11" style="vertical-align:-1px;margin-right:1px"><path d="M3.5 3.5H7.5V7.5H3.5Z M3.5 3.5V2.2A1.3 1.3 0 1 0 2.2 3.5H3.5 M7.5 3.5V2.2A1.3 1.3 0 1 1 8.8 3.5H7.5 M3.5 7.5V8.8A1.3 1.3 0 1 1 2.2 7.5H3.5 M7.5 7.5V8.8A1.3 1.3 0 1 0 8.8 7.5H7.5" fill="none" stroke="#111" stroke-width="1.3"/></svg>E</div>
<div class="mi" style="top:334px;color:#fff">De-encapsulate</div>
<div class="sc" style="top:334px;color:#fff"><svg width="11" height="12" viewBox="0 0 11 12" style="vertical-align:-1px;margin-right:3px"><path d="M5.5 1L10 6H7.5V10.5H3.5V6H1Z" fill="none" stroke="#fff" stroke-width="1.4" stroke-linejoin="round"/></svg><svg width="11" height="11" viewBox="0 0 11 11" style="vertical-align:-1px;margin-right:1px"><path d="M3.5 3.5H7.5V7.5H3.5Z M3.5 3.5V2.2A1.3 1.3 0 1 0 2.2 3.5H3.5 M7.5 3.5V2.2A1.3 1.3 0 1 1 8.8 3.5H7.5 M3.5 7.5V8.8A1.3 1.3 0 1 1 2.2 7.5H3.5 M7.5 7.5V8.8A1.3 1.3 0 1 0 8.8 7.5H7.5" fill="none" stroke="#fff" stroke-width="1.3"/></svg>D</div>
<div class="sep" style="top:356px"></div>
<div class="mi" style="top:363px">Find...</div>
<div class="sc" style="top:363px"><svg width="11" height="11" viewBox="0 0 11 11" style="vertical-align:-1px;margin-right:1px"><path d="M3.5 3.5H7.5V7.5H3.5Z M3.5 3.5V2.2A1.3 1.3 0 1 0 2.2 3.5H3.5 M7.5 3.5V2.2A1.3 1.3 0 1 1 8.8 3.5H7.5 M3.5 7.5V8.8A1.3 1.3 0 1 1 2.2 7.5H3.5 M7.5 7.5V8.8A1.3 1.3 0 1 0 8.8 7.5H7.5" fill="none" stroke="#111" stroke-width="1.3"/></svg>F</div>
<div class="mi d" style="top:381px">Find Next</div>
<div class="sc d" style="top:381px"><svg width="11" height="11" viewBox="0 0 11 11" style="vertical-align:-1px;margin-right:1px"><path d="M3.5 3.5H7.5V7.5H3.5Z M3.5 3.5V2.2A1.3 1.3 0 1 0 2.2 3.5H3.5 M7.5 3.5V2.2A1.3 1.3 0 1 1 8.8 3.5H7.5 M3.5 7.5V8.8A1.3 1.3 0 1 1 2.2 7.5H3.5 M7.5 7.5V8.8A1.3 1.3 0 1 0 8.8 7.5H7.5" fill="none" stroke="#6f7c8e" stroke-width="1.3"/></svg>G</div>
<div class="mi d" style="top:399px">Find Previous</div>
<div class="sc d" style="top:399px"><svg width="11" height="12" viewBox="0 0 11 12" style="vertical-align:-1px;margin-right:3px"><path d="M5.5 1L10 6H7.5V10.5H3.5V6H1Z" fill="none" stroke="#6f7c8e" stroke-width="1.4" stroke-linejoin="round"/></svg><svg width="11" height="11" viewBox="0 0 11 11" style="vertical-align:-1px;margin-right:1px"><path d="M3.5 3.5H7.5V7.5H3.5Z M3.5 3.5V2.2A1.3 1.3 0 1 0 2.2 3.5H3.5 M7.5 3.5V2.2A1.3 1.3 0 1 1 8.8 3.5H7.5 M3.5 7.5V8.8A1.3 1.3 0 1 1 2.2 7.5H3.5 M7.5 7.5V8.8A1.3 1.3 0 1 0 8.8 7.5H7.5" fill="none" stroke="#6f7c8e" stroke-width="1.3"/></svg>G</div>
<div class="sep" style="top:421px"></div>
<div class="mi" style="top:428px">Reinitialize</div>
<div class="mi" style="top:446px">Stop Scheduler</div>
<div class="sc" style="top:446px"><svg width="11" height="11" viewBox="0 0 11 11" style="vertical-align:-1px;margin-right:1px"><path d="M3.5 3.5H7.5V7.5H3.5Z M3.5 3.5V2.2A1.3 1.3 0 1 0 2.2 3.5H3.5 M7.5 3.5V2.2A1.3 1.3 0 1 1 8.8 3.5H7.5 M3.5 7.5V8.8A1.3 1.3 0 1 1 2.2 7.5H3.5 M7.5 7.5V8.8A1.3 1.3 0 1 0 8.8 7.5H7.5" fill="none" stroke="#111" stroke-width="1.3"/></svg>.</div>
<div class="mi d" style="top:464px">Resume</div>
<div class="sc d" style="top:464px"><svg width="11" height="11" viewBox="0 0 11 11" style="vertical-align:-1px;margin-right:1px"><path d="M3.5 3.5H7.5V7.5H3.5Z M3.5 3.5V2.2A1.3 1.3 0 1 0 2.2 3.5H3.5 M7.5 3.5V2.2A1.3 1.3 0 1 1 8.8 3.5H7.5 M3.5 7.5V8.8A1.3 1.3 0 1 1 2.2 7.5H3.5 M7.5 7.5V8.8A1.3 1.3 0 1 0 8.8 7.5H7.5" fill="none" stroke="#6f7c8e" stroke-width="1.3"/></svg>R</div>
<svg class="a" style="left:254px;top:344px" width="11" height="17" viewBox="0 0 13 19"><path d="M1 1V15L4.500 11.500L7 17.500L9.500 16.500L7 10.500H12Z" fill="#111" stroke="#fff" stroke-width="1.2"/></svg>
</div><div id="qttitle" class="a">
<div class="tl" style="left:7px;top:4px;width:12.5px;height:12.5px;background:#fc3d39"></div>
<div class="tl" style="left:27px;top:4px;width:12.5px;height:12.5px;background:#fdb024"></div>
<div class="tl" style="left:47px;top:4px;width:12.5px;height:12.5px;background:#26c940"></div>
<svg class="a" style="left:873px;top:3px" width="12" height="15" viewBox="0 0 12 15"><path d="M1 1H8L11 4V14H1Z" fill="#e8e8e8"/><path d="M3 7L6 5L9 8L6 11Z" fill="#3a6ab8"/></svg>
<span class="a" style="left:891px;top:2px;color:#dcdcdc;font-size:14px">Untitled</span>
<svg class="a" style="left:943px;top:8px" width="8" height="5" viewBox="0 0 8 5"><path d="M1 1L4 4L7 1" fill="none" stroke="#9a9a9a" stroke-width="1.2"/></svg>
</div>
</div><div id="qtedge" class="a"></div><div class="a" style="left:31px;top:1155px;width:1858px;height:50px;background:#de6646;border-radius:6px 6px 0 0;box-shadow:inset 0 1px 0 rgba(255,160,120,.35)"></div>
<svg class="ico" style="left:36.50px;top:1160.00px" width="31.00" height="31.00" viewBox="0 0 28 28"><rect x="0.5" y="1" width="27" height="26" rx="2" fill="#eaf0f8"/><path d="M2.5 1H15Q12 9 13.5 14H11Q11 21 12 27H2.5Q0.5 27 0.5 25V3Q0.5 1 2.5 1Z" fill="#1e88ee"/><path d="M6 20Q14 25 23 19" fill="none" stroke="#1a2a44" stroke-width="1.3"/><circle cx="8" cy="9" r="0.9" fill="#1a2a44"/><circle cx="21" cy="9" r="0.9" fill="#1a2a44"/></svg>
<svg class="ico" style="left:72.50px;top:1160.00px" width="31.00" height="31.00" viewBox="0 0 28 28"><path d="M6 4L22 1L26 24L10 27Z" fill="#e8e8e8"/><path d="M9 8L22 6M9 12L23 10M10 16L23 14M10 20L24 18" stroke="#bbb" stroke-width="0.6"/><path d="M7 1L12 3.5V9L7 11.5L2 9V3.5Z" fill="#222" stroke="#fff" stroke-width="0.7"/><text x="5.2" y="9" font-size="7" font-weight="bold" font-family="Liberation Sans" fill="#fff" >J</text><path d="M16 24L24 10" stroke="#4cae3c" stroke-width="2.4"/></svg>
<svg class="ico" style="left:108.50px;top:1160.00px" width="31.00" height="31.00" viewBox="0 0 28 28"><circle cx="14" cy="15.5" r="12" fill="#ff3750"/><path d="M2.5 13Q3 5 10 3Q7 7 8.5 9Q12 5 17 6Q13 2 20 2Q27 6 26.5 15Q26 8 21 6Q25 11 24 16Q22 8 15 8Z" fill="#ffb321"/><path d="M4 18Q3 10 9 7Q8 11 10 12Z" fill="#ff7a18"/><circle cx="14.5" cy="15.5" r="6.8" fill="#6b3bd8"/><path d="M8.5 13Q14 10 19 13Q15 11.5 12 14Z" fill="#ff9a28"/></svg>
<svg class="ico" style="left:144.50px;top:1160.00px" width="31.00" height="31.00" viewBox="0 0 28 28"><rect x="1" y="1" width="26" height="26" rx="5" fill="#f3f3f3"/><circle cx="14" cy="14" r="10.5" fill="#3aa757"/><path d="M14 3.5A10.5 10.5 0 0 1 23.1 8.75L14 14L4.9 8.75A10.5 10.5 0 0 1 14 3.5Z" fill="#e33b2e"/><path d="M23.1 8.75A10.5 10.5 0 0 1 14 24.5L14 14Z" fill="#fcc934"/><circle cx="14" cy="14" r="4.6" fill="#fff"/><circle cx="14" cy="14" r="3.6" fill="#4285f4"/></svg>
<svg class="ico" style="left:180.50px;top:1160.00px" width="31.00" height="31.00" viewBox="0 0 28 28"><rect x="1" y="1" width="26" height="26" rx="6" fill="#e8353a"/><circle cx="14" cy="14" r="8.5" fill="#fff"/><path d="M9.5 10L14 18.5L18.5 10" fill="none" stroke="#e8353a" stroke-width="3" stroke-linejoin="round"/></svg>
<svg class="ico" style="left:216.50px;top:1160.00px" width="31.00" height="31.00" viewBox="0 0 28 28"><circle cx="14" cy="14" r="12.5" fill="#f5f5f5"/><circle cx="14" cy="14" r="11" fill="#2d8bef"/><path d="M21 7L15.2 15.2L12.8 12.8Z" fill="#ff3b30"/><path d="M7 21L12.8 12.8L15.2 15.2Z" fill="#fff"/></svg>
<svg class="ico" style="left:252.50px;top:1160.00px" width="31.00" height="31.00" viewBox="0 0 28 28"><text x="12" y="21" font-size="22" font-weight="bold" font-family="Liberation Serif" fill="#f07818" stroke="#8a3a08" stroke-width="0.6" transform="rotate(6 18 12)">B</text><text x="0" y="26" font-size="24" font-weight="bold" font-family="Liberation Serif" fill="#3fae2a" stroke="#1c5a10" stroke-width="0.6" transform="rotate(-6 8 16)">F</text><text x="10" y="25" font-size="12" font-weight="bold" font-family="Liberation Serif" fill="#3fae2a">B</text></svg>
<svg class="ico" style="left:288.50px;top:1160.00px" width="31.00" height="31.00" viewBox="0 0 28 28"><rect x="1" y="3" width="26" height="22" rx="1.5" fill="#151515" stroke="#444" stroke-width="0.6"/><path d="M4 7L6.5 8.5L4 10M7 10.5H10" stroke="#fff" stroke-width="0.9" fill="none"/></svg>
<svg class="ico" style="left:324.50px;top:1160.00px" width="31.00" height="31.00" viewBox="0 0 28 28"><rect x="1" y="1" width="26" height="26" rx="2" fill="#353535"/><circle cx="16" cy="9" r="4" fill="none" stroke="#fff" stroke-width="2.2"/><circle cx="12" cy="18" r="5.5" fill="none" stroke="#fff" stroke-width="2.2"/><circle cx="12" cy="18" r="2.2" fill="#7fe0f0"/></svg>
<svg class="ico" style="left:360.50px;top:1160.00px" width="31.00" height="31.00" viewBox="0 0 28 28"><rect x="3" y="1.5" width="6" height="6" fill="#4cae3c" stroke="#1d5a1d" stroke-width="0.7"/><rect x="2" y="11" width="24" height="14" fill="#eee" stroke="#555" stroke-width="0.8"/><text x="3.5" y="22" font-size="11" font-weight="bold" font-family="Liberation Mono" fill="#111" >Pd</text></svg>
<svg class="ico" style="left:396.50px;top:1160.00px" width="31.00" height="31.00" viewBox="0 0 28 28"><rect x="1" y="1" width="26" height="26" rx="2.5" fill="#0f2340"/><text x="7" y="21" font-size="19" font-weight="normal" font-family="Liberation Sans" fill="#fff" >P</text><circle cx="17" cy="22" r="1.6" fill="none" stroke="#fff" stroke-width="0.8"/><circle cx="21" cy="22" r="1.6" fill="none" stroke="#fff" stroke-width="0.8"/></svg>
<svg class="ico" style="left:432.50px;top:1160.00px" width="31.00" height="31.00" viewBox="0 0 28 28"><rect x="1" y="1" width="26" height="26" rx="2.5" fill="#10233f"/><text x="6.5" y="23" font-size="21" font-weight="bold" font-family="Liberation Serif" fill="#fff" >P</text></svg>
<svg class="ico" style="left:468.50px;top:1160.00px" width="31.00" height="31.00" viewBox="0 0 28 28"><circle cx="14" cy="14" r="12.5" fill="#0a0a0a" stroke="#ddd" stroke-width="0.8"/><text x="8" y="21" font-size="14" font-weight="normal" font-family="Liberation Serif" fill="#fff" >i</text><text x="13" y="14" font-size="10" font-weight="normal" font-family="Liberation Serif" fill="#fff" >3</text></svg>
<svg class="ico" style="left:504.50px;top:1160.00px" width="31.00" height="31.00" viewBox="0 0 28 28"><circle cx="14" cy="14" r="13" fill="#1b969d"/><circle cx="9.5" cy="14" r="3.8" fill="none" stroke="#fff" stroke-width="2.2"/><circle cx="18.5" cy="14" r="3.8" fill="none" stroke="#fff" stroke-width="2.2"/></svg>
<svg class="ico" style="left:540.50px;top:1160.00px" width="31.00" height="31.00" viewBox="0 0 28 28"><path d="M14 1L26 7V21L14 27L2 21V7Z" fill="#6e6e6e"/><path d="M2 7L14 13L26 7L14 1Z" fill="#c8c8c8"/><path d="M14 13V27L26 21V7Z" fill="#444"/><path d="M6 12L10 14V19L6 17Z M18 14L22 12V17L18 19Z" fill="#aaa"/></svg>
<svg class="ico" style="left:576.50px;top:1160.00px" width="31.00" height="31.00" viewBox="0 0 28 28"><path d="M5 6Q14 -1 23 6L26 16Q24 26 14 27Q4 26 2 16Z" fill="#2b2b2b"/><path d="M9 13H19V16H9Z" fill="#d06030"/><circle cx="11" cy="20" r="1" fill="#9ad"/><circle cx="17" cy="20" r="1" fill="#9ad"/><path d="M10 6H18V10H10Z" fill="#456"/></svg>
<svg class="ico" style="left:612.50px;top:1160.00px" width="31.00" height="31.00" viewBox="0 0 28 28"><path d="M4 3L16 1L27 20L25 26L13 27L1 8Z" fill="#d8d8d8"/><path d="M4 3L16 1L26 19L14 21Z" fill="#151515"/></svg>
<svg class="ico" style="left:648.50px;top:1160.00px" width="31.00" height="31.00" viewBox="0 0 28 28"><path d="M7 2V26" stroke="#f4f4f4" stroke-width="3"/><path d="M1 13H27" stroke="#eee" stroke-width="2"/><circle cx="20" cy="10" r="3" fill="#111"/><path d="M16 13Q20 28 25 13Z" fill="#fff"/><path d="M15 26L19 20L23 26" stroke="#ddd" stroke-width="1.5" fill="none"/></svg>
<svg class="ico" style="left:684.50px;top:1160.00px" width="31.00" height="31.00" viewBox="0 0 28 28"><path d="M14 2L25 8V20L14 26L3 20V8Z" fill="#fff" stroke="#111" stroke-width="3.5" stroke-linejoin="round"/><path d="M14 14L25 8M14 14V26M14 14L3 8" stroke="#111" stroke-width="3.5"/></svg>
<svg class="ico" style="left:720.50px;top:1160.00px" width="31.00" height="31.00" viewBox="0 0 28 28"><path d="M2 7L20 4L23 23L5 26Z" fill="#3e9bf0"/><path d="M6 11L18 9M7 16L19 14M8 21L20 19" stroke="#9cd0ff" stroke-width="0.5"/><path d="M21 3L15 24" stroke="#333" stroke-width="2.2"/><path d="M17 2H25L24 6H18Z" fill="#bbb"/></svg>
<svg class="ico" style="left:756.50px;top:1160.00px" width="31.00" height="31.00" viewBox="0 0 28 28"><circle cx="14" cy="14" r="12.5" fill="#3a3218" stroke="#b8a060" stroke-width="1"/><circle cx="14" cy="14" r="8" fill="none" stroke="#8a7a40" stroke-width="0.7"/><circle cx="14" cy="14" r="4" fill="none" stroke="#8a7a40" stroke-width="0.7"/><path d="M14 14L22 6" stroke="#e8d070" stroke-width="1.2"/></svg>
<svg class="ico" style="left:792.50px;top:1160.00px" width="31.00" height="31.00" viewBox="0 0 28 28"><path d="M1 14Q4 -4 8 14Z" fill="#e03030"/><path d="M3 14Q6 0 10 14Z" fill="#40b040"/><path d="M6 14Q8 4 11 14Z" fill="#f0d020"/><path d="M14 14Q18 30 22 14Z" fill="#2040c0"/><path d="M16 14Q20 28 25 14Z" fill="#40b040"/><path d="M19 14Q22 24 27 14Z" fill="#e03030"/><path d="M1 14Q6 -3 13 14T27 14" fill="none" stroke="#111" stroke-width="1"/></svg>
<svg class="ico" style="left:828.50px;top:1160.00px" width="31.00" height="31.00" viewBox="0 0 28 28"><rect x="1" y="3" width="12" height="10" fill="#ccc" stroke="#333" stroke-width="0.8"/><path d="M3 9Q7 3 11 9Z" fill="#c02020"/><rect x="7" y="14" width="13" height="11" fill="#ddd" stroke="#333" stroke-width="0.8"/><path d="M9 21Q13.5 14 18 21Z" fill="#c02020"/><path d="M14 6H24V18" fill="none" stroke="#222" stroke-width="2"/></svg>
<svg class="ico" style="left:864.50px;top:1160.00px" width="31.00" height="31.00" viewBox="0 0 28 28"><path d="M3 5L21 2L24 24L6 27Z" fill="#3454c0" stroke="#7a8ad0" stroke-width="0.6"/><path d="M10 20L26 4" stroke="#c8a040" stroke-width="1.2"/></svg>
<svg class="ico" style="left:900.50px;top:1160.00px" width="31.00" height="31.00" viewBox="0 0 28 28"><path d="M4 2H20L22 5H6Z" fill="#777"/><path d="M3 6H20V17H3Z" fill="#cfe4f2"/><path d="M3 6H8V17H3Z" fill="#333"/><rect x="15" y="13" width="10" height="14" fill="#ddd" stroke="#999" stroke-width="0.5"/><rect x="17" y="15" width="3" height="4" fill="#d0a040"/></svg>
<svg class="ico" style="left:936.50px;top:1160.00px" width="31.00" height="31.00" viewBox="0 0 28 28"><rect x="2" y="4" width="24" height="18" fill="#f2f2f2"/><path d="M3 12L10 9V20L3 20Z" fill="#666"/><path d="M8 26L18 4M20 26L10 4" stroke="#999" stroke-width="1.2"/><circle cx="10" cy="3" r="2" fill="none" stroke="#aaa"/><circle cx="18" cy="3" r="2" fill="none" stroke="#aaa"/></svg>
<svg class="ico" style="left:972.50px;top:1160.00px" width="31.00" height="31.00" viewBox="0 0 28 28"><circle cx="14" cy="17" r="10" fill="#eeeedd" stroke="#c8c070" stroke-width="1.2"/><path d="M8 7Q14 0 20 7Q14 10 8 7Z" fill="#5cc040"/><circle cx="9" cy="5" r="2" fill="#5cc040"/><circle cx="19" cy="5" r="2" fill="#5cc040"/><path d="M14 17L10 12M14 17L19 14" stroke="#333" stroke-width="1"/></svg>
<svg class="ico" style="left:1008.50px;top:1160.00px" width="31.00" height="31.00" viewBox="0 0 28 28"><circle cx="14" cy="14" r="12.5" fill="#d6b030"/><circle cx="14" cy="14" r="9.5" fill="#2e2e2e"/><circle cx="14" cy="14" r="6" fill="none" stroke="#888" stroke-width="0.8"/><text x="8.5" y="15.5" font-size="4" font-weight="bold" font-family="Liberation Sans" fill="#bbb" >LOGIC</text></svg>
<svg class="ico" style="left:1044.50px;top:1160.00px" width="31.00" height="31.00" viewBox="0 0 28 28"><rect x="2" y="2" width="24" height="25" fill="#1c1c1c"/><rect x="3" y="10" width="22" height="16" fill="#f4f4f4"/><path d="M5.75 10V26M8.5 10V26M11.25 10V26M14 10V26M16.75 10V26M19.5 10V26M22.25 10V26" stroke="#333" stroke-width="0.6"/><path d="M5 10V18M8 10V18M13 10V18M16 10V18M19.5 10V18" stroke="#111" stroke-width="1.6"/></svg>
<svg class="ico" style="left:1080.50px;top:1160.00px" width="31.00" height="31.00" viewBox="0 0 28 28"><circle cx="14" cy="14" r="12.5" fill="#f8f8fa" stroke="#c68ae8" stroke-width="1.2"/><path d="M11 8L20 6V17" fill="none" stroke="#e9456a" stroke-width="2.2"/><path d="M11 8V19" stroke="#b04ad8" stroke-width="2.2"/><ellipse cx="9" cy="19.5" rx="2.6" ry="2.1" fill="#8a5af0"/><ellipse cx="18" cy="17.5" rx="2.6" ry="2.1" fill="#4a8af0"/></svg>
<svg class="ico" style="left:1116.50px;top:1160.00px" width="31.00" height="31.00" viewBox="0 0 28 28"><rect x="1" y="2" width="26" height="25" fill="#c8141a"/><path d="M9 22Q15 22 16 14H20V11H17Q18 7 21 7V4Q14 4 13 11H10V14H12.5Q12 19 8 19Z" fill="#fff"/></svg>
<svg class="ico" style="left:1152.50px;top:1160.00px" width="31.00" height="31.00" viewBox="0 0 28 28"><path d="M15 13L26 2" stroke="#8a6a40" stroke-width="1.6"/><ellipse cx="11" cy="19" rx="8" ry="7" transform="rotate(-40 11 19)" fill="#b06020"/><ellipse cx="11" cy="19" rx="5" ry="4" transform="rotate(-40 11 19)" fill="#e0a040"/></svg>
<svg class="ico" style="left:1188.50px;top:1160.00px" width="31.00" height="31.00" viewBox="0 0 28 28"><path d="M14 2L26 14L14 26L2 14Z" fill="#b8cbe8"/><path d="M7 13L12 19L25 3" fill="none" stroke="#f29a18" stroke-width="3.2"/></svg>
<svg class="ico" style="left:1224.50px;top:1160.00px" width="31.00" height="31.00" viewBox="0 0 28 28"><circle cx="14" cy="14" r="12.5" fill="#4a4a4a" stroke="#999" stroke-width="1"/><path d="M6 16A8 8 0 0 1 22 16" fill="none" stroke="#111" stroke-width="2"/><rect x="4" y="15" width="4" height="6" rx="1.5" fill="#111"/><rect x="20" y="15" width="4" height="6" rx="1.5" fill="#111"/><rect x="10" y="11" width="8" height="9" rx="1.5" fill="#777"/></svg>
<svg class="ico" style="left:1260.50px;top:1160.00px" width="31.00" height="31.00" viewBox="0 0 28 28"><rect x="1" y="6" width="18" height="18" fill="#2a70c8"/><rect x="6" y="2" width="20" height="22" fill="#1c5aa8"/><rect x="14" y="4" width="12" height="6" fill="#40b040"/><rect x="10" y="12" width="6" height="10" fill="#3a60e0"/><rect x="17" y="13" width="7" height="10" fill="#e05030"/></svg>
<svg class="ico" style="left:1296.50px;top:1160.00px" width="31.00" height="31.00" viewBox="0 0 28 28"><rect x="1" y="1" width="26" height="26" rx="2" fill="#173a6e"/><path d="M5 14L14 6L23 14V25H5Z" fill="#fff"/><text x="10" y="22" font-size="9" font-weight="bold" font-family="Liberation Sans" fill="#173a6e" >G</text></svg>
<svg class="ico" style="left:1332.50px;top:1160.00px" width="31.00" height="31.00" viewBox="0 0 28 28"><rect x="3" y="3" width="20" height="17" fill="#e8d8b0" transform="rotate(-6 13 12)"/><rect x="4" y="5" width="18" height="13" fill="#5a88d8" transform="rotate(-6 13 12)"/><path d="M4 14L22 12V17L5 19Z" fill="#f0f4ff"/><circle cx="20" cy="21" r="4.5" fill="#9aa" stroke="#444" stroke-width="1.2"/></svg>
<svg class="ico" style="left:1368.50px;top:1160.00px" width="31.00" height="31.00" viewBox="0 0 28 28"><rect x="1" y="11" width="26" height="16" fill="#f6f0c0"/><text x="6" y="23" font-size="10" font-weight="bold" font-family="Liberation Sans" fill="#333" >App</text><rect x="5" y="2" width="4" height="16" fill="#6a5ac8"/><rect x="5" y="2" width="4" height="2" fill="#c8b080"/></svg>
<svg class="ico" style="left:1404.50px;top:1160.00px" width="31.00" height="31.00" viewBox="0 0 28 28"><circle cx="13" cy="13" r="11.5" fill="#1e1e1e"/><circle cx="13" cy="13" r="7.5" fill="#1a8ef0"/><path d="M17 17L25 25" stroke="#1e1e1e" stroke-width="4.5"/></svg>
<svg class="ico" style="left:1440.50px;top:1160.00px" width="31.00" height="31.00" viewBox="0 0 28 28"><path d="M2 6L25 2L26 5L3 9Z" fill="#111"/><path d="M6 5.3L9 8.5M12 4.3L15 7.5M18 3.3L21 6.5" stroke="#fff" stroke-width="2"/><rect x="3" y="10" width="22" height="4" fill="#111"/><path d="M6 10L8 14M11 10L13 14M16 10L18 14M21 10L23 14" stroke="#fff" stroke-width="2"/><rect x="3" y="14" width="22" height="12" fill="#1e64d0"/><path d="M14 16V22M10.5 19.5L14 23.5L17.5 19.5" stroke="#fff" stroke-width="2.5" fill="none"/></svg>
<svg class="ico" style="left:1476.50px;top:1160.00px" width="31.00" height="31.00" viewBox="0 0 28 28"><circle cx="13.5" cy="13.5" r="11" fill="none" stroke="#1f8ef8" stroke-width="4"/><path d="M13 14L20 7" stroke="#1f8ef8" stroke-width="3.5"/><path d="M20 20L25 25" stroke="#1f8ef8" stroke-width="4"/></svg>
<svg class="ico" style="left:1512.50px;top:1160.00px" width="31.00" height="31.00" viewBox="0 0 28 28"><path d="M11 3H17L24 24H4Z" fill="#f88a10"/><path d="M9.5 9H18.5L19.5 13H8.5Z M7.5 16H20.5L21.5 20H6.5Z" fill="#f4f4f4"/><path d="M2 24H26V27H2Z" fill="#f07a10"/></svg>
<svg class="ico" style="left:1548.50px;top:1160.00px" width="31.00" height="31.00" viewBox="0 0 28 28"><path d="M3 5H25L23 13H5Z" fill="#2a8af0"/><rect x="8" y="6" width="12" height="6" fill="#f4f4f4"/><path d="M14 13V24" stroke="#ccc" stroke-width="1.5"/><ellipse cx="14" cy="25" rx="5" ry="1.6" fill="#ccc"/></svg>
<svg class="ico" style="left:1584.50px;top:1160.00px" width="31.00" height="31.00" viewBox="0 0 28 28"><path d="M3 4L21 1L25 25L7 27Z" fill="#f6f6f6"/><path d="M3 4L21 1L22 6L4 9Z" fill="#f88a20"/><rect x="7" y="11" width="8" height="7" fill="#4a80d0" transform="rotate(-8 11 14)"/><path d="M25 2L17 25" stroke="#e8a820" stroke-width="2"/></svg>
<svg class="ico" style="left:1620.50px;top:1160.00px" width="31.00" height="31.00" viewBox="0 0 28 28"><rect x="1" y="1" width="26" height="26" rx="7" fill="#2d7cf6"/><rect x="6" y="10" width="11" height="9" rx="2" fill="#fff"/><path d="M17.5 13L22 10V19L17.5 16Z" fill="#fff"/></svg>
<svg class="ico" style="left:1656.50px;top:1160.00px" width="31.00" height="31.00" viewBox="0 0 28 28"><rect x="1" y="1" width="26" height="26" rx="2.5" fill="#1d6ec0" stroke="#e8e8f0" stroke-width="0.8"/><path d="M3 17L8 10L11 14L15 7L18 11L25 4" fill="none" stroke="#fff" stroke-width="1.4"/><ellipse cx="19" cy="21" rx="6" ry="3.5" fill="none" stroke="#fff" stroke-width="0.8"/><path d="M1 22Q4 18 7 27H1Z" fill="#e0a030"/></svg>
<svg class="ico" style="left:1692.50px;top:1160.00px" width="31.00" height="31.00" viewBox="0 0 28 28"><rect x="1" y="1" width="26" height="26" rx="1" fill="#e09880"/><path d="M2 14V10M4 14V6M6 14V11M8 14V8M10 14V4M12 14V9M14 14V7M16 14V10M18 14V8M20 14V11M22 14V6M24 14V9M26 14V10" stroke="#7a50d8" stroke-width="1.3"/><path d="M1 14H27" stroke="#d04040" stroke-width="0.8"/></svg>
<svg class="ico" style="left:1728.50px;top:1160.00px" width="31.00" height="31.00" viewBox="0 0 28 28"><circle cx="14" cy="14" r="13" fill="#fff"/><path d="M5 11Q14 3 23 11" fill="none" stroke="#2a7ef0" stroke-width="3"/><path d="M9 16Q14 11 19 16" fill="none" stroke="#8a8a9a" stroke-width="2.6"/><circle cx="14" cy="21" r="2" fill="#2a7ef0"/></svg>
<svg class="ico" style="left:1764.50px;top:1160.00px" width="31.00" height="31.00" viewBox="0 0 28 28"><rect x="1" y="1" width="26" height="26" rx="2" fill="#a8a8a8"/><circle cx="14" cy="14" r="11" fill="#2a2a2a"/><circle cx="14" cy="14" r="8.5" fill="#7a7a7a"/><circle cx="14" cy="14" r="6.5" fill="#3a3a3a"/><path d="M14 14V6M14 14L21 18M14 14L7 18" stroke="#bbb" stroke-width="2"/></svg>
<div class="a" style="left:1806px;top:1158px;width:1px;height:37px;background:rgba(90,30,10,.45)"></div>
<svg class="ico" style="left:1816.50px;top:1160.00px" width="31.00" height="31.00" viewBox="0 0 28 28"><rect x="0" y="4" width="26" height="19" fill="#d8f0f4"/><rect x="5" y="7" width="15" height="14" fill="#ccc"/><rect x="5" y="7" width="15" height="2" fill="#333"/><path d="M7 18L17 11L18 15Z" fill="#c03030"/><circle cx="22" cy="22" r="3.5" fill="#ff5a2a"/><circle cx="22.5" cy="22" r="2" fill="#7b3fe4"/></svg>
<svg class="ico" style="left:1852.50px;top:1160.00px" width="31.00" height="31.00" viewBox="0 0 28 28"><path d="M4 3H24L21.5 26Q21 27 20 27H8Q7 27 6.5 26Z" fill="#e4e6ea" stroke="#f4f4f4" stroke-width="0.8"/><ellipse cx="14" cy="3.5" rx="10" ry="1.6" fill="#d4d8de"/><path d="M10 6L11 25M18 6L17 25" stroke="#d0d4da" stroke-width="0.7"/></svg>
<div class="a" style="left:50.40px;top:1194px;width:3.2px;height:3.2px;border-radius:50%;background:#3a0808"></div>
<div class="a" style="left:86.40px;top:1194px;width:3.2px;height:3.2px;border-radius:50%;background:#3a0808"></div>
<div class="a" style="left:122.40px;top:1194px;width:3.2px;height:3.2px;border-radius:50%;background:#3a0808"></div>
<div class="a" style="left:338.40px;top:1194px;width:3.2px;height:3.2px;border-radius:50%;background:#3a0808"></div>
<div class="a" style="left:1418.40px;top:1194px;width:3.2px;height:3.2px;border-radius:50%;background:#3a0808"></div>
<div class="a" style="left:1670.40px;top:1194px;width:3.2px;height:3.2px;border-radius:50%;background:#3a0808"></div>
<div class="a" style="left:1706.40px;top:1194px;width:3.2px;height:3.2px;border-radius:50%;background:#3a0808"></div>
<div class="a" style="left:1742.40px;top:1194px;width:3.2px;height:3.2px;border-radius:50%;background:#3a0808"></div>

</body></html>
